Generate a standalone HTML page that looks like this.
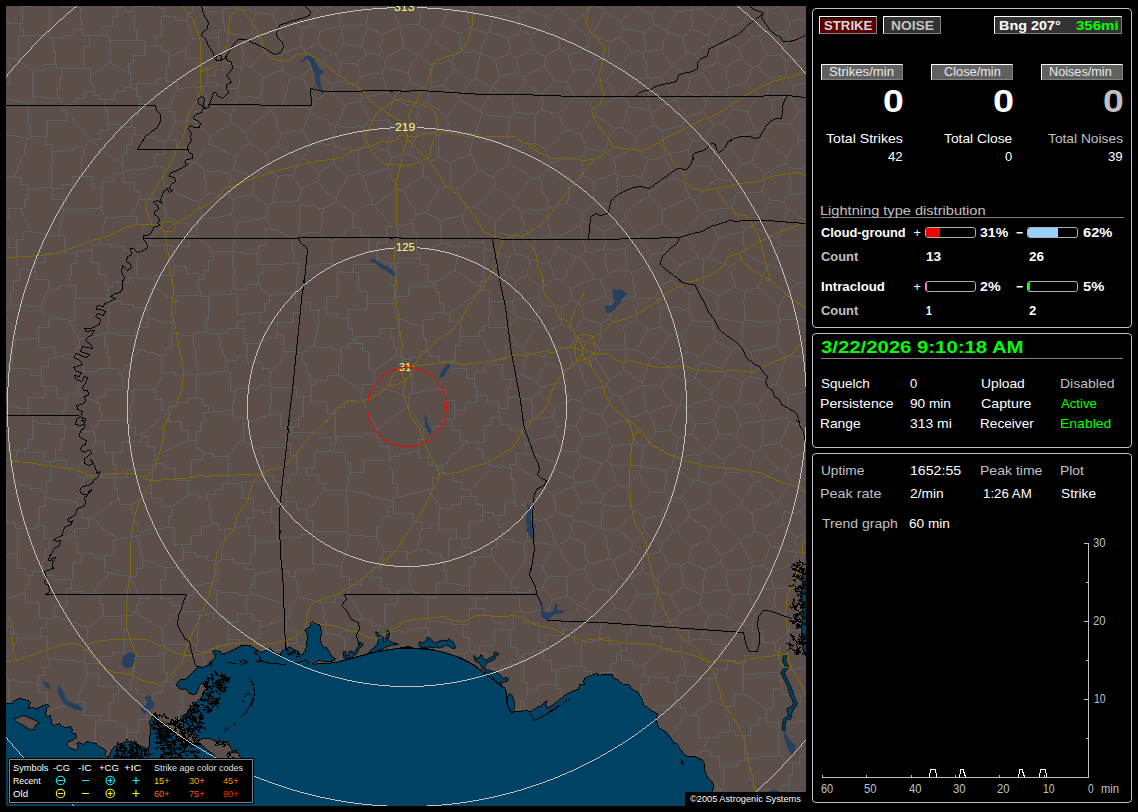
<!DOCTYPE html>
<html><head><meta charset="utf-8"><title>Lightning</title>
<style>
html,body{margin:0;padding:0;background:#000;}
body{width:1138px;height:812px;position:relative;overflow:hidden;font-family:"Liberation Sans",sans-serif;color:#fff;}
#map{position:absolute;left:6px;top:6px;width:800px;height:800px;background:#5c4f4a;overflow:hidden;}
#map svg{position:absolute;left:0;top:0;}
.pn{position:absolute;border:1px solid #c0c0c0;border-radius:4px;box-sizing:border-box;}
.t{position:absolute;white-space:nowrap;line-height:1;transform-origin:0 0;}
.r{transform-origin:100% 0;}
.g{color:#c0c0c0;}
.gr{color:#00e000;}
.b{font-weight:bold;}
.btn{position:absolute;box-sizing:border-box;border:1px solid;border-color:#fff #808080 #808080 #fff;background:#606060;}
.bar{position:absolute;box-sizing:border-box;border:1px solid #b0b0b0;border-radius:3px;height:11px;width:51px;}
.bar i{position:absolute;left:0;top:0;bottom:0;display:block;border-radius:2px 0 0 2px;}
.hl{position:absolute;height:1px;background:#808080;}
#leg{position:absolute;left:8px;top:758px;width:246px;height:46px;background:#000;}
#leg:before{content:"";position:absolute;left:1px;top:1px;right:1px;bottom:1px;border:1px solid #808080;}
#cpy{position:absolute;left:685px;top:792px;width:121px;height:14px;background:#000;}
</style></head><body>
<div id="map">
<svg width="800" height="800" viewBox="0 0 800 800" fill="none" stroke-linejoin="round" stroke-linecap="butt">
<g shape-rendering="crispEdges" stroke="#606060" stroke-width="1" ><path transform="translate(0,0.5)" d="M0 0m16 0h10m101 0h22m153 0h2m14 0h4m53 0h3m83 0h10m115 0h5m39 0h2m31 0h2m75 0h2m8 0h2m21 0h2m-720 1h20m32 0h13m71 0h10m26 0h4m73 0h2m10 0h2m4 0h5m27 0h6m7 0h2m9 0h3m203 0h2m5 0h5m36 0h2m108 0h2m8 0h2m15 0h4m-620 1h6m58 0h10m4 0h2m73 0h2m6 0h2m11 0h2m31 0h2m19 0h2m138 0h2m27 0h2m30 0h2m50 0h2m55 0h4m59 0h4m7 0h4m-695 1h3m156 0h2m4 0h5m64 0h2m2 0h2m15 0h2m31 0h2m19 0h2m73 0h3m58 0h2m2 0h2m163 0h3m4 0h3m60 0h7m-530 1h4m5 0h3m63 0h2m19 0h2m52 0h2m69 0h2m59 0h2m6 0h2m141 0h2m8 0h10m-569 1h10m71 0h18m29 0h2m194 0h13m59 0h2m129 0h2m22 0h8m-497 1h6m62 0h3m188 0h3m85 0h2m69 0h2m38 0h3m-390 1h11m267 0h3m25 0h2m41 0h2m39 0h3m-382 1h4m266 0h2m68 0h2m97 0h2m-213 1h10m34 0h2m5 0h2m160 0h2m-600 1h6m43 0h15m317 0h4m10 0h2m8 0h2m24 0h2m35 0h2m30 0h2m11 0h2m85 0h2m-205 1h2m3 0h3m28 0h2m167 0h2m3 0h2m-210 1h3m202 0h3m85 0h2m-190 1h2m104 0h2m74 0h6m-724 1h2m93 0h13m382 0h2m46 0h2m174 0h4m-792 1h3m563 0h2m46 0h2m169 0h3m-68 1h2m14 0h2m45 0h2m-783 1h15m200 0h2m68 0h2m444 0h3m-452 1h3m2 0h2m65 0h4m42 0h11m234 0h2m74 0h2m4 0h4m-452 1h3m20 0h2m1 0h2m24 0h2m3 0h18m37 0h9m35 0h2m210 0h2m74 0h4m-633 1h11m172 0h2m11 0h2m8 0h2m27 0h2m2 0h3m76 0h2m17 0h2m209 0h2m5 0h3m-378 1h3m15 0h8m25 0h4m30 0h2m27 0h3m47 0h2m21 0h2m71 0h2m32 0h2m82 0h2m-383 1h3m35 0h2m9 0h5m36 0h2m23 0h2m27 0h2m23 0h2m17 0h2m2 0h3m148 0h4m36 0h2m-591 1h10m194 0h2m44 0h5m43 0h3m18 0h2m31 0h2m23 0h3m12 0h2m7 0h3m149 0h5m33 0h2m25 0h2m-673 1h4m110 0h3m81 0h8m49 0h3m42 0h3m51 0h2m14 0h2m61 0h2m22 0h3m40 0h2m16 0h2m91 0h6m29 0h2m25 0h3m-470 1h2m43 0h4m101 0h2m10 0h2m43 0h2m45 0h3m6 0h2m31 0h2m12 0h2m29 0h2m12 0h2m54 0h5m54 0h3m65 0h4m11 0h4m-555 1h3m38 0h2m107 0h2m6 0h2m41 0h2m25 0h2m3 0h2m20 0h2m2 0h2m2 0h2m31 0h2m116 0h3m23 0h2m29 0h2m67 0h11m4 0h2m-554 1h2m17 0h3m12 0h4m111 0h2m2 0h2m99 0h2m6 0h2m31 0h2m5 0h2m135 0h4m27 0h3m81 0h2m-554 1h8m7 0h2m3 0h3m4 0h5m117 0h2m111 0h4m16 0h3m10 0h2m1 0h2m141 0h3m8 0h2m17 0h3m53 0h2m-739 1h27m13 0h11m8 0h28m131 0h2m3 0h2m8 0h4m239 0h4m9 0h3m71 0h2m4 0h3m82 0h4m2 0h2m22 0h2m-691 1h6m131 0h7m81 0h3m257 0h2m5 0h2m78 0h2m3 0h3m21 0h2m60 0h2m70 0h6m-710 1h15m141 0h14m286 0h2m1 0h2m88 0h3m16 0h2m132 0h2m35 0h4m-600 1h14m354 0h2m39 0h2m146 0h2m41 0h5m-194 1h3m8 0h2m48 0h2m131 0h4m-692 1h36m461 0h3m3 0h2m187 0h3m-695 1h2m498 0h3m192 0h2m-182 1h2m84 0h2m16 0h2m-388 1h4m366 0h2m12 0h2m2 0h2m-415 1h3m26 0h6m86 0h2m274 0h2m8 0h2m6 0h2m-420 1h3m35 0h6m82 0h2m274 0h8m-641 1h7m54 0h18m150 0h2m44 0h4m342 0h2m29 0h2m4 0h2m-444 1h3m8 0h2m273 0h3m114 0h2m33 0h2m-445 1h5m8 0h3m12 0h2m77 0h2m1 0h2m38 0h2m112 0h2m-342 1h6m67 0h3m9 0h4m17 0h3m72 0h2m5 0h2m123 0h2m23 0h2m2 0h2m20 0h2m-400 1h2m101 0h4m36 0h2m79 0h2m119 0h2m23 0h2m6 0h2m81 0h3m5 0h9m36 0h2m-647 1h3m105 0h8m12 0h3m100 0h3m42 0h2m6 0h2m57 0h2m12 0h2m36 0h2m11 0h3m7 0h5m51 0h2m23 0h2m25 0h2m53 0h6m8 0h5m-475 1h3m83 0h3m99 0h4m24 0h2m16 0h2m45 0h2m3 0h7m5 0h3m46 0h2m23 0h2m13 0h2m10 0h2m51 0h4m6 0h4m42 0h4m5 0h2m-521 1h2m89 0h4m61 0h4m34 0h5m39 0h2m63 0h3m26 0h2m13 0h2m13 0h2m32 0h5m113 0h5m-522 1h3m85 0h2m8 0h3m101 0h3m13 0h2m23 0h2m38 0h2m24 0h2m22 0h2m2 0h2m28 0h2m26 0h4m206 0h4m-649 1h12m25 0h3m101 0h8m47 0h2m47 0h2m9 0h2m27 0h2m34 0h2m28 0h3m17 0h2m14 0h2m20 0h2m2 0h2m219 0h11m-610 1h2m317 0h2m12 0h3m40 0h2m-183 1h2m16 0h2m3 0h2m33 0h2m66 0h3m7 0h2m13 0h2m1 0h2m88 0h2m-603 1h13m166 0h16m160 0h2m129 0h2m3 0h2m104 0h4m72 0h2m59 0h2m-729 1h2m344 0h2m133 0h3m98 0h8m7 0h2m125 0h3m60 0h6m-791 1h2m432 0h3m283 0h2m48 0h15m-783 1h3m425 0h4m284 0h2m-715 1h2m201 0h4m114 0h3m83 0h2m5 0h4m5 0h2m271 0h2m13 0h2m-711 1h2m85 0h3m16 0h6m93 0h4m113 0h11m77 0h2m4 0h5m172 0h2m97 0h2m2 0h2m-676 1h13m49 0h3m3 0h4m115 0h2m122 0h3m72 0h2m280 0h2m6 0h2m25 0h2m-724 1h2m77 0h2m10 0h2m48 0h3m64 0h2m7 0h6m370 0h3m88 0h3m15 0h2m-494 1h7m6 0h4m421 0h2m32 0h2m14 0h2m25 0h2m3 0h4m-559 1h8m110 0h2m65 0h3m153 0h2m162 0h2m45 0h3m-699 1h35m225 0h2m70 0h6m59 0h2m248 0h2m-675 1h2m183 0h9m86 0h6m78 0h4m57 0h2m81 0h2m36 0h15m86 0h2m-647 1h13m53 0h2m22 0h2m156 0h3m25 0h2m88 0h3m56 0h2m76 0h3m35 0h3m103 0h2m-585 1h2m26 0h3m128 0h2m19 0h4m26 0h2m93 0h4m128 0h2m-408 1h4m143 0h2m129 0h4m122 0h2m93 0h2m54 0h2m17 0h2m59 0h2m-492 1h2m11 0h2m84 0h12m127 0h10m9 0h2m168 0h2m63 0h2m-674 1h2m176 0h2m96 0h3m134 0h5m187 0h2m-609 1h2m115 0h9m52 0h2m94 0h4m94 0h2m37 0h4m21 0h2m166 0h3m-432 1h3m31 0h4m58 0h3m100 0h2m33 0h2m23 0h2m120 0h2m44 0h2m84 0h8m-524 1h3m25 0h9m167 0h2m174 0h4m2 0h2m4 0h8m28 0h2m82 0h4m-719 1h3m94 0h11m470 0h5m8 0h4m118 0h2m-450 1h2m143 0h2m3 0h3m119 0h3m34 0h4m133 0h2m-446 1h2m143 0h3m3 0h2m75 0h3m42 0h5m-438 1h12m161 0h2m138 0h2m76 0h10m37 0h3m-401 1h11m118 0h2m4 0h2m69 0h2m67 0h2m321 0h2m-670 1h21m186 0h15m56 0h2m67 0h2m257 0h4m55 0h3m-798 1h4m406 0h2m67 0h2m249 0h6m54 0h5m-585 1h11m191 0h2m20 0h4m43 0h2m243 0h4m11 0h2m44 0h3m-605 1h5m5 0h6m227 0h6m49 0h2m239 0h2m-609 1h10m52 0h6m5 0h5m220 0h2m8 0h3m57 0h3m36 0h2m196 0h2m-673 1h3m117 0h8m41 0h12m185 0h2m69 0h2m-364 1h5m99 0h2m164 0h2m21 0h2m19 0h3m47 0h2m-168 1h2m95 0h2m20 0h4m45 0h2m34 0h2m-452 1h11m19 0h10m204 0h2m170 0h2m86 0h2m133 0h3m-400 1h2m55 0h4m11 0h2m270 0h2m16 0h2m24 0h9m-344 1h4m155 0h2m150 0h3m-490 1h4m169 0h3m304 0h2m8 0h2m16 0h2m-619 1h7m221 0h2m9 0h2m36 0h5m319 0h4m88 0h4m-759 1h10m94 0h5m107 0h5m82 0h2m30 0h4m86 0h2m116 0h2m103 0h2m17 0h3m56 0h8m17 0h4m-745 1h6m191 0h9m5 0h5m79 0h2m25 0h3m140 0h2m107 0h7m54 0h3m27 0h2m57 0h2m12 0h3m-735 1h14m13 0h10m173 0h3m57 0h2m42 0h2m145 0h2m67 0h7m29 0h2m59 0h2m26 0h2m72 0h3m-774 1h5m89 0h15m201 0h2m75 0h3m216 0h2m10 0h2m48 0h2m93 0h2m2 0h4m-766 1h6m379 0h3m273 0h2m97 0h2m-756 1h6m335 0h3m38 0h2m60 0h2m146 0h2m59 0h2m-649 1h11m318 0h6m43 0h2m60 0h2m142 0h2m59 0h2m-464 1h3m74 0h2m63 0h4m51 0h3m17 0h2m3 0h2m35 0h2m101 0h2m35 0h2m59 0h2m-602 1h10m62 0h7m136 0h2m2 0h2m59 0h2m58 0h8m53 0h2m195 0h2m-456 1h2m67 0h2m6 0h3m54 0h2m68 0h2m53 0h2m191 0h2m-452 1h2m63 0h2m11 0h2m124 0h2m1 0h2m11 0h2m195 0h3m28 0h2m-448 1h3m51 0h2m5 0h2m15 0h14m128 0h2m36 0h2m158 0h7m-495 1h26m47 0h2m54 0h2m31 0h2m291 0h2m38 0h6m12 0h2m74 0h2m-516 1h2m50 0h2m35 0h3m164 0h2m64 0h2m54 0h2m46 0h4m86 0h3m-677 1h6m38 0h3m113 0h2m215 0h2m37 0h2m64 0h3m49 0h2m57 0h2m82 0h6m55 0h7m-637 1h6m19 0h13m16 0h2m44 0h2m208 0h3m56 0h2m6 0h4m10 0h2m90 0h2m48 0h2m40 0h4m-682 1h2m157 0h2m40 0h2m245 0h8m28 0h5m3 0h2m139 0h3m-636 1h2m159 0h2m82 0h2m209 0h11m22 0h3m138 0h3m-470 1h2m82 0h2m128 0h2m37 0h3m48 0h3m157 0h3m-565 1h8m346 0h11m194 0h3m-377 1h2m178 0h15m86 0h2m88 0h3m-372 1h2m365 0h2m-427 1h2m58 0h3m-65 1h2m63 0h4m58 0h3m213 0h2m-556 1h20m40 0h2m260 0h16m218 0h2m-431 1h22m58 1h2m-23 1h2m483 0h5m50 0h18m-763 1h3m77 0h13m209 0h2m5 0h2m51 0h4m319 0h5m-386 1h2m5 0h2m16 0h3m34 0h6m251 0h2m27 0h3m-458 1h2m107 0h2m5 0h4m10 0h2m3 0h2m38 0h6m204 0h2m37 0h2m4 0h2m18 0h5m89 0h2m-651 1h16m63 0h2m144 0h10m7 0h2m42 0h6m200 0h2m4 0h4m49 0h4m91 0h3m-690 1h2m141 0h2m188 0h3m199 0h4m4 0h2m22 0h2m10 0h2m9 0h2m93 0h2m-685 1h2m137 0h2m18 0h2m6 0h2m197 0h3m116 0h2m56 0h2m34 0h2m3 0h4m-586 1h2m14 0h10m94 0h2m13 0h2m22 0h2m2 0h2m52 0h3m142 0h2m3 0h5m109 0h2m2 0h4m90 0h3m-421 1h2m44 0h10m143 0h2m10 0h4m103 0h2m8 0h3m52 0h2m126 0h4m-474 1h5m127 0h8m150 0h4m50 0h2m118 0h6m4 0h2m-478 1h2m140 0h6m9 0h2m137 0h2m164 0h4m-618 1h7m143 0h2m148 0h9m302 0h3m-739 1h10m122 0h5m69 0h2m248 0h3m168 0h2m3 0h2m98 0h4m-726 1h5m9 0h18m95 0h5m317 0h5m264 0h4m-717 1h5m4 0h2m116 0h5m317 0h2m1 0h4m-451 1h4m123 0h3m316 0h2m3 0h3m224 0h2m56 0h2m-674 1h10m56 0h2m9 0h10m303 0h2m219 0h3m60 0h2m33 0h2m-643 1h4m320 0h2m208 0h9m100 0h3m-713 1h2m69 0h6m316 0h14m306 0h2m-713 1h2m403 0h2m268 0h2m-522 1h2m69 0h6m6 0h3m166 0h2m23 0h11m16 0h2m-509 1h8m73 0h6m78 0h2m38 0h2m62 0h5m6 0h6m34 0h2m135 0h3m31 0h2m12 0h2m-340 1h2m31 0h2m5 0h2m56 0h4m53 0h2m136 0h3m14 0h2m14 0h2m-326 1h2m38 0h2m20 0h2m56 0h3m32 0h5m138 0h5m-444 1h11m92 0h10m30 0h2m38 0h2m15 0h3m61 0h4m5 0h4m24 0h4m131 0h3m5 0h4m20 0h2m-325 1h2m51 0h2m6 0h2m60 0h5m32 0h2m163 0h2m41 0h4m42 0h2m3 0h2m90 0h2m-631 1h2m118 0h2m37 0h2m20 0h2m68 0h2m27 0h5m205 0h6m34 0h2m54 0h2m37 0h4m47 0h2m-716 1h12m28 0h2m118 0h2m59 0h3m67 0h7m25 0h3m208 0h6m26 0h2m54 0h2m34 0h5m-673 1h11m161 0h2m60 0h2m314 0h4m20 0h2m51 0h5m31 0h5m-494 1h2m35 0h2m408 0h6m101 0h2m-554 1h2m35 0h2m22 0h2m111 0h7m214 0h2m43 0h5m-551 1h5m27 0h11m65 0h2m59 0h2m107 0h2m7 0h2m57 0h2m151 0h2m42 0h3m-436 1h2m59 0h2m103 0h2m11 0h2m53 0h2m151 0h2m42 0h2m-556 1h2m184 0h2m94 0h7m15 0h2m49 0h2m112 0h4m28 0h2m5 0h2m42 0h2m-552 1h2m326 0h2m20 0h3m110 0h4m37 0h2m28 0h2m11 0h3m-363 1h2m2 0h2m131 0h2m4 0h2m15 0h3m111 0h2m39 0h2m40 0h3m-544 1h2m184 0h2m2 0h2m150 0h2m102 0h12m76 0h7m-539 1h2m188 0h2m123 0h3m10 0h2m7 0h3m102 0h2m-375 1h11m231 0h4m15 0h2m3 0h2m103 0h2m-110 1h3m98 0h7m193 0h3m-701 1h2m139 0h2m226 0h2m322 0h5m34 0h4m-666 1h2m208 0h2m408 0h3m9 0h2m25 0h3m-454 1h2m364 0h8m75 0h2m-628 1h12m147 0h2m200 0h2m188 0h8m65 0h2m-631 1h5m174 0h2m187 0h2m240 0h2m30 0h3m12 0h2m-664 1h5m118 0h2m57 0h2m59 0h2m115 0h2m288 0h12m-672 1h10m91 0h2m28 0h2m50 0h2m65 0h3m133 0h2m252 0h2m-647 1h5m72 0h3m24 0h2m2 0h2m80 0h2m2 0h2m16 0h2m39 0h2m96 0h3m18 0h2m19 0h2m239 0h2m-641 1h5m80 0h15m15 0h4m78 0h2m55 0h4m101 0h4m12 0h2m46 0h2m3 0h2m215 0h4m-549 1h8m11 0h4m14 0h2m111 0h4m147 0h2m239 0h3m-654 1h11m121 0h2m25 0h2m82 0h4m10 0h2m242 0h2m-435 1h2m64 0h3m94 0h2m6 0h4m4 0h2m4 0h4m184 0h2m56 0h2m72 0h2m-509 1h2m69 0h3m2 0h2m18 0h2m4 0h11m57 0h3m10 0h4m122 0h3m118 0h3m5 0h3m12 0h4m-630 1h9m57 0h21m160 0h2m22 0h4m66 0h2m72 0h2m1 0h2m45 0h2m18 0h3m34 0h2m54 0h2m20 0h3m11 0h12m4 0h3m-625 1h7m405 0h2m108 0h4m18 0h2m20 0h2m4 0h2m15 0h3m33 0h2m32 0h2m-144 1h5m64 0h3m72 0h2m41 0h2m-303 1h2m170 0h2m6 0h3m70 0h2m5 0h2m37 0h2m2 0h3m-308 1h2m49 0h2m94 0h2m12 0h2m13 0h2m2 0h2m71 0h2m9 0h2m42 0h8m-629 1h12m299 0h2m159 0h2m17 0h2m70 0h3m13 0h2m-560 1h12m179 0h4m93 0h2m250 0h2m47 0h2m-403 1h3m4 0h2m89 0h2m160 0h2m88 0h2m47 0h2m-692 1h8m34 0h11m99 0h2m135 0h2m9 0h2m247 0h2m88 0h2m-498 1h9m135 0h2m139 1h4m-414 1h14m252 0h2m137 0h5m4 0h2m5 0h2m-411 1h13m29 0h11m199 0h2m93 0h2m5 0h2m33 0h4m11 0h2m1 0h2m37 0h2m-471 1h12m356 0h2m2 0h2m36 0h2m59 0h2m153 0h2m-521 1h6m253 0h2m6 0h2m248 0h2m-480 1h2m326 0h2m146 0h2m109 0h3m-260 1h2m231 0h24m44 0h2m-630 1h2m31 0h4m114 0h2m464 0h11m-626 1h3m24 0h4m4 0h3m5 0h9m21 0h3m536 0h3m-612 1h3m32 0h5m24 0h6m537 0h2m-606 1h2m54 0h5m10 0h2m74 0h2m53 0h2m-202 1h2m47 0h5m93 0h2m49 0h2m260 0h2m41 0h2m-590 1h2m49 0h13m23 0h2m42 0h3m409 0h2m4 0h2m35 0h2m-665 1h4m24 0h12m75 0h14m37 0h2m8 0h2m440 0h2m40 0h3m5 0h2m-502 1h3m65 0h2m34 0h3m81 0h2m258 0h2m40 0h2m86 0h9m-584 1h4m82 0h5m5 0h5m38 0h2m145 0h2m155 0h2m40 0h2m97 0h3m-510 1h9m5 0h5m86 0h2m276 0h2m21 0h2m102 0h2m-520 1h2m4 0h2m59 0h2m42 0h2m188 0h3m25 0h3m6 0h6m27 0h2m38 0h3m-412 1h2m32 0h3m8 0h2m56 0h6m102 0h2m81 0h5m3 0h2m26 0h6m6 0h5m60 0h2m-372 1h2m3 0h3m2 0h2m13 0h2m35 0h4m187 0h4m10 0h2m41 0h4m54 0h2m-368 1h3m34 0h2m19 0h2m106 0h5m36 0h2m38 0h4m113 0h2m60 0h2m-634 1h3m214 0h2m7 0h2m17 0h2m15 0h2m103 0h5m45 0h2m32 0h2m21 0h2m91 0h3m60 0h2m-723 1h17m62 0h14m217 0h7m21 0h2m129 0h2m69 0h2m25 0h2m87 0h2m54 0h9m-666 1h25m260 0h2m158 0h2m17 0h5m6 0h10m38 0h2m74 0h2m51 0h5m67 0h2m-412 1h2m141 0h2m2 0h3m5 0h6m40 0h2m127 0h8m74 0h2m-412 1h2m141 0h2m56 0h2m1 0h2m41 0h2m77 0h2m84 0h2m-438 1h2m66 0h3m56 0h2m219 0h2m-352 1h2m64 0h4m3 0h2m366 0h2m-380 1h3m9 0h2m31 0h2m-239 1h8m198 0h2m27 0h2m-343 1h19m29 0h2m51 0h5m208 0h2m21 0h4m28 0h2m309 0h2m-794 1h3m96 0h14m49 0h2m39 0h10m45 0h3m167 0h2m14 0h5m345 0h2m-632 1h2m32 0h5m50 0h5m172 0h2m9 0h3m352 0h3m-633 1h2m26 0h4m50 0h5m184 0h4m44 0h2m4 0h2m-325 1h2m73 0h5m185 0h4m50 0h2m87 0h2m39 0h2m-449 1h2m61 0h10m335 0h2m35 0h2m-445 1h2m56 0h3m347 0h2m-408 1h7m221 0h6m204 0h2m41 0h2m-527 1h7m253 0h4m5 0h3m181 0h2m25 0h2m41 0h2m-473 1h2m203 0h3m4 0h5m174 0h2m10 0h2m21 0h2m40 0h3m5 0h2m-280 1h7m184 0h2m14 0h2m17 0h2m40 0h2m94 0h3m-562 1h6m154 0h10m214 0h2m18 0h2m13 0h2m39 0h3m93 0h3m3 0h2m-406 1h2m222 0h2m22 0h2m50 0h2m17 0h2m75 0h2m8 0h2m-492 1h10m72 0h2m222 0h2m26 0h2m6 0h2m38 0h2m108 0h2m-484 1h3m245 0h2m76 0h2m2 0h2m152 0h2m-738 1h10m245 0h2m215 0h2m22 0h2m4 0h2m41 0h2m33 0h2m136 0h3m17 0h2m-730 1h6m241 0h2m24 0h14m177 0h2m67 0h2m169 0h4m22 0h2m-726 1h5m238 0h2m14 0h8m107 0h4m82 0h5m60 0h2m108 0h11m50 0h2m28 0h2m-723 1h6m234 0h2m35 0h2m181 0h5m6 0h2m45 0h2m77 0h3m84 0h7m32 0h2m-719 1h15m123 0h10m88 0h2m7 0h2m63 0h9m140 0h2m2 0h2m34 0h2m9 0h2m75 0h4m128 0h2m-483 1h2m50 0h2m169 0h2m32 0h4m2 0h2m5 0h2m165 0h2m44 0h3m-768 1h3m281 0h2m33 0h2m11 0h2m192 0h2m8 0h3m8 0h2m1 0h2m160 0h3m53 0h3m-441 1h2m145 0h13m38 0h2m2 0h4m179 0h3m53 0h2m-763 1h8m118 0h9m183 0h2m200 0h2m-209 1h2m1 0h2m336 0h2m-471 1h2m0 1h2m171 0h11m82 0h15m-44 1h10m-359 1h21m325 0h3m-303 1h11m2 0h23m85 0h8m169 0h2m344 0h24m-694 1h14m47 0h17m244 0h2m14 0h21m-462 1h9m414 0h2m125 0h2m-131 1h2m53 0h2m74 0h2m56 0h8m-199 1h2m57 0h2m112 0h12m4 0h2m-534 1h8m32 0h14m94 0h2m58 0h2m74 0h9m48 0h2m61 0h2m73 0h2m31 0h4m12 0h4m-540 1h9m128 0h21m189 0h2m65 0h4m91 0h3m5 0h3m-532 1h13m156 0h10m178 0h2m71 0h5m67 0h2m20 0h5m68 0h4m-621 1h21m177 0h17m157 0h5m78 0h2m13 0h2m52 0h2m84 0h7m4 0h2m-166 1h2m9 0h2m2 0h4m50 0h2m79 0h3m92 0h2m-245 1h2m15 0h3m49 0h2m174 0h2m-245 1h2m2 0h2m12 0h3m48 0h2m3 0h2m169 0h2m-376 1h2m129 0h2m17 0h2m48 0h3m117 0h3m8 0h3m30 0h2m10 0h2m-376 1h2m18 0h22m274 0h2m3 0h3m3 0h2m3 0h3m25 0h2m-48 1h2m8 0h3m8 0h2m40 0h2m-549 1h6m167 0h2m146 0h8m153 0h2m23 0h2m40 0h2m-623 1h2m245 0h2m152 0h2m148 0h3m27 0h2m40 0h2m-726 1h10m46 0h8m286 0h2m152 0h2m5 0h3m135 0h3m32 0h2m40 0h2m-692 1h6m206 0h16m21 0h13m54 0h12m142 0h5m130 0h2m4 0h2m37 0h2m40 0h2m-508 1h27m69 0h24m42 0h9m252 0h2m41 0h3m7 0h2m30 0h2m3 0h2m-756 1h2m291 0h12m13 0h2m311 0h2m77 0h2m3 0h2m34 0h3m2 0h3m-601 1h13m457 0h3m81 0h3m44 0h2m-479 1h12m332 0h2m6 0h2m-635 1h11m612 0h2m-303 1h2m297 0h2m-613 1h9m167 0h6m274 0h2m129 0h14m8 0h2m-301 1h6m110 0h4m155 0h2m14 0h2m3 0h3m143 0h2m-439 1h17m91 0h3m4 0h2m151 0h2m18 0h3m148 0h2m-597 1h13m249 0h2m9 0h2m147 0h2m173 0h2m-716 1h3m26 0h8m152 0h5m183 0h2m55 0h2m-351 1h21m287 0h2m37 0h2m2 0h2m19 0h2m258 0h2m-290 1h3m6 0h2m14 0h3m-398 1h9m359 0h2m11 0h2m10 0h2m-387 1h19m311 0h2m23 0h5m15 0h2m6 0h2m34 0h2m35 0h3m-560 1h14m149 0h6m236 0h2m26 0h2m17 0h4m22 0h2m2 0h2m34 0h2m2 0h4m29 0h2m3 0h4m-586 1h7m415 0h5m45 0h2m28 0h2m34 0h2m8 0h2m25 0h2m9 0h3m68 0h2m-245 1h9m35 0h2m7 0h5m47 0h2m52 0h2m80 0h2m123 0h2m-683 1h17m344 0h2m59 0h2m47 0h3m80 0h2m5 0h2m120 0h2m2 0h7m-225 1h2m81 0h2m131 0h2m-645 1h2m90 0h13m319 0h3m-522 1h17m314 0h5m82 0h2m66 0h2m29 0h2m99 0h2m115 0h2m-691 1h8m295 0h25m46 0h2m61 0h3m29 0h2m103 0h2m-141 1h2m30 0h2m127 0h2m31 0h3m19 0h2m-608 1h7m413 0h2m127 0h2m2 0h2m26 0h3m3 0h2m13 0h4m2 0h2m-712 1h12m97 0h2m72 0h16m436 0h2m12 0h2m6 0h2m22 0h2m8 0h2m8 0h3m8 0h2m-603 1h2m37 0h3m279 0h10m217 0h2m18 0h2m12 0h2m3 0h3m-486 1h2m93 0h10m326 0h2m13 0h3m13 0h2m16 0h3m-736 1h4m148 0h2m101 0h2m168 0h5m37 0h2m208 0h2m23 0h2m9 0h2m-494 1h7m29 0h2m13 0h14m395 0h2m21 0h2m5 0h2m-515 1h24m37 0h14m433 0h2m1 0h2m65 0h2m-611 1h24m272 0h2m-275 1h9m117 0h12m55 0h16m195 0h2m27 0h3m-469 1h3m361 0h8m63 0h2m24 0h5m3 0h2m15 0h3m-582 1h32m64 0h4m295 0h2m47 0h5m5 0h3m68 0h3m21 0h5m10 0h15m-547 1h4m357 0h2m46 0h3m5 0h5m69 0h2m19 0h5m-448 1h3m335 0h2m57 0h2m19 0h4m16 0h5m153 0h2m-664 1h13m53 0h3m311 0h24m76 0h4m17 0h3m-318 1h16m128 0h5m131 0h2m10 0h2m-325 1h6m97 0h27m147 0h2m34 0h2m6 0h2m-466 1h13m409 0h2m20 0h2m12 0h2m2 0h2m-577 1h23m429 0h2m83 0h4m5 0h4m23 0h2m-577 1h2m22 0h11m508 0h5m4 0h2m2 0h2m112 0h2m-545 1h12m415 0h2m99 0h3m9 0h3m2 0h2m-361 1h8m129 0h2m206 0h9m7 0h2m4 0h3m-545 1h7m197 0h20m86 0h2m226 0h4m-376 1h10m131 1h2m-201 1h13m28 0h9m131 0h11m-272 1h4m68 0h9m73 0h12m105 0h7m-213 1h8m-98 3h3m367 0h2m-471 1h11m91 0h4m52 0h3m128 0h12m170 0h3m62 0h2m129 0h9m69 0h5m-740 1h11m85 0h2m241 0h8m18 0h11m88 0h10m54 0h3m18 0h2m104 0h2m9 0h5m53 0h11m5 0h5m-735 1h7m81 0h3m246 0h2m125 0h3m54 0h3m19 0h2m21 0h2m57 0h4m32 0h5m10 0h9m26 0h3m21 0h2m-646 1h2m5 0h3m68 0h8m204 0h12m74 0h2m55 0h3m37 0h2m4 0h2m57 0h15m22 0h10m9 0h6m5 0h12m-615 1h5m3 0h2m89 0h34m114 0h2m185 0h3m5 0h2m9 0h2m14 0h2m127 0h5m12 0h3m-608 1h2m237 0h2m186 0h2m16 0h2m10 0h2m-218 1h9m139 0h3m37 0h2m24 0h2m-207 1h3m59 0h6m69 0h2m3 0h3m53 0h2m3 0h2m-88 1h3m15 0h2m8 0h2m53 0h3m35 0h2m-623 1h11m86 0h13m340 0h22m31 0h3m10 0h2m12 0h2m86 0h3m-432 1h18m135 0h18m110 0h2m34 0h2m5 0h3m16 0h2m2 0h2m70 0h2m4 0h4m-308 1h5m196 0h2m21 0h2m74 0h4m-173 1h5m63 0h2m-356 2h14m458 0h2m-565 1h16m53 0h9m26 0h22m-130 1h4m78 0h2m95 0h7m384 0h10m-582 1h2m19 0h19m46 0h9m487 0h4m-590 1h4m95 0h3m162 0h25m79 0h20m-393 1h5m176 0h10m113 0h3m181 0h4m-550 1h10m43 0h5m336 0h4m152 0h3m-567 1h15m49 0h3m177 1h10m83 0h5m228 2h4m128 0h2m-475 1h16m88 0h15m226 0h4m0 1h3m124 0h2m-618 1h4m204 0h3m140 0h6m44 0h13m33 0h4m41 0h2m124 0h3m51 0h2m-260 1h2m35 0h5m148 0h2m15 0h2m13 0h2m31 0h3m-738 1h17m20 0h5m229 0h2m3 0h19m8 0h8m44 0h4m123 0h2m38 0h5m173 0h2m2 0h2m25 0h4m-761 1h4m149 0h7m393 0h3m160 0h2m5 0h3m6 0h2m18 0h5m-634 1h7m190 0h10m257 0h38m96 0h2m24 0h5m-622 1h2m493 0h2m19 0h2m71 0h2m14 0h2m5 0h5m-621 1h2m4 0h2m137 0h14m7 0h2m56 0h7m50 0h11m209 0h2m111 0h2m-608 1h8m143 0h4m225 0h4m159 0h2m59 0h2m-598 1h2m145 0h2m227 0h4m108 0h2m41 0h2m-624 1h15m78 0h2m376 0h3m155 0h2m6 0h2m-544 1h8m371 0h5m152 0h2m2 0h2m-646 1h10m173 0h11m148 0h8m25 0h11m102 0h3m101 0h2m48 0h2m88 0h20m-699 1h3m284 0h2m13 0h11m228 0h2m3 0h2m-607 1h7m337 0h2m256 0h3m2 0h2m-267 1h2m11 0h7m84 0h12m87 0h3m61 0h2m19 0h2m-453 1h11m150 0h2m201 0h2m82 0h3m-292 1h2m51 0h17m133 0h2m82 0h2m-449 1h2m19 0h16m283 0h2m39 0h2m72 0h2m36 0h4m-626 1h7m45 0h2m95 0h2m74 0h5m31 0h4m206 0h2m35 0h2m116 0h6m-582 1h2m253 0h2m100 0h19m47 0h3m30 0h2m79 0h2m43 0h3m-704 1h5m112 0h2m97 0h4m221 0h2m102 0h2m18 0h4m4 0h2m83 0h2m44 0h2m-673 1h8m400 0h2m104 0h2m14 0h2m4 0h4m87 0h2m44 0h2m-338 1h2m177 0h2m157 0h4m-712 1h23m66 0h22m143 0h9m105 0h2m72 0h17m92 0h3m6 0h2m150 0h3m-450 1h2m93 0h8m186 0h2m2 0h2m-4 1h2m57 0h2m-544 1h17m118 0h15m39 0h2m202 0h11m140 0h2m-507 1h2m39 0h15m36 0h4m54 0h2m355 0h2m-511 1h2m81 0h5m4 0h2m197 0h3m258 0h2m-554 1h5m52 0h26m5 0h4m96 0h5m210 0h2m95 0h2m52 0h3m49 0h2m-696 1h12m154 0h2m129 0h12m180 0h2m2 0h2m90 0h3m57 0h2m49 0h3m-723 1h3m330 0h2m176 0h2m6 0h2m86 0h2m114 0h3m18 0h3m-412 1h2m172 0h2m10 0h2m82 0h2m19 0h2m98 0h3m13 0h2m3 0h2m-289 1h9m37 0h3m14 0h2m78 0h2m23 0h2m58 0h2m39 0h2m18 0h5m-258 1h10m19 0h3m102 0h2m42 0h2m10 0h2m2 0h2m39 0h2m6 0h2m13 0h4m-449 1h13m17 0h2m187 0h2m102 0h2m42 0h2m6 0h2m47 0h2m2 0h2m19 0h2m-230 1h2m102 0h3m41 0h2m2 0h2m51 0h2m23 0h2m-690 1h4m476 0h3m125 0h2m80 0h2m-501 1h2m78 0h2m60 0h2m140 0h5m-289 1h2m80 0h2m9 0h13m174 0h4m218 0h6m-519 1h13m39 0h6m58 0h2m171 0h2m57 0h2m33 0h17m-617 1h16m297 0h2m20 0h3m95 0h3m66 0h4m57 0h2m33 0h2m17 0h4m116 0h2m-658 1h6m142 0h27m59 0h2m21 0h3m158 0h3m53 0h8m33 0h2m65 0h2m-470 1h23m123 0h4m121 0h4m83 0h2m39 0h2m69 0h2m-603 1h18m10 0h23m203 0h2m25 0h4m43 0h13m146 0h2m39 0h2m-274 1h2m27 0h2m31 0h10m153 0h6m39 0h2m-506 1h7m96 0h7m124 0h2m29 0h3m25 0h3m380 0h3m-411 1h2m18 0h5m208 0h2m169 0h4m-736 1h13m317 0h3m9 0h6m121 0h2m88 0h2m168 0h3m-719 1h2m318 0h2m211 0h2m9 0h2m166 0h4m-714 1h2m225 0h3m90 0h3m71 0h12m127 0h4m3 0h2m164 0h4m-708 1h2m11 0h9m190 0h14m95 0h3m211 0h3m-594 1h18m40 0h2m273 0h2m45 0h2m97 0h13m23 0h2m121 0h2m-612 1h12m119 0h16m316 0h13m13 0h2m164 0h2m-624 1h2m64 0h7m408 0h6m132 0h3m-620 1h2m352 0h10m112 0h3m6 0h4m124 0h4m-615 1h2m137 0h3m76 0h17m16 0h18m125 0h12m66 0h2m133 0h4m34 0h2m-645 1h3m79 0h11m277 0h12m86 0h2m132 0h3m36 0h2m2 0h2m-645 1h3m461 0h2m131 0h3m45 0h2m4 0h5m-82 1h3m18 0h2m50 0h4m5 0h3m-554 1h7m459 0h3m3 0h2m3 0h3m7 0h3m40 0h2m22 0h2m-751 1h12m149 0h10m379 0h2m106 0h3m8 0h3m3 0h2m2 0h3m30 0h3m6 0h4m-397 1h10m61 0h2m254 0h3m19 0h2m36 0h6m-710 1h11m375 0h2m92 0h10m151 0h3m-501 1h8m415 0h2m70 0h3m-435 1h9m168 0h2m51 0h12m120 0h2m65 0h3m-594 1h4m33 0h3m110 0h12m364 0h2m56 0h2m2 0h3m-449 1h8m378 0h4m49 0h3m2 0h2m-644 1h2m158 0h3m158 0h9m258 0h3m44 0h2m-375 1h13m115 0h2m199 0h3m39 0h2m-613 1h5m233 0h2m332 0h2m35 0h2m-477 1h2m99 0h3m32 0h6m246 0h3m77 0h7m-405 1h12m17 0h2m129 0h2m97 0h9m40 0h10m230 0h4m-526 1h3m271 0h8m237 0h3m4 0h4m-630 1h2m96 0h2m184 0h13m75 0h2m94 0h3m143 0h5m-680 1h34m122 0h3m132 0h2m138 0h2m94 0h2m134 0h12m-740 1h6m130 0h14m68 0h3m133 0h2m229 0h7m88 0h2m41 0h5m-560 1h5m42 0h3m365 0h2m92 0h3m34 0h9m35 0h2m-755 1h13m195 0h2m366 0h2m82 0h12m35 0h2m46 0h2m9 0h2m-756 1h16m178 0h2m254 0h12m183 0h3m45 0h2m50 0h4m3 0h2m-319 1h8m68 0h12m38 0h2m128 0h2m56 0h3m-708 1h5m52 0h2m140 0h7m134 0h10m114 0h3m12 0h4m31 0h3m-546 1h11m55 0h6m144 0h13m86 0h2m-90 1h2m83 0h3m-305 1h10m207 0h2m130 0h11m235 0h2m-490 1h8m102 0h2m159 0h9m49 0h12m143 0h4m-663 1h3m74 0h11m102 0h5m90 0h2m362 0h10m-522 1h2m146 0h28m284 0h3m-513 1h3m267 0h14m222 0h4m88 0h2m-558 1h7m454 0h3m88 0h4m27 0h14m-447 1h7m260 0h2m37 0h5m78 0h2m8 0h3m45 0h3m-594 1h7m187 0h29m185 0h3m33 0h6m85 0h2m2 0h4m51 0h2m-419 1h13m4 0h2m210 0h2m33 0h3m93 0h2m-619 1h4m270 0h2m39 0h5m158 0h8m-519 1h5m302 0h2m81 0h6m113 0h2m-352 1h10m45 0h2m216 0h8m66 0h3m-442 1h10m17 0h20m43 0h2m53 0h2m1 0h2m221 0h2m64 0h2m-352 1h3m53 0h2m5 0h2m87 0h3m129 0h19m43 0h4m247 0h2m-601 1h2m65 0h2m36 0h6m39 0h5m190 0h3m107 0h4m8 0h2m127 0h3m-602 1h3m69 0h2m368 0h16m10 0h2m2 0h2m116 0h9m-601 1h2m74 0h2m209 0h2m147 0h8m21 0h2m1 0h2m6 0h2m89 0h2m19 0h4m-620 1h8m18 0h2m205 0h10m263 0h2m83 0h2m21 0h2m-509 1h2m5 0h25m369 0h3m87 0h2m-723 1h5m141 0h2m84 0h2m400 0h2m123 0h2m-730 1h7m106 0h2m26 0h7m55 0h2m217 0h6m177 0h2m43 0h4m39 0h2m8 0h2m25 0h2m-779 1h17m141 0h2m92 0h2m301 0h4m95 0h2m86 0h2m3 0h3m29 0h2m-626 1h3m148 0h17m78 0h10m148 0h11m86 0h2m44 0h2m40 0h3m-731 1h21m59 0h19m38 0h2m171 0h12m109 0h2m209 0h2m136 0h2m-648 1h3m41 0h12m185 0h11m43 0h2m61 0h12m140 0h3m130 0h3m-648 1h2m70 0h2m298 0h6m137 0h2m19 0h5m17 0h2m13 0h2m68 0h2m-647 1h2m70 0h2m62 0h7m237 0h4m42 0h2m91 0h4m10 0h5m5 0h3m16 0h2m78 0h3m-586 1h16m160 0h11m138 0h3m41 0h2m93 0h10m107 0h2m-407 1h2m27 0h11m53 0h7m52 0h3m40 0h3m205 0h2m-405 1h2m153 0h2m41 0h3m130 0h2m-531 1h12m186 0h2m155 0h3m41 0h3m-583 1h7m38 0h12m296 0h28m158 0h3m41 0h2m-551 1h11m497 0h2m41 0h3m8 0h2m-263 1h6m247 0h2m3 0h3m-452 1h11m280 0h2m153 0h3m6 0h2m-499 1h4m327 0h2m65 0h7m94 0h3m-462 1h3m273 0h15m45 0h7m119 0h27m-146 1h3m4 0h4m134 0h3m131 0h2m-710 1h13m419 0h4m4 0h3m134 0h6m20 0h2m3 0h2m100 0h2m-614 1h12m120 0h19m194 0h3m137 0h9m120 0h4m-655 1h26m237 0h3m265 0h2m116 0h2m4 0h4m-780 1h5m511 0h2m32 0h2m102 0h7m11 0h2m62 0h7m25 0h2m-37 1h3m-392 1h14m161 0h2m32 0h2m167 0h11m-297 1h11m74 0h2m32 0h2m162 0h3m42 0h2m-483 1h8m232 0h2m32 0h3m117 0h2m-421 1h10m32 0h13m247 0h2m199 0h2m-237 1h2m34 0h2m66 0h2m127 0h2m-689 1h50m304 0h7m131 0h2m115 0h2m74 0h2m-651 1h2m35 0h2m419 0h2m-63 1h3m176 0h2m111 0h2m-630 1h17m345 0h2m47 0h8m37 0h2m59 0h2m3 0h3m-694 1h14m26 0h5m191 0h23m8 0h17m162 0h10m121 0h3m108 0h3m3 0h3m16 0h3m33 0h5m31 0h2m7 0h2m-262 1h2m36 0h5m120 0h3m9 0h4m74 0h3m2 0h2m-794 1h2m214 0h21m75 0h7m67 0h6m144 0h2m30 0h4m128 0h3m3 0h3m81 0h2m-182 1h2m91 0h3m86 0h2m-781 1h12m587 0h4m-50 1h3m47 0h3m-55 1h2m53 0h2m-597 1h13m71 0h4m449 0h3m-355 1h8m123 0h3m77 0h7m28 0h11m93 0h2m43 0h2m-288 1h23m2 0h5m70 0h2m137 0h2m43 0h2m156 0h2m-485 1h4m67 0h2m64 0h4m89 0h2m32 0h2m12 0h2m87 0h4m114 0h2m-728 1h5m102 0h3m204 0h8m51 0h5m139 0h2m93 0h11m105 0h2m-625 1h2m172 0h2m41 0h2m44 0h5m142 0h2m45 0h2m-418 1h12m7 0h9m150 0h2m38 0h4m130 0h2m9 0h2m2 0h2m189 0h2m-561 1h2m179 0h2m34 0h2m131 0h3m13 0h2m-412 1h2m40 0h2m183 0h2m28 0h4m57 0h16m58 0h2m131 0h3m-626 1h3m151 0h9m164 0h8m13 0h7m133 0h2m136 0h6m-629 1h5m64 0h3m31 0h11m80 0h12m126 0h2m295 0h4m-628 1h11m53 0h3m19 0h2m241 0h4m-322 1h6m45 0h2m20 0h2m41 0h2m25 0h3m176 0h4m139 0h2m-461 1h8m100 0h2m106 0h11m93 0h2m135 0h2m-417 1h2m20 0h2m40 0h2m214 0h2m110 0h11m65 0h19m109 0h2m64 0h4m-668 1h2m20 0h2m180 0h2m30 0h2m176 0h2m73 0h3m104 0h2m62 0h4m-655 1h13m180 0h2m137 0h11m14 0h7m39 0h2m82 0h4m94 0h2m62 0h2m9 0h2m-471 1h2m202 0h13m76 0h3m4 0h3m4 0h12m109 0h2m26 0h2m-729 1h7m115 0h12m98 0h16m101 0h6m219 0h4m12 0h4m68 0h2m61 0h2m-327 2h13m245 0h3m34 0h2m23 0h4m-660 1h2m104 0h2m85 0h11m386 0h4m35 0h2m22 0h3m-682 1h6m18 0h2m150 0h10m427 0h3m54 0h2m-194 1h2m79 0h2m50 0h2m39 0h2m53 0h3m10 0h3m-538 1h10m210 0h12m63 0h2m168 0h2m21 0h2m35 0h10m-700 1h2m32 0h4m258 0h20m146 0h3m0 1h2m160 0h2m-233 1h12m59 0h8m86 0h3m61 0h2m-556 1h5m209 0h7m263 0h6m3 0h2m-571 1h2m454 0h2m97 0h5m37 0h2m-609 1h11m154 0h7m272 0h7m111 0h3m-554 1h2m438 0h4m6 0h4m26 0h2m51 0h2m64 0h2m-599 1h2m209 0h7m224 0h6m32 0h2m117 0h2m-284 1h10m47 0h14m94 0h8m111 0h2m-692 1h10m118 0h4m133 0h6m308 0h2m96 0h2m-475 1h9m368 0h2m-159 1h10m149 0h4m87 0h2m-646 1h9m548 0h4m103 0h2m79 0h2m-582 1h10m28 0h10m127 0h7m214 0h3m102 0h2m21 0h2m52 0h2m-618 1h12m58 0h6m259 0h5m97 0h2m102 0h2m7 0h2m12 0h2m48 0h2m-764 1h22m37 0h15m64 0h10m65 0h5m188 0h10m275 0h2m-560 1h5m65 0h10m211 0h18m70 0h5m71 0h16m91 0h2m-569 1h5m525 0h4m-572 1h2m30 0h6m169 0h36m406 0h2m32 0h2m-145 1h2m105 0h2m2 0h3m-651 1h2m649 0h3m9 0h2m-663 1h2m188 0h13m34 0h4m272 0h2m137 0h2m5 0h2m-659 1h2m22 0h5m50 0h11m46 0h8m94 0h14m384 0h2m14 0h2m1 0h2m24 0h2m4 0h2m-669 1h4m227 0h14m249 0h2m118 0h2m49 0h2m-736 1h15m50 0h4m146 0h23m268 0h2m-527 1h20m57 0h7m320 0h22m101 0h2m79 0h2m89 0h2m-632 1h8m375 0h17m60 0h4m77 0h2m50 0h2m33 0h2m-217 1h4m47 0h3m76 0h2m6 0h2m38 0h2m-440 1h15m242 0h5m2 0h2m32 0h2m92 0h2m2 0h2m38 0h2m-449 1h12m245 0h13m7 0h2m3 0h5m20 0h2m17 0h2m77 0h2m38 0h2m37 0h2m-207 1h3m5 0h5m13 0h2m136 0h2m37 0h2m-565 1h18m355 0h6m5 0h2m135 0h3m37 0h2m-184 1h5m135 0h2m-4 1h2m77 0h3m-311 1h10m19 0h6m276 0h5m-596 1h2m373 0h2m219 0h4m-737 1h5m366 0h13m353 0h2m-370 1h2m213 0h2m99 0h2m52 0h4m-405 1h25m4 0h2m219 0h2m24 0h2m67 0h2m58 0h6m-611 1h13m214 0h2m112 0h2m130 0h3m67 0h2m66 0h11m-795 1h8m59 0h17m156 0h6m151 0h3m18 0h13m184 0h2m26 0h3m68 0h2m-103 1h2m24 0h4m69 0h2m-718 1h5m93 0h10m507 0h2m15 0h2m6 0h3m-454 1h13m272 0h12m127 0h2m22 0h3m-266 1h4m87 0h10m160 0h2m-550 1h12m335 0h9m160 0h2m5 0h2m-397 1h13m372 0h3m2 0h2m1 0h2m-574 1h4m96 0h8m27 0h7m23 0h15m380 0h4m-456 1h3m372 0h2m71 0h4m-530 1h10m71 0h2m157 0h2m213 0h3m65 0h3m88 0h2m1 0h2m-458 1h18m279 0h4m54 0h7m89 0h2m5 0h2m25 0h2m-564 1h2m155 0h19m202 0h6m129 0h9m4 0h2m9 0h2m21 0h2m73 0h2m-462 1h11m198 0h3m135 0h4m13 0h2m17 0h2m45 0h3m24 0h3m-632 1h4m306 0h6m222 0h3m11 0h3m39 0h8m24 0h3m-625 1h15m102 0h4m88 0h9m319 0h2m6 0h3m39 0h3m30 0h2m-768 1h9m110 0h7m34 0h6m97 0h2m300 0h3m117 0h2m2 0h2m39 0h3m16 0h2m12 0h3m-538 1h10m17 0h8m15 0h19m260 0h8m122 0h2m37 0h4m31 0h2m-510 1h2m171 0h4m280 0h16m31 0h4m-746 1h11m223 0h4m13 0h7m352 0h2m19 0h2m105 0h4m-670 1h7m150 0h5m374 0h2m2 0h2m-535 1h5m142 0h3m377 0h2m6 0h2m-532 1h5m135 0h2m378 0h2m10 0h2m-625 1h8m9 0h13m66 0h6m127 0h2m378 0h2m14 0h2m-525 1h10m45 0h7m100 0h7m45 0h9m201 0h17m84 0h2m-293 1h20m166 0h4m68 0h3m9 0h2m21 0h2m-34 1h5m29 0h2m-604 1h19m30 0h2m55 0h6m461 0h3m-416 2h4m218 1h13m-246 1h12m234 0h6m-430 1h5m220 0h5m94 0h13m93 0h6m-273 1h16m257 0h9m334 0h2m-264 1h2m258 0h2m-293 1h6m25 0h2m137 0h2m1 0h2m86 0h2m9 0h5m10 0h4m-736 1h6m308 0h10m204 0h4m88 0h3m81 0h2m2 0h9m5 0h10m-269 1h14m55 0h7m84 0h2m35 0h3m32 0h9m-556 1h7m176 0h15m193 0h4m68 0h2m12 0h3m19 0h13m32 0h3m-690 1h13m263 0h3m62 0h2m73 0h25m146 0h2m15 0h2m17 0h2m15 0h2m-493 1h19m11 0h2m95 0h2m65 0h3m99 0h14m130 0h3m33 0h2m5 0h3m3 0h2m44 0h2m-734 1h3m57 0h17m152 0h2m93 0h2m40 0h9m19 0h2m231 0h8m5 0h3m6 0h2m24 0h2m6 0h3m28 0h7m-725 1h4m126 0h12m93 0h3m162 0h2m219 0h10m16 0h2m2 0h2m28 0h2m31 0h4m7 0h10m-737 1h2m168 0h7m44 0h13m6 0h2m162 0h2m214 0h3m28 0h2m-657 1h4m242 0h4m35 0h2m123 0h2m140 0h3m-560 1h5m250 0h4m33 0h3m32 0h13m77 0h12m123 0h5m3 0h2m-564 1h2m131 0h11m10 0h12m95 0h2m34 0h4m162 0h19m67 0h5m-291 1h3m35 0h5m240 0h3m16 0h2m-301 1h2m38 0h3m-41 1h4m37 0h4m-294 1h15m238 0h4m37 0h17m468 0h2m-524 1h2m298 0h2m-485 1h5m32 0h4m144 0h2m98 0h14m300 0h3m-530 1h17m98 0h2m290 0h3m114 0h3m-644 1h13m114 0h2m105 0h2m292 1h2m31 0h2m75 0h2m80 0h2m-307 1h16m128 0h2m2 0h3m152 0h2m25 0h2m-255 1h3m36 0h2m33 0h5m59 0h7m77 0h4m5 0h2m-243 1h10m41 0h2m36 0h3m136 0h4m-635 1h4m45 0h17m314 0h11m7 0h5m53 0h2m171 0h2m-631 1h3m387 0h8m149 0h2m23 0h2m51 0h4m-626 1h2m68 0h11m20 0h16m502 0h3m24 0h2m-76 1h15m-621 1h2m17 0h13m5 0h2m31 0h2m24 0h9m277 0h10m229 0h3m-672 1h3m46 0h19m19 0h2m463 0h2m178 0h2m-731 1h2m226 0h5m437 0h2m-690 1h16m4 0h3m82 0h2m67 0h16m54 0h2m391 0h2m-616 1h5m214 0h2m72 0h17m225 0h2m3 0h2m70 0h2m-609 1h4m181 0h8m19 0h2m389 0h4m-603 1h2m22 0h2m51 0h2m127 0h2m147 0h15m224 0h5m-597 1h3m74 0h2m76 0h10m36 0h3m163 0h13m40 0h9m21 0h16m120 0h6m-589 1h2m192 0h4m380 0h5m78 0h4m-663 1h2m73 0h2m113 0h2m182 0h18m180 0h4m79 0h4m4 0h3m5 0h4m-673 1h2m8 0h2m174 0h2m80 0h8m15 0h14m246 0h20m93 0h5m-743 1h5m71 0h4m70 0h2m101 0h7m-226 1h7m39 0h3m69 0h2m2 0h2m-4 1h3m255 0h11m-308 1h4m285 0h8m76 0h20m48 0h13m24 0h2m-404 1h2m87 0h11m100 0h4m7 0h2m267 0h12m100 0h12m-461 1h9m43 0h5m4 0h3m2 0h2m344 0h11m-375 1h4m12 0h2m-396 1h7m309 0h9m50 0h3m238 0h6m-309 1h3m50 0h15m-70 1h2m11 0h7m204 0h18m237 0h6m-766 1h8m602 0h12m120 0h2m-444 1h5m118 0h7m129 0h11m-594 1h25m213 0h6m493 0h10m-535 1h12m453 0h19m-396 1h2m274 0h8m90 0h3m84 0h2m-466 1h3m365 0h9m-379 1h2m225 0h8m28 0h19m169 0h14m-489 1h10m-135 1h36m411 0h12m90 0h11m-506 1h13m250 0h16m-256 1h12m45 0h12m202 1h8m-90 1h3m230 0h11m-409 1h11m156 0h24m267 0h2m-639 1h4m162 0h13m11 0h11m184 0h2m62 0h11m76 0h7m-431 1h21m68 0h3m81 0h8m90 0h2m2 0h2m198 0h11m93 0h5m-668 1h15m338 0h2m6 0h4m-319 1h7m288 0h12m12 0h10m36 0h11m-286 1h3m365 0h6m32 0h2m-233 1h8m313 0h10m-655 1h14m21 0h25m181 0h15m162 0h7m-217 1h12m-272 1h9m70 0h9m255 0h13m-348 1h10m289 0h16m141 0h13m-460 1h11m128 0h2m281 0h7m50 0h9m69 0h12m88 0h15m-662 1h11m158 0h6m530 0h2m-368 1h11m-340 1h16m186 0h2m173 0h4m145 0h7m28 0h2m88 0h10m-413 1h9m160 1h11m120 0h12m-240 1h10m154 0h17m-542 1h7m312 1h10m118 0h12m57 0h10m225 0h12m-673 1h2m69 0h2m186 0h11m313 0h12m-523 1h22m175 0h3m18 0h9m119 0h9m219 0h16m-569 1h18m340 0h8m-429 1h5m213 0h12m207 0h15m152 0h13m-694 1h13m354 0h9m293 0h13m-25 1h13m-718 1h6m240 0h11m76 0h11m261 0h6m28 0h9m-488 1h8m383 0h12m84 0h12m-49 1h20m-399 1h16m29 0h19m98 0h9m256 0h21m-706 1h4m115 0h4m131 0h2m-259 1h3m4 0h2m250 0h3m210 0h11m288 0h3m-765 1h4m141 0h11m93 0h4m221 0h2m-486 1h2m12 0h10m167 0h8m287 0h2m28 0h5m86 0h6m47 0h11m-647 1h5m258 0h11m141 0h21m-431 1h3m498 0h20m83 0h9m-412 1h3m128 0h4m125 0h2m-401 1h21m53 0h27m240 0h8m19 0h15m-156 1h19m244 0h2m-89 1h2m53 0h6m211 0h9m-664 1h20m389 0h11m-234 1h11m-110 1h8m292 0h2m-469 1h10m105 0h10m456 0h11m45 0h2m-564 1h6m143 0h5m87 0h19m135 0h2m119 0h12m-504 1h8m198 0h12m89 0h3m63 0h2m222 0h11m36 0h20m-56 1h2m-407 1h4m62 0h2m339 0h2m-341 1h3m103 0h2m70 0h3m160 0h2m-607 1h10m62 0h10m11 0h9m165 0h5m145 0h6m-353 1h2m10 0h11m179 0h10m-214 1h2m212 0h2m90 0h2m87 0h13m89 0h4m40 0h2m45 0h6m-731 1h10m216 0h4m123 0h5m87 0h4m189 0h2m-642 1h2m34 0h5m258 0h9m52 0h12m264 0h2m4 0h2m-646 1h2m328 0h2m272 0h6m36 0h2m38 0h2m-690 1h2m174 0h8m466 0h2m-654 1h2m587 0h20m45 0h4m-666 1h8m185 0h11m74 0h4m384 0h10m26 0h2m-707 1h3m507 0h21m115 0h3m58 0h2m-711 1h2m88 0h3m440 0h2m91 0h6m12 0h4m63 0h9m-722 1h2m208 0h22m157 0h10m58 0h12m126 0h10m-610 1h5m399 0h4m135 0h18m-430 1h5m197 0h4m71 0h3m-74 1h5m69 0h4m61 0h11m-237 1h13m79 0h3m70 0h4m68 0h6m154 0h2m-304 1h3m71 0h2m4 0h5m63 0h12m93 0h6m41 0h2m-610 1h17m291 0h3m73 0h4m5 0h2m73 0h5m127 0h15m-416 1h15m181 0h2m76 0h14m36 0h17m-384 1h13m244 0h13m216 0h4m-96 1h12m112 0h9m-629 1h21m205 0h17m-346 1h14m55 0h13m680 0h9m-798 1h8m14 0h5m60 0h10m330 0h9m-416 1h2m364 0h12m217 0h12m131 0h13m9 0h10m-773 1h3m144 0h45m92 0h26m193 0h3m-508 1h2m725 0h9m19 0h11m-774 1h8m457 0h18m-382 1h12m262 0h3m167 0h2m-271 2h3m40 0h4m-180 1h21m155 0h12m59 0h23m-380 1h5m169 0h19m244 1h2m242 0h7m-609 1h12m206 0h12m126 0h2m233 0h12m-303 1h9m44 0h3m-5 1h2m-466 1h2m340 0h9m110 0h3m10 0h4m158 0h6m79 0h16m-535 1h7m199 0h6m45 0h2m17 0h4m-166 1h6m134 0h3m23 0h2m63 0h2m135 0h21m-251 1h2m28 0h4m-37 1h3m34 0h4m149 0h14m-512 1h6m125 0h4m143 0h9m19 0h2m41 0h2m-456 1h18m14 0h12m31 0h2m92 0h9m231 0h2m45 0h3m-52 1h2m50 0h2m134 0h9m-199 1h2m54 0h4m-62 1h2m60 0h4m6 0h11m34 0h21m111 0h3m-696 1h4m438 0h2m66 0h2m-454 1h13m96 0h13m131 0h9m57 0h3m52 0h10m70 0h5m34 0h11m-185 1h2m97 0h2m103 0h16m60 0h5m-418 1h12m123 0h2m247 1h9m-528 1h21m125 0h21m90 0h12m4 0h2m-357 1h19m27 0h10m57 0h7m237 0h2m304 0h10m-630 1h4m201 0h3m248 0h20m142 0h2m-285 1h7m133 0h2m41 0h25m-531 1h11m86 0h10m29 0h17m40 0h43m32 0h17m21 0h2m155 0h2m220 0h2m-769 1h8m180 0h9m415 0h19m26 0h10m17 0h2m83 0h2m-642 1h12m368 0h5m152 0h18m15 0h10m37 0h22m20 0h7m-113 1h3m-292 1h2m340 0h12m-351 2h2m78 0h9m241 0h10m-718 1h10m64 0h18m123 0h12m153 0h2m335 0h4m37 0h2m-378 1h6m372 0h2m-199 1h8m191 0h9m-438 1h6m-161 1h3m285 1h9m215 0h19m-273 1h23m27 0h6m-236 1h3m158 1h10m185 0h10m-195 1h2m-440 1h13m427 0h2m43 0h9m45 0h19m-545 1h2m0 1h3m79 0h4m236 0h18m88 0h2m-427 1h2m113 0h26m214 0h30m42 0h3m323 0h4m-755 1h3m509 0h8m92 0h19m-628 1h2m158 0h20m107 0h7m-292 1h2m466 0h5m-182 1h11m27 0h20m46 0h9m-103 1h12m393 0h5m-607 1h5m-136 1h11m21 0h3m460 0h2m-462 1h4m202 0h29m134 0h19m73 0h11m167 0h18m-653 1h2m6 0h22m90 0h9m58 0h16m264 0h21m32 0h18m60 0h8m-604 1h2m49 0h11m101 0h19m86 0h10m207 0h9m-433 1h20m569 0h11m64 0h8m-325 1h6m143 0h21m-574 1h3m73 0h11m90 0h2m444 0h7m-453 1h2m420 0h25m68 0h4m-254 1h10m204 0h7m32 0h27m-428 2h3m229 0h6m13 0h9m174 0h13m-619 1h19m81 1h18m7 0h18m358 0h3m-449 1h7m-236 1h8m219 0h2m-154 1h8m142 0h2m484 0h3m78 0h5m-659 1h4m149 0h9m158 0h37m-273 1h2m342 0h13m-582 1h4m219 0h2m504 0h22m-741 1h19m394 0h9m196 0h20m-380 1h10m308 0h15m-382 1h2m-136 1h18m248 0h4m361 0h14m-636 1h2m584 0h3m-269 1h10m7 0h18m191 0h12"/><path transform="translate(0.5,0)" d="M0 0m0 311v2m0 73v10m0 82v38m0 135v1m0 13v5m1 -357v1m0 82v4m0 1v6m0 69v1m0 172v2m0 19v3m1 -657v1m0 186v8m0 21v9m0 73v1m0 45v2m0 1v7m0 56v18m0 204v1m0 24v1m0 1v1m0 1v38m1 -662v25m0 237v1m0 331v1m0 142v3m1 -506v12m0 17v1m0 138v9m0 84v1m0 72v6m0 18v2m1 -330v4m0 323v1m0 95v9m1 -428v4m0 18v16m0 283v2m1 -369v11m0 39v2m0 313v2m1 -315v2m0 310v1m0 90v9m1 -571v2m0 159v1m0 4v8m0 175v5m0 115v2m0 77v3m0 1v9m1 -565v4m0 66v7m0 1v17m0 71v1m0 114v9m0 174v4m0 1v4m0 139v13m0 1v4m1 -633v3m0 96v2m0 69v1m0 191v24m0 1v14m1 -531v21m0 107v2m0 171v1m0 68v1m0 348v15m1 -607v1m0 104v11m0 202v3m1 -461v6m0 127v7m0 14v6m0 25v1m1 -54v1m0 53v2m1 -205v16m0 132v1m0 56v3m1 -184v4m0 119v1m0 60v2m0 15v7m1 -175v1m0 81v8m0 46v8m0 9v1m0 231v1m0 1v1m1 -308v2m0 72v2m0 349v6m0 10v8m0 1v8m1 -460v2m0 76v2m0 550v9m1 -715v1m0 73v2m0 43v4m0 1v9m0 23v2m0 45v1m1 -203v1m0 35v21m0 15v1m0 84v2m0 172v10m0 1v6m0 25v8m1 -380v1m0 157v3m0 347v8m0 178v9m1 -646v11m0 93v2m0 138v6m0 111v2m2 -417v25m0 320v5m0 1v17m0 133v3m1 -478v5m1 699v5m1 -543v7m0 1v8m1 247v2m1 -106v1m1 -235v1m0 139v10m0 1v8m0 329v8m0 1v7m0 60v9m1 -254v18m0 78v15m1 -311v1m0 320v8m0 1v1m1 -334v2m0 2v2m0 57v8m0 1v10m1 -84v2m0 6v2m0 177v3m0 69v10m0 1v3m1 -276v3m0 10v2m0 354v7m1 -610v5m0 184v8m0 34v3m0 15v1m0 138v8m0 65v12m1 -401v7m0 150v2m0 19v1m0 71v10m0 96v4m0 1v8m0 44v10m0 218v1m1 -487v2m0 22v1m0 165v10m0 127v8m0 152v1m1 -659v15m0 154v2m0 25v1m0 319v21m0 35v17m0 70v1m1 -501v9m0 30v8m0 32v7m0 345v9m0 1v9m1 -724v29m0 1v1m0 502v10m0 110v8m1 -205v19m1 -317v23m1 -42v6m0 1v11m0 26v10m0 532v10m1 -703v13m1 297v8m0 1v1m0 218v3m0 28v9m0 1v1m1 -566v12m0 386v10m1 -395v3m0 319v11m0 344v9m0 52v3m1 -717v9m0 702v3m1 -570v2m0 563v2m1 -721v9m0 140v5m0 53v3m0 496v1m0 10v2m1 -575v5m0 558v1m0 7v2m1 -790v1m0 62v9m0 21v11m0 108v5m0 216v10m0 343v2m1 -609v3m0 24v6m0 194v12m0 366v2m1 -756v1m0 163v9m0 1v2m0 143v1m0 428v3m0 1v2m1 -554v16m0 173v2m0 1v10m1 -39v12m1 -306v5m0 1v1m0 2v6m0 341v6m0 122v17m1 -212v4m1 -284v1m1 0v1m0 159v10m0 36v2m0 419v4m1 -630v1m0 206v2m1 -208v1m0 146v10m0 51v1m0 254v8m0 1v2m1 -473v1m0 58v7m0 142v2m0 235v16m1 -549v5m0 84v2m0 27v2m0 178v2m1 -209v2m0 176v21m0 10v2m0 96v1m0 100v8m1 -438v5m0 19v2m0 161v12m0 34v2m0 14v6m1 -229v1m0 127v10m0 71v1m0 365v1m0 80v2m1 -657v1m0 208v2m0 18v8m0 136v2m0 1v8m0 28v15m0 145v2m0 76v5m1 -654v1m0 209v2m0 44v10m0 75v9m0 17v5m0 196v3m0 73v5m1 -436v7m0 118v2m0 22v5m0 199v2m0 70v6m1 -763v1m0 1v10m0 444v1m0 21v3m0 202v2m0 67v5m1 -744v8m0 129v18m0 196v10m0 81v1m0 21v1m0 68v8m0 127v2m0 56v5m0 1v7m1 -730v5m0 120v3m0 303v2m0 20v2m0 26v7m0 168v3m1 -681v1m0 38v21m0 80v7m0 209v7m0 59v1m0 28v2m0 19v3m0 109v1m0 91v2m1 -679v1m0 84v6m0 33v1m0 14v1m0 310v2m0 19v2m0 171v10m0 1v1m0 18v3m0 18v13m0 27v9m0 33v12m1 -790v1m0 125v2m0 11v1m0 309v2m0 222v2m1 -547v2m0 8v1m0 309v1m0 209v9m0 3v3m1 -543v1m0 6v1m0 308v2m0 174v22m0 24v2m1 -539v1m0 4v1m0 255v1m0 52v1m0 67v9m1 -492v10m0 92v1m0 2v1m0 308v1m0 175v1m1 -558v6m0 1v6m0 58v1m0 307v2m1 -368v2m0 161v5m0 1v11m0 185v1m0 349v6m1 -719v2m0 91v11m0 258v1m0 177v1m0 179v2m1 -720v3m0 338v4m0 1v1m0 11v2m0 108v4m0 65v1m0 128v2m1 -681v1m0 15v2m0 1v3m0 347v2m0 72v1m0 75v1m0 29v1m1 -551v1m0 70v1m0 290v7m0 74v1m0 74v2m0 130v19m1 -597v1m0 369v1m0 74v1m1 -445v2m0 222v2m0 26v5m0 19v5m0 95v1m0 65v2m0 31v1m1 -474v1m0 95v1m0 19v11m0 248v2m0 61v2m0 32v1m0 54v12m1 -555v8m0 9v1m0 92v2m0 161v7m0 101v1m0 11v1m0 59v1m0 9v10m0 14v1m0 38v6m1 -594v1m0 26v3m0 110v1m0 28v3m0 270v1m0 13v1m0 56v2m0 33v1m0 98v5m1 -653v1m0 130v8m0 3v2m0 23v3m0 174v8m0 106v2m0 53v1m0 34v1m1 -590v8m0 32v1m0 114v6m0 1v9m0 14v1m0 14v8m0 293v1m0 51v1m0 224v1m1 -740v1m0 146v2m0 10v2m0 302v1m0 75v10m0 140v6m1 -610v1m0 63v2m0 3v5m0 109v11m0 97v10m0 78v1m0 25v2m0 1v13m1 -472v10m0 42v1m0 65v2m0 55v11m0 104v6m0 112v1m0 69v1m1 -426v1m0 353v1m0 68v2m1 -467v9m0 34v1m0 167v6m0 18v11m0 149v1m0 25v1m0 41v2m1 -455v3m0 1v5m0 25v1m0 131v12m0 6v6m0 5v6m0 6v5m0 172v1m0 67v1m0 211v18m1 -767v4m0 260v1m0 1v3m0 6v5m0 42v10m0 136v1m0 198v17m1 -678v21m1 182v1m1 -229v9m0 257v3m0 167v11m0 189v3m1 -650v1m0 151v1m0 15v7m0 359v15m0 139v8m1 -610v7m0 380v9m0 13v1m0 34v1m1 -72v12m0 60v1m0 224v11m1 -235v1m0 182v5m1 -718v8m0 318v1m0 154v9m1 -432v1m0 94v1m0 207v4m0 314v2m0 1v3m0 81v10m1 -717v1m0 94v1m0 337v4m1 -436v1m0 56v2m0 36v1m0 587v10m1 -692v1m0 232v2m0 313v12m1 -474v9m0 1v6m0 200v1m0 3v12m0 1v1m0 53v10m1 -364v3m0 81v1m0 1v8m0 187v2m1 -124v3m0 117v2m0 261v22m1 -644v3m0 355v1m1 -222v9m0 499v5m1 -270v3m0 79v7m0 250v5m0 1v8m1 -677v8m0 206v4m0 460v8m2 -677v14m0 319v6m0 6v2m0 1v6m0 150v1m0 102v9m1 -573v11m0 8v9m0 71v1m0 145v2m0 39v4m0 6v6m0 87v8m0 65v2m1 -492v1m0 124v2m0 144v2m0 38v3m0 178v1m1 -574v4m0 45v7m0 148v2m0 92v2m0 50v2m0 31v1m0 1v7m0 182v2m0 30v2m0 55v9m1 -667v18m0 153v7m0 19v2m0 145v1m0 157v8m0 61v2m0 72v1m0 1v10m1 -541v6m0 73v2m0 119v7m0 1v13m0 5v2m0 72v6m0 151v3m1 -557v9m0 44v5m0 1v6m0 108v3m0 10v7m0 38v15m0 76v1m0 147v1m0 67v7m0 12v3m0 14v6m1 -409v2m0 42v4m0 1v10m0 91v1m0 170v8m0 5v2m0 53v3m0 96v4m0 92v1m1 -682v10m0 85v2m0 336v5m0 51v3m0 17v1m0 105v12m1 -541v8m0 344v5m0 49v1m0 1v5m1 -507v7m0 246v1m0 181v3m0 13v5m0 198v5m1 -321v1m0 1v4m0 57v1m0 54v5m1 -333v14m0 194v1m0 63v1m0 60v2m0 1v7m1 49v1m1 -577v5m0 1v8m0 50v3m0 200v1m0 386v3m0 1v9m1 -277v1m0 63v1m1 -66v1m0 63v1m0 124v1m0 89v10m1 -479v5m0 65v7m0 1v9m0 102v1m0 7v9m0 174v1m0 160v6m0 1v9m1 -369v1m1 -2v1m0 167v3m1 -358v5m0 44v20m0 489v8m1 -569v2m0 240v13m0 1v5m0 254v4m0 1v7m0 11v5m1 -545v2m0 188v1m0 40v3m0 1v8m0 145v1m0 140v3m1 -533v1m0 189v1m0 268v5m0 69v3m1 -615v11m0 67v1m0 42v2m0 1v5m0 139v1m0 23v8m0 1v7m0 1v1m0 305v3m1 -736v9m0 186v1m0 52v3m0 100v1m0 1v9m0 23v1m0 140v1m0 61v1m0 147v1m1 -695v4m0 148v1m0 154v2m0 33v1m1 -192v1m0 153v2m0 34v1m0 320v10m1 -523v2m0 153v1m0 181v1m0 88v2m0 64v9m1 -723v2m0 218v2m0 153v2m1 -158v1m0 153v2m0 37v1m0 161v14m0 1v3m1 -581v19m0 11v4m0 172v2m0 66v1m0 64v16m0 5v2m0 21v9m0 8v1m0 81v7m1 -284v1m0 152v2m0 252v15m0 38v10m0 38v10m1 -573v18m0 36v1m0 151v2m0 279v18m1 -663v7m0 126v12m0 45v9m0 11v2m0 72v1m0 121v1m0 48v4m0 158v1m0 18v8m1 -456v1m0 10v6m0 3v2m0 75v1m0 54v6m0 59v1m0 153v11m0 46v1m1 -560v12m0 1v2m0 115v1m0 17v2m0 79v2m0 327v1m1 -487v1m0 1v1m0 54v1m0 427v1m0 49v8m1 -629v4m0 1v8m0 70v3m0 56v1m0 212v2m0 1v3m0 1v7m0 96v10m0 95v1m1 -514v2m0 22v2m0 57v2m0 426v2m1 -518v4m0 23v2m0 57v2m0 426v2m1 -519v3m0 25v2m0 55v4m0 144v14m0 251v6m0 11v2m1 -520v3m0 26v2m0 61v1m0 56v16m0 51v9m0 1v9m0 114v1m0 59v9m0 166v4m0 38v5m1 -633v2m0 26v3m0 136v2m0 240v1m1 -413v3m0 16v9m0 1v2m0 59v1m0 81v1m0 1v8m0 24v1m0 204v1m0 23v16m0 70v1m1 -598v3m0 71v2m0 88v2m0 9v1m0 109v11m0 60v1m0 95v11m0 23v1m0 109v1m0 161v8m1 -694v2m0 49v7m0 32v2m0 430v2m0 160v1m1 -692v6m0 89v2m0 117v4m0 103v3m0 155v6m0 43v1m0 160v2m1 -597v1m0 432v1m0 102v11m0 7v16m0 24v1m1 -163v1m0 160v1m1 -163v1m0 159v2m1 -347v8m0 336v1m1 -268v1m0 45v3m0 21v7m0 31v4m0 76v24m0 54v1m1 -593v1m0 324v1m0 50v3m0 1v7m0 203v2m0 19v8m1 -620v1m0 324v1m0 264v1m1 -714v1m0 1v7m0 90v13m0 10v1m0 589v1m1 -715v2m0 121v1m0 96v6m0 486v2m1 -748v7m0 1v1m0 23v2m0 122v1m0 54v1m0 174v3m0 194v9m0 153v1m1 -737v3m0 19v1m0 122v2m0 67v10m0 185v9m0 41v13m0 83v8m0 172v1m1 -733v5m0 13v1m0 122v1m0 588v2m1 -727v5m0 7v1m0 122v1m0 60v1m0 520v7m1 -719v2m0 4v1m0 122v1m0 295v20m0 56v8m0 249v13m1 -800v6m0 25v1m0 2v1m1 -2v1m0 293v3m0 1v8m0 241v9m1 -483v9m0 41v1m0 182v5m1 -228v1m0 227v11m0 192v3m1 -433v2m0 35v1m0 1v1m0 65v3m0 130v6m0 9v22m0 34v8m0 1v8m0 196v6m1 -645v1m0 118v1m0 33v1m0 3v1m0 61v2m0 4v4m0 132v7m0 257v13m1 -518v1m0 31v1m0 5v1m0 37v3m0 18v2m0 11v2m0 36v5m0 1v10m0 322v3m0 1v14m0 47v5m0 1v3m1 -529v1m0 7v1m0 34v1m0 4v4m0 12v2m0 15v2m0 255v2m1 -438v8m0 88v2m0 9v1m0 42v3m0 5v2m0 1v1m0 19v1m0 50v4m0 128v8m1 -303v1m0 24v2m0 12v1m0 44v5m0 310v8m0 242v15m1 -663v1m0 22v1m0 15v1m0 29v1m0 200v6m0 45v3m0 1v5m1 -372v7m0 57v1m0 17v1m0 27v1m0 73v8m0 305v1m0 67v8m1 -511v2m0 20v8m0 16v2m0 216v9m0 239v8m1 -538v1m0 16v1m0 30v6m0 6v3m0 49v1m0 427v5m0 7v8m1 -683v3m0 68v3m0 1v3m0 9v8m0 1v7m0 21v1m0 14v1m0 37v6m0 53v1m0 74v13m0 282v1m1 -547v7m0 1v3m0 54v1m0 12v1m0 98v1m0 249v2m0 1v2m0 57v3m0 196v9m1 -631v2m0 8v2m0 100v1m0 14v9m0 25v1m0 1v21m0 88v6m0 342v1m1 -651v1m0 31v1m0 3v4m0 103v1m0 253v8m0 244v1m0 12v10m1 -639v3m0 108v1m0 261v13m0 1v2m0 182v6m0 6v3m0 29v1m1 -617v1m0 112v1m0 453v5m0 6v6m0 31v1m1 -502v1m0 441v8m0 1v2m0 47v1m1 -499v8m0 194v2m0 158v4m0 131v1m1 -616v1m0 447v1m0 1v6m0 158v1m1 -679v5m0 58v1m0 356v4m0 253v1m1 -665v2m0 47v1m0 458v22m0 33v5m0 73v12m0 10v1m1 -616v1m0 202v1m0 226v20m0 164v1m1 -715v6m0 1v11m0 286v2m0 187v5m0 215v1m1 -408v5m0 401v1m1 -402v5m0 244v1m0 150v1m0 34v7m1 -437v3m0 202v7m0 178v4m1 -391v2m0 132v5m0 58v5m0 179v5m0 69v1m1 -797v2m0 1v11m0 27v12m0 1v6m0 283v2m0 188v5m0 257v1m1 -781v6m0 97v1m0 226v4m0 8v5m0 161v10m0 261v1m1 -446v4m0 168v2m1 -446v2m1 37v1m0 203v4m0 28v1m0 2v1m0 436v1m1 -678v1m0 332v26m0 136v3m0 1v16m0 1v5m0 155v1m1 -794v1m0 115v1m0 49v2m0 6v5m0 6v2m0 548v12m1 -748v1m0 108v3m0 4v1m0 48v1m0 3v6m0 5v6m0 3v2m0 175v19m0 62v1m1 -341v1m0 4v4m0 75v1m0 14v3m0 75v3m0 158v2m1 -342v2m0 9v1m0 76v2m0 6v5m0 4v2m0 30v2m0 4v11m0 137v8m0 1v6m0 32v2m1 -341v1m0 57v1m0 32v6m0 11v1m0 24v5m0 5v1m0 11v6m0 5v13m0 159v1m0 111v3m0 234v1m1 -692v4m0 46v4m0 4v4m0 51v1m0 17v6m0 28v5m0 116v9m0 46v1m1 -346v4m0 18v1m0 30v1m0 4v4m0 56v2m0 4v11m0 208v2m1 -357v2m0 9v1m0 23v1m0 28v1m0 68v3m0 163v2m0 53v1m1 -353v2m0 5v2m0 25v1m0 26v1m0 140v20m0 8v6m0 29v3m0 83v1m0 170v8m0 50v13m1 -610v4m0 6v3m0 6v2m0 2v1m0 28v1m0 24v1m0 440v2m0 190v2m0 2v5m1 -721v2m0 4v6m0 11v1m0 31v1m0 22v1m0 488v6m0 40v12m1 -629v4m0 77v1m0 567v12m0 56v1m1 -720v2m0 80v1m0 634v2m1 -741v5m0 6v6m0 86v1m0 333v1m0 1v14m1 -459v6m0 5v6m0 6v3m0 82v1m0 270v6m0 1v15m0 222v9m1 -634v2m0 107v1m0 168v6m0 8v14m0 419v21m0 12v11m1 -674v2m0 430v5m0 130v5m0 51v6m1 -627v5m0 146v4m0 307v17m1 -474v3m0 2v1m0 199v12m0 1v5m0 157v7m1 -384v1m0 384v8m0 120v6m1 1v1m1 -535v1m0 425v9m0 22v7m0 1v2m0 52v3m0 1v3m0 9v2m0 53v2m1 -694v7m0 93v2m0 537v1m0 54v2m1 -701v5m0 39v1m0 1v2m0 55v2m0 488v6m0 46v1m0 38v1m0 1v10m0 5v1m1 -704v2m0 42v2m0 4v1m0 53v1m0 55v15m0 252v1m0 52v11m0 1v7m0 149v1m0 55v2m1 -715v1m0 4v4m0 43v1m0 7v1m0 106v2m0 16v1m0 374v5m0 1v8m0 55v11m0 18v1m0 56v3m1 -721v3m0 3v2m0 46v1m0 474v6m0 1v10m0 116v1m0 58v2m0 19v12m1 -755v1m0 53v1m0 60v1m0 548v1m0 59v2m1 -696v1m0 21v2m0 12v1m0 47v1m0 53v1m0 22v1m0 56v10m0 407v1m0 60v1m1 -696v3m0 17v1m0 15v1m0 74v1m0 24v1m0 24v1m0 47v7m0 22v9m0 102v2m0 284v1m0 60v2m1 -695v2m0 14v1m0 17v1m0 124v1m0 85v2m0 54v2m0 278v5m0 1v11m0 35v1m0 61v1m1 -694v1m0 12v1m0 19v1m0 20v2m0 189v1m0 25v9m0 352v1m0 61v2m1 -695v2m0 31v1m0 13v6m0 3v2m0 49v1m0 20v1m0 116v2m0 158v2m0 1v3m0 221v1m0 62v2m1 -695v1m0 32v12m0 11v1m0 15v1m0 33v1m0 18v1m0 30v1m0 63v9m0 16v1m0 72v5m0 86v6m0 51v1m0 164v1m0 17v12m0 1v2m0 31v2m1 -696v3m0 4v1m0 48v1m0 13v1m0 85v1m0 257v13m0 204v1m0 64v2m1 -695v3m0 51v1m0 11v1m0 188v8m0 161v2m0 1v5m0 197v1m0 65v1m1 -641v1m0 9v1m0 115v15m0 500v2m1 -642v1m0 7v1m0 40v3m0 58v2m0 1v1m0 463v11m0 54v1m0 1v1m1 -644v1m0 45v1m0 4v11m0 41v6m0 4v2m1 -70v1m0 16v1m0 36v4m0 12v2m0 115v2m1 -190v1m0 18v2m0 33v1m0 18v2m0 70v8m0 75v5m0 29v2m0 265v1m1 -572v1m0 40v1m0 21v1m0 53v2m0 142v2m0 2v5m0 8v1m0 1v4m0 10v10m1 -302v1m0 61v1m0 54v2m0 163v10m0 105v5m0 1v9m1 -509v1m0 1v1m0 95v2m0 87v2m0 168v1m1 -360v2m0 3v2m0 95v2m0 80v5m0 276v5m1 -472v2m0 7v3m0 94v1m0 58v1m0 14v6m0 607v4m1 -798v1m0 12v2m0 93v2m0 66v5m0 179v1m1 -362v1m0 15v4m0 91v9m0 52v5m0 183v1m0 155v18m1 -535v1m0 20v2m0 98v2m0 16v1m0 31v2m0 144v11m0 1v2m0 28v2m1 -336v2m0 96v2m0 11v3m0 2v1m0 216v1m0 173v3m1 -508v2m0 96v1m0 7v3m0 221v1m1 -329v3m0 94v2m0 2v3m0 222v2m0 52v12m0 115v25m1 -529v9m0 9v7m0 72v1m0 224v1m1 -314v2m0 4v2m0 8v7m0 289v1m1 -311v2m0 1v1m0 18v1m0 29v2m0 232v16m0 6v2m0 123v9m0 77v3m0 139v6m0 78v7m1 -729v1m0 24v4m0 254v2m0 319v2m1 -583v2m0 257v1m0 81v7m0 1v3m0 322v13m0 1v10m1 -703v5m0 258v1m0 138v9m0 1v4m0 112v12m0 34v11m0 76v1m0 1v1m1 -680v1m0 10v5m0 262v1m0 291v7m0 1v11m0 92v13m1 -693v1m0 5v4m0 67v1m0 588v11m1 -676v1m0 2v2m0 394v6m0 91v4m0 31v10m1 -539v1m0 365v11m0 150v1m1 -173v2m0 169v1m0 124v11m1 -728v8m0 154v1m0 1v2m0 60v12m0 353v1m1 -594v2m0 8v2m0 150v2m0 4v2m0 57v1m0 13v12m0 50v9m0 280v1m0 114v11m1 -722v4m0 12v1m0 148v1m0 8v1m0 55v1m0 364v1m0 74v7m1 -515v3m0 10v1m0 107v4m0 1v8m0 268v6m0 1v2m0 21v1m1 -437v4m0 14v1m0 95v11m0 99v8m0 60v12m0 1v5m0 28v7m0 70v5m0 14v2m0 31v12m0 1v2m1 -621v1m0 131v1m0 5v1m0 19v1m0 50v1m0 37v6m0 306v10m0 3v1m0 116v2m1 -555v2m0 21v1m0 13v2m0 31v2m0 31v3m0 1v4m0 145v9m0 168v2m1 -436v1m0 24v2m0 7v4m0 3v2m0 4v24m1 -203v1m0 10v5m0 143v2m0 2v3m0 9v1m0 1v2m0 328v2m0 257v3m1 -768v4m0 3v3m0 5v3m0 142v2m0 112v9m0 390v11m1 -680v3m0 12v1m0 28v1m0 51v1m0 224v9m1 -288v1m0 2v2m0 47v2m0 2v2m0 23v2m0 194v1m0 44v19m1 -366v2m0 21v2m0 5v2m0 42v3m0 6v2m0 20v1m0 528v6m0 1v10m1 -649v2m0 18v1m0 9v2m0 38v2m0 11v1m0 17v2m1 -101v6m0 24v2m0 34v2m0 14v2m0 14v1m0 33v1m0 163v1m0 13v10m0 95v6m0 35v10m1 -460v2m0 24v1m0 31v2m0 18v2m0 10v2m0 197v1m0 158v1m0 138v10m1 -595v1m0 24v2m0 26v3m0 22v2m0 6v2m0 11v2m0 185v1m0 158v1m0 137v1m0 148v3m0 1v8m1 -743v4m0 22v2m0 22v2m0 27v2m0 2v2m0 15v2m0 101v1m0 239v1m0 137v1m0 69v9m1 -656v2m0 22v2m0 17v3m0 31v1m0 20v1m0 137v7m0 65v10m0 258v1m1 -551v2m0 12v2m0 237v1m0 39v9m0 1v5m1 -380v4m0 70v1m0 9v2m0 414v10m0 1v2m0 1v27m1 -546v5m0 75v2m0 5v2m0 62v1m0 395v1m0 1v4m1 -555v2m0 82v2m0 1v2m0 65v1m0 173v3m0 1v1m0 105v16m0 211v11m1 -678v2m0 12v1m0 73v1m0 14v1m0 90v1m0 129v6m0 39v4m0 117v1m1 -492v1m0 15v1m0 42v1m0 259v6m0 164v2m1 -431v1m0 109v1m0 143v5m0 168v2m1 -464v5m0 31v1m0 105v3m0 132v12m0 108v4m0 39v7m0 13v2m0 141v1m0 18v20m1 -649v1m0 2v4m0 5v3m0 29v1m0 98v6m0 53v1m0 77v1m0 1v2m0 182v1m0 141v2m1 -608v1m0 13v2m0 19v1m0 7v1m0 22v1m0 130v3m0 2v1m0 30v1m0 229v1m0 141v1m1 -590v1m0 17v1m0 9v2m0 19v1m0 120v11m1 -165v2m0 12v1m0 107v2m0 26v4m0 386v2m0 142v7m1 -692v1m0 15v1m0 90v1m0 17v2m0 21v3m0 22v1m0 256v1m0 112v5m0 6v3m1 -558v1m0 32v1m0 94v2m0 18v1m0 26v1m0 247v6m0 1v1m0 118v6m0 3v2m1 -562v2m0 32v1m0 97v1m0 429v1m0 4v4m0 49v8m0 98v8m1 -735v1m0 133v1m0 104v11m0 1v4m0 309v4m0 4v2m1 -575v1m0 62v1m0 85v1m0 31v1m0 137v4m0 22v11m0 219v1m1 -577v1m0 24v1m0 39v2m0 43v1m0 72v1m0 515v21m1 -694v1m0 40v1m0 70v1m1 -112v1m0 111v1m0 8v1m0 233v5m0 1v7m0 287v8m1 -694v1m0 1v1m0 29v1m0 3v2m0 1v1m0 149v22m1 -178v3m0 4v2m0 254v1m0 316v13m1 -594v1m0 9v1m0 39v9m0 5v16m0 38v1m0 61v1m1 -182v1m0 45v5m0 10v2m0 1v1m0 16v1m0 279v8m0 182v1m0 89v4m0 49v1m0 1v5m1 -730v1m0 72v2m0 36v2m0 31v1m0 209v5m0 1v22m0 162v4m0 128v7m1 -685v1m0 2v2m0 68v1m0 41v1m0 28v2m0 1v2m0 65v1m0 173v2m1 -385v2m0 22v1m0 41v1m0 44v1m0 26v1m0 5v1m0 65v1m0 4v24m0 18v4m0 389v21m1 -717v2m0 46v1m0 18v3m0 40v2m0 46v1m0 22v3m0 7v1m0 65v1m0 95v11m1 -366v1m0 3v10m0 27v1m0 9v1m0 6v11m0 20v1m0 20v2m0 68v3m0 11v1m1 -196v1m0 14v2m0 23v2m0 11v1m0 2v3m0 32v2m0 16v2m0 69v1m0 15v1m0 427v3m0 1v1m0 20v7m0 33v9m1 -699v1m0 19v8m0 10v3m0 15v1m0 37v1m0 12v3m0 54v1m0 15v1m0 17v1m0 64v1m0 77v1m0 1v13m0 203v10m1 -570v1m0 28v8m0 1v1m0 57v1m0 9v2m0 58v1m0 13v1m0 48v1m0 325v4m1 -462v2m0 3v4m0 61v1m0 10v2m0 48v1m0 143v1m0 179v3m0 127v6m0 1v1m1 -590v2m0 74v2m0 48v2m0 145v1m0 22v5m0 147v4m0 80v18m1 -477v3m0 49v1m0 221v9m0 87v5m0 176v2m1 -557v1m0 1v2m0 51v1m0 257v1m0 2v12m0 44v2m1 -168v1m0 103v3m0 16v27m0 1v2m0 9v4m0 47v3m1 -287v8m0 1v10m0 15v3m0 35v1m0 93v9m0 53v5m0 83v5m1 -157v2m0 60v2m0 39v7m0 1v6m0 3v2m1 -448v1m0 61v1m0 252v9m0 1v1m0 122v1m1 -386v1m0 385v2m1 -387v1m0 4v10m0 103v10m0 259v2m1 -387v3m0 48v7m0 113v1m0 215v2m1 0v2m0 52v2m1 -317v1m0 262v1m0 14v5m0 149v5m0 1v11m1 -454v3m0 1v1m0 264v2m0 125v2m1 -672v1m0 1v3m0 16v1m0 126v1m0 396v2m0 182v11m1 -742v2m0 5v4m0 9v2m0 2v4m0 64v20m0 37v1m0 62v18m0 97v1m0 221v2m1 -606v1m0 53v1m0 11v2m0 5v2m0 8v4m0 58v2m0 56v1m0 402v2m1 -540v2m0 1v2m0 14v2m0 54v1m0 58v1m0 19v7m0 379v2m0 188v2m1 -761v1m0 49v2m0 2v2m0 1v1m0 45v1m0 243v5m0 1v3m0 177v6m0 32v1m0 119v18m1 -713v4m0 2v1m0 49v1m0 5v2m0 42v1m0 196v7m0 34v5m0 227v2m0 41v8m0 97v8m1 -735v3m0 7v1m0 56v2m0 21v9m0 9v1m0 29v1m0 221v2m0 34v2m0 25v11m1 -437v3m0 11v2m0 5v1m0 50v2m0 17v1m0 10v5m0 3v1m0 31v3m0 220v3m0 317v15m1 -703v3m0 16v1m0 2v2m0 53v2m0 14v1m0 16v2m0 36v8m0 215v4m1 -385v2m0 1v2m0 2v3m0 21v1m0 57v2m0 10v2m0 63v2m0 217v2m1 -395v8m0 6v1m0 84v2m0 7v1m0 67v2m0 100v11m0 1v5m0 100v3m0 343v9m1 -751v1m0 101v3m0 3v1m0 70v2m0 42v14m0 102v17m0 43v2m0 272v7m1 -682v2m0 105v2m0 74v2m0 218v2m0 236v7m1 -649v1m0 185v2m0 218v1m1 -408v1m0 188v6m0 213v2m0 201v5m0 44v6m0 1v9m1 -677v1m0 410v2m0 147v9m0 117v8m0 72v4m1 -357v2m1 -218v1m0 164v14m0 39v3m1 -420v1m0 199v2m0 218v2m1 -220v2m0 33v7m0 1v6m0 1v6m0 165v4m0 1v4m0 89v9m0 1v1m0 97v16m1 -113v2m0 211v3m1 -214v2m0 84v8m1 -580v1m0 146v1m0 340v1m1 -499v4m0 4v2m0 2v1m0 202v1m0 69v7m0 30v1m0 72v7m0 97v1m0 14v9m0 11v10m0 115v8m0 1v7m1 -677v2m0 4v4m0 160v1m0 152v1m0 60v1m0 117v2m0 127v2m1 -635v2m0 30v1m0 1v3m0 122v1m0 13v2m0 210v1m0 91v9m0 20v1m1 -512v5m0 18v1m0 11v2m0 5v4m0 117v1m0 16v2m0 207v1m0 122v4m0 1v5m1 -498v5m0 4v2m0 11v3m0 133v2m0 144v1m0 59v1m0 181v20m1 -567v1m0 5v3m0 17v5m0 130v1m0 142v1m0 59v1m1 -334v3m0 128v2m0 5v15m1 -149v1m0 23v2m0 21v10m0 16v2m0 54v1m1 -167v1m0 37v1m0 18v4m0 3v2m0 16v2m0 11v2m0 11v2m0 2v2m0 25v1m0 27v1m0 283v9m0 232v2m1 -655v1m0 15v2m0 9v2m0 12v2m0 15v1m0 7v3m0 6v2m0 22v1m0 29v1m0 222v9m0 133v4m1 -497v1m0 10v4m0 14v11m0 18v2m0 2v3m0 11v4m0 17v1m0 31v1m0 38v21m0 134v1m0 41v8m0 166v23m0 69v19m1 -649v1m0 5v4m0 50v1m0 18v3m0 13v1m0 136v8m0 81v1m0 356v3m0 1v6m1 -687v1m0 2v2m0 76v2m0 10v1m0 278v13m0 187v2m0 44v10m0 23v1m0 35v6m1 -780v2m0 40v1m0 43v1m0 2v1m0 80v2m0 114v6m0 1v3m0 31v9m0 151v4m0 1v3m0 1v6m0 278v5m1 -786v1m0 2v2m0 81v1m0 86v1m0 102v10m0 11v4m0 105v1m0 295v2m0 2v6m0 74v10m1 -798v2m0 5v2m0 78v1m0 88v2m0 125v3m0 101v1m0 294v2m1 -705v1m0 9v2m0 75v1m0 91v2m0 126v4m0 30v8m0 353v1m1 -704v1m0 12v3m0 71v1m0 224v1m0 1v8m0 156v13m0 94v2m0 1v10m0 104v1m0 43v1m1 -731v2m0 2v1m0 23v1m0 208v4m0 150v1m0 292v2m0 45v1m1 -730v1m0 3v2m0 382v1m0 41v2m0 249v1m1 -676v4m0 57v1m0 319v1m0 292v1m1 -671v5m0 51v1m0 664v1m1 -717v2m0 618v10m0 87v1m1 -716v7m0 141v1m0 1v1m0 165v2m0 50v1m0 292v1m0 54v1m1 -670v1m0 103v2m0 473v3m0 1v7m0 22v2m1 -615v1m0 106v1m0 483v11m0 9v2m0 23v6m1 -644v2m0 100v1m0 7v2m0 492v7m0 1v1m0 61v1m1 -676v1m0 101v1m0 10v2m0 122v1m0 230v1m0 1v7m1 -490v1m0 1v2m0 8v1m0 100v2m0 13v1m0 87v9m0 102v9m0 154v2m0 16v3m1 -515v4m0 4v4m0 2v2m0 68v2m0 47v2m0 156v1m0 1v13m0 21v3m0 10v2m0 43v1m0 110v10m0 4v2m0 3v2m1 -519v2m0 12v2m0 68v2m0 51v2m0 18v1m0 186v1m0 163v4m0 7v6m1 -526v1m0 16v1m0 63v4m0 55v1m0 15v2m0 152v9m0 27v1m0 352v11m1 -712v2m0 78v3m0 60v1m0 13v1m0 164v9m0 18v1m0 102v7m1 -460v1m0 78v2m0 64v2m0 10v1m0 5v9m0 179v1m0 250v3m1 -606v1m0 66v1m0 10v2m0 68v2m0 6v2m0 195v1m1 -355v1m0 65v2m0 2v1m0 6v2m0 19v1m0 52v3m0 2v1m0 198v4m1 -361v2m0 62v4m0 5v2m0 2v2m0 22v2m0 53v1m0 20v19m0 165v3m0 333v8m1 -706v1m0 58v6m0 12v1m0 26v1m0 260v1m0 125v2m1 -526v1m0 83v8m0 46v1m0 260v2m0 16v11m0 1v5m0 85v5m1 -527v3m0 2v1m0 136v1m0 15v1m0 75v4m0 1v5m0 88v5m0 67v1m0 107v4m0 4v2m1 -531v9m0 33v2m0 1v1m0 29v1m0 90v1m0 247v1m0 104v2m0 4v4m0 235v7m1 -776v5m0 40v2m0 52v1m0 320v2m0 94v6m0 1v1m1 -503v1m0 22v1m0 53v1m0 59v1m0 263v1m0 308v16m1 -704v1m0 8v1m0 106v11m0 144v5m0 1v12m0 92v9m0 217v6m0 1v7m1 -622v1m0 10v1m0 104v1m1 -118v1m0 12v1m0 41v1m0 60v1m1 -119v2m0 14v1m0 38v2m0 60v1m0 47v2m0 127v12m0 271v6m1 -598v1m0 12v2m0 52v3m0 2v1m0 105v2m0 55v16m0 317v23m0 109v3m0 1v2m1 -705v1m0 9v2m0 48v6m0 81v1m0 27v2m0 250v7m0 25v2m0 58v3m0 76v19m0 138v6m1 -753v2m0 22v1m0 25v1m0 89v2m0 23v2m0 146v4m0 136v2m0 289v3m0 6v8m0 1v4m1 -768v2m0 26v8m0 15v1m0 15v1m0 76v1m0 20v2m0 290v1m0 30v3m0 122v5m1 -622v4m0 36v14m0 18v1m0 76v1m0 17v2m0 293v1m0 175v7m1 -646v1m0 4v1m0 145v1m0 14v2m0 82v4m0 192v11m0 7v1m1 -459v2m0 144v1m0 12v1m0 115v6m0 108v2m0 68v1m1 -458v1m0 118v1m0 25v1m0 9v2m0 301v1m1 -469v1m0 10v1m0 144v1m0 6v2m0 87v10m0 207v1m0 222v11m0 1v6m1 -711v1m0 12v1m0 65v1m0 78v2m0 2v2m0 307v2m0 81v14m1 -569v1m0 14v1m0 65v1m0 47v1m0 32v1m0 196v2m0 113v1m0 298v4m1 -778v1m0 109v20m0 62v1m0 165v2m0 79v11m0 26v1m0 275v3m1 -647v2m0 84v3m0 69v9m0 55v4m0 23v1m0 119v2m0 3v15m0 1v4m0 150v7m1 -575v1m0 112v17m0 141v2m0 122v2m0 46v4m1 -533v1m0 86v1m0 128v2m0 137v2m0 321v6m1 -686v2m0 21v1m0 66v1m0 18v1m0 145v1m0 99v2m0 40v6m0 40v7m1 -467v1m0 13v3m0 24v1m0 111v1m0 117v1m0 25v9m0 64v2m0 181v11m0 140v11m0 20v5m1 -739v2m0 8v3m0 63v2m0 1v1m0 189v1m0 97v2m0 319v7m1 -693v2m0 3v3m0 9v1m0 54v2m0 4v2m0 26v1m0 159v1m0 96v2m0 16v10m1 -389v1m0 1v1m0 35v1m0 29v2m0 35v2m0 252v2m0 199v11m0 102v2m0 1v7m0 76v8m1 -728v1m0 27v1m0 36v1m0 2v3m0 5v3m0 240v1m0 91v2m1 -387v2m0 35v2m0 6v5m0 241v2m0 90v2m0 78v19m1 -483v1m0 36v1m0 50v2m0 79v2m0 68v7m0 136v2m1 -407v1m0 21v1m0 36v1m0 53v18m0 129v1m0 49v3m0 2v1m0 88v1m1 -404v1m0 7v2m0 9v2m0 36v1m0 72v3m0 269v1m0 49v3m0 239v2m1 -695v2m0 2v2m0 3v4m0 3v2m0 37v1m0 310v10m0 24v1m0 19v7m0 142v1m0 125v6m1 -699v2m0 9v1m0 1v1m0 21v1m0 16v1m0 201v1m0 339v3m0 21v9m0 72v5m1 -668v2m0 13v1m0 293v9m0 1v8m0 341v6m1 -735v1m0 62v1m0 10v2m0 157v7m0 75v15m0 405v3m1 -674v1m0 8v1m0 84v2m0 67v6m0 266v8m1 -435v1m0 87v2m0 54v11m0 193v1m1 -419v1m0 19v1m0 48v1m0 90v2m0 112v1m0 142v1m1 -417v3m0 34v1m0 25v2m0 2v1m0 30v1m0 62v1m0 110v1m0 141v2m1 -417v1m0 3v11m0 24v2m0 21v2m0 2v2m0 32v1m0 62v2m0 124v14m0 1v8m0 86v9m0 7v1m0 324v1m1 -725v3m0 23v1m0 19v1m0 39v1m0 51v1m0 11v1m0 75v1m0 171v1m0 35v7m0 8v7m0 160v9m1 -580v1m0 91v1m0 13v2m0 14v3m0 86v1m0 234v8m1 -516v1m0 59v2m0 90v2m0 16v2m0 9v2m0 4v6m0 79v1m0 321v12m1 -607v1m0 58v2m0 91v1m0 20v1m0 6v2m0 12v3m0 49v1m0 25v1m0 141v1m0 209v9m1 -575v1m0 92v1m0 22v2m0 2v2m0 17v2m0 48v1m0 23v1m0 101v7m0 33v1m0 324v6m0 1v11m1 -779v2m0 1v7m0 69v2m0 118v1m0 22v2m0 69v1m0 68v9m0 306v2m1 -669v3m0 65v1m0 145v2m0 565v8m1 -786v5m0 53v1m0 5v1m0 94v1m0 53v2m1 -210v2m0 55v2m0 94v1m0 56v7m0 1v3m0 276v16m0 29v18m0 1v12m0 11v15m0 14v12m1 -569v1m0 64v8m0 23v1m0 102v1m0 506v10m1 -691v1m0 35v4m0 8v2m0 141v1m0 192v6m0 52v9m1 -417v2m0 14v2m0 138v1m0 191v1m1 -353v1m0 2v1m0 18v3m0 14v1m0 311v1m1 -380v1m0 25v2m0 25v3m0 10v1m0 197v6m0 1v7m0 100v1m0 71v8m1 -434v2m0 30v2m0 7v1m0 109v1m0 10v1m0 190v1m0 113v9m1 -536v7m0 51v2m0 34v2m0 4v1m0 32v1m0 1v1m0 76v1m0 8v1m0 93v8m0 1v6m0 81v2m0 12v7m1 -438v6m0 54v4m0 38v2m0 1v1m0 271v6m0 33v1m1 -422v5m0 56v4m0 355v1m1 -426v5m0 59v2m0 81v1m0 5v1m0 81v1m0 39v5m0 144v1m0 165v7m1 -602v2m0 1v2m0 61v3m0 82v1m0 7v1m0 71v4m0 1v3m0 47v1m0 141v1m0 201v5m0 1v29m0 1v8m1 -679v5m0 58v2m0 1v2m0 1v2m0 94v1m0 126v2m0 138v1m1 -436v3m0 60v3m0 231v1m0 109v7m0 20v1m0 27v7m0 1v8m1 -479v1m0 61v2m0 94v1m0 38v3m0 1v3m0 25v10m0 45v4m0 11v2m0 133v1m1 -437v2m0 61v1m0 95v1m0 13v1m0 32v2m0 1v21m0 73v2m0 20v6m0 55v16m0 33v1m0 133v6m1 -576v1m0 62v1m0 69v1m0 25v1m0 15v1m0 130v1m0 128v1m1 -441v5m0 61v2m0 71v1m0 22v2m0 17v1m0 130v2m0 125v1m0 180v6m0 66v5m1 -633v2m0 74v1m0 20v1m0 152v2m0 46v5m0 71v1m0 119v6m0 134v1m0 15v12m0 1v6m1 -761v1m0 88v3m0 96v1m0 121v9m0 1v1m0 23v1m0 107v7m0 6v1m0 261v2m0 1v11m1 -740v3m0 19v2m0 60v4m0 98v1m0 23v1m0 73v10m0 1v14m0 35v2m0 117v1m1 -461v2m0 13v4m0 60v2m0 101v1m0 25v1m0 134v2m0 114v1m0 199v11m1 -668v2m0 9v2m0 63v1m0 102v1m0 163v1m0 62v7m0 42v2m0 79v8m1 -542v2m0 3v4m0 167v1m0 165v1m0 109v1m0 90v1m0 103v7m1 -651v2m0 66v2m0 90v3m0 9v1m0 167v2m0 154v2m0 43v2m0 56v6m1 -538v1m0 89v2m0 4v5m0 3v1m0 171v4m0 196v1m0 69v15m1 -585v3m0 19v2m0 89v1m0 11v3m0 33v10m0 1v6m0 323v1m0 121v1m0 77v5m1 -703v6m0 12v1m0 90v1m0 47v1m0 319v7m0 15v2m0 120v1m1 -616v4m0 6v2m0 483v1m0 153v7m1 -652v2m0 2v2m0 323v6m0 1v4m0 103v11m0 38v1m1 -491v1m0 142v1m0 194v4m0 1v6m0 142v2m0 118v1m1 -497v1m0 26v1m0 350v1m0 118v1m1 -519v1m0 46v1m0 352v1m0 53v6m0 37v2m1 -576v1m0 122v1m0 149v14m0 149v11m0 31v1m1 -478v1m0 120v1m0 356v1m0 117v1m0 77v4m0 19v7m0 1v8m1 -712v1m0 72v1m0 45v1m0 57v3m0 229v12m0 57v1m0 117v1m1 -596v1m0 70v1m0 26v1m0 18v1m0 54v4m0 75v13m0 214v1m1 -478v1m0 67v2m0 28v1m0 16v1m0 52v3m0 307v2m1 -538v2m0 91v6m0 6v2m0 17v2m0 31v1m0 14v1m0 49v4m0 125v8m0 1v10m0 168v1m0 115v1m1 -653v4m0 77v10m0 6v6m0 3v1m0 11v4m0 34v1m0 61v2m0 69v1m0 247v1m1 -534v9m0 65v3m0 27v10m0 4v1m0 34v1m0 132v2m0 246v1m0 131v7m1 -600v1m0 45v1m0 34v1m0 9v1m0 116v2m0 5v2m0 46v8m0 37v5m0 35v3m0 111v1m0 50v17m1 -548v2m0 14v1m0 48v1m0 34v1m0 7v1m0 47v1m0 67v2m0 9v2m0 133v10m0 101v7m0 1v3m0 69v5m0 107v5m0 1v3m1 -726v1m0 41v2m0 2v4m0 9v1m0 50v1m0 34v1m0 36v3m0 62v2m0 18v1m0 13v3m0 201v2m0 36v2m0 115v1m0 87v6m1 -733v1m0 39v1m0 8v5m0 3v1m0 87v3m0 36v6m0 52v2m0 4v4m0 13v1m0 17v2m0 139v11m0 85v2m0 34v17m0 67v1m1 -602v1m0 14v2m0 88v1m0 3v2m0 40v7m0 40v5m0 10v3m0 9v1m0 20v2m0 149v10m0 1v2m0 70v1m1 -482v1m0 104v1m0 6v1m0 76v10m0 18v3m0 5v1m0 23v2m0 229v1m0 193v9m1 -719v3m0 31v2m0 104v1m0 82v2m0 31v2m0 2v1m0 135v10m0 109v1m0 14v4m0 1v1m0 104v1m1 -693v2m0 53v5m0 25v1m0 76v1m0 27v2m0 35v1m0 82v1m0 148v1m0 106v1m0 21v2m0 52v8m0 43v1m1 -692v2m0 7v3m0 12v2m0 32v5m0 19v1m0 102v3m0 12v1m0 23v1m0 233v1m0 104v1m0 24v2m1 -588v2m0 2v2m0 4v7m0 4v1m0 24v1m0 14v2m0 15v2m0 101v2m0 16v1m0 257v1m0 101v2m0 27v9m1 -595v2m0 13v3m0 44v1m0 12v1m0 102v1m0 277v1m0 98v2m0 38v3m0 92v7m0 48v10m1 -692v1m0 10v1m0 59v1m0 42v1m0 24v5m0 11v1m0 200v1m0 37v1m0 96v1m0 43v1m1 -557v1m0 21v1m0 7v2m0 85v1m0 16v1m0 23v2m0 5v3m0 4v4m0 116v1m0 1v1m0 24v1m0 55v1m0 2v4m0 129v1m1 -489v3m0 2v2m0 103v1m0 34v4m0 119v1m0 3v1m0 12v5m0 4v2m0 54v2m0 7v3m0 124v2m0 48v9m0 32v2m0 1v2m0 1v22m0 20v10m1 -632v2m0 62v1m0 41v1m0 157v1m0 5v1m0 9v2m0 5v4m0 55v1m0 12v3m0 29v1m0 71v9m0 10v1m0 136v2m0 46v9m1 -674v1m0 90v1m0 10v2m0 157v1m0 7v1m0 4v4m0 64v2m0 16v1m0 1v9m0 100v8m0 136v2m1 -616v1m0 90v1m0 8v1m0 157v2m0 10v3m0 66v2m0 78v1m0 3v12m0 177v2m1 -613v1m0 90v1m0 6v1m0 49v1m0 36v6m0 64v2m0 80v1m0 108v10m0 143v6m0 1v5m0 50v1m1 -739v1m0 66v1m0 10v1m0 95v1m0 51v1m0 22v1m0 1v2m0 7v2m0 7v1m0 61v1m0 385v20m1 -738v1m0 79v1m0 93v1m0 53v1m0 19v2m0 5v6m0 10v2m0 57v2m0 252v2m1 -557v8m0 134v1m0 1v1m0 55v1m0 16v2m0 25v1m0 55v1m0 63v2m0 312v10m1 -680v2m0 191v1m0 13v2m0 28v1m0 53v1m0 66v3m0 71v1m0 23v1m0 19v10m1 -484v2m0 41v1m0 157v4m0 82v2m0 63v1m0 6v14m0 80v1m1 -488v1m0 35v2m0 40v1m0 153v3m0 85v1m0 64v1m0 254v2m1 -604v1m0 192v1m0 87v1m0 64v1m0 81v1m1 -446v1m0 17v1m0 64v28m0 97v2m0 87v1m0 64v1m0 83v1m1 -428v1m0 39v1m0 21v1m0 169v1m0 31v6m0 1v1m0 5v1m0 150v1m1 -428v1m0 39v1m0 19v1m0 171v1m0 29v1m0 8v2m0 2v1m0 52v1m0 1v1m0 302v4m0 56v7m1 -467v1m0 9v2m0 15v2m0 11v1m0 52v2m0 3v2m0 7v1m0 230v19m1 -464v1m0 107v1m0 3v5m0 3v2m0 11v1m0 63v3m0 7v2m0 3v2m0 89v1m1 -453v1m0 38v1m0 25v1m0 15v1m0 35v1m0 29v1m0 2v2m0 107v2m0 10v2m0 5v4m0 62v2m0 13v2m0 2v2m1 -366v1m0 66v4m0 7v3m0 66v1m0 5v4m0 117v1m0 1v3m0 64v2m0 21v2m1 -302v1m0 4v7m0 68v1m0 10v8m0 176v2m0 25v1m0 96v1m0 72v1m0 18v1m0 2v1m1 -523v1m0 25v2m0 79v1m0 19v1m0 173v2m0 122v2m0 71v1m0 2v3m0 13v2m0 64v1m0 1v9m1 -634v1m0 34v5m0 25v1m0 80v1m0 21v2m0 159v1m0 1v1m0 7v2m0 117v3m0 3v1m0 71v2m0 6v2m0 9v2m0 5v2m0 55v4m1 -627v4m0 31v4m0 5v2m0 22v1m0 58v2m0 45v1m0 156v2m0 3v3m0 2v2m0 117v2m0 3v3m0 71v1m0 10v2m0 6v1m0 9v1m0 45v6m0 1v2m0 140v21m1 -788v4m0 4v1m0 41v2m0 19v1m0 58v1m0 2v3m0 43v3m0 10v2m0 117v1m0 21v2m0 8v1m0 118v2m0 8v1m0 29v2m0 37v2m0 13v2m0 2v2m0 11v1m1 -576v1m0 10v1m0 42v1m0 17v1m0 58v1m0 6v3m0 13v1m0 29v5m0 7v6m0 66v1m0 46v1m0 18v1m0 48v1m0 79v1m0 38v1m0 3v3m0 32v2m0 17v1m0 15v1m1 -565v1m0 25v1m0 16v1m0 15v1m0 58v1m0 10v4m0 5v4m0 35v3m0 10v10m0 55v1m0 48v2m0 15v1m0 50v1m0 77v1m0 46v1m0 29v2m0 36v1m0 14v1m1 -580v1m0 23v1m0 18v2m0 12v1m0 58v1m0 15v1m0 1v3m0 4v1m0 57v5m0 27v2m0 1v2m0 17v1m0 51v4m0 9v2m0 52v2m0 73v2m0 14v1m0 33v2m0 25v2m0 39v1m0 11v2m0 2v1m1 -597v1m0 15v1m0 43v1m0 10v1m0 147v2m0 23v2m0 5v2m0 14v1m0 56v5m0 3v1m0 56v1m0 71v1m0 17v1m0 22v1m0 11v1m0 22v2m0 42v2m0 6v3m0 5v2m0 163v8m1 -771v1m0 17v1m0 43v1m0 8v1m0 172v1m0 9v2m0 74v2m0 59v1m0 69v1m0 40v1m0 13v3m0 18v1m0 46v2m0 2v2m0 10v1m0 47v9m1 -658v1m0 19v1m0 43v2m0 4v2m0 88v1m0 82v2m0 12v3m0 133v1m0 9v1m0 1v1m0 55v1m0 40v1m0 17v4m0 13v1m0 50v1m0 13v1m1 -604v1m0 21v1m0 44v2m0 1v1m0 91v1m0 79v2m0 17v3m0 131v1m0 6v2m0 3v3m0 41v1m0 8v2m0 23v2m0 15v1m0 22v3m0 9v1m0 66v2m1 -607v1m0 23v1m0 107v1m0 108v2m0 22v2m0 130v1m0 2v3m0 8v2m0 10v2m0 25v1m0 2v4m0 3v1m0 27v6m0 8v1m0 26v4m0 4v1m0 69v2m1 -610v1m0 25v1m0 105v1m0 96v3m0 8v2m0 26v1m0 130v2m0 13v1m0 7v2m0 2v2m0 22v1m0 7v3m0 34v7m0 32v2m0 1v1m0 72v1m1 -584v1m0 103v1m0 34v1m0 65v4m0 2v2m0 158v1m0 16v2m0 2v3m0 6v2m0 19v1m0 88v1m0 72v2m0 49v13m0 1v3m0 67v6m1 -724v1m0 101v1m0 36v1m0 68v2m0 180v1m0 11v1m0 17v1m0 164v2m0 137v10m0 1v3m1 -769v2m0 30v1m0 75v2m0 21v2m0 301v2m0 14v1m0 14v1m0 152v1m0 126v2m1 -745v1m0 30v9m0 68v2m0 17v2m0 268v1m0 36v2m0 11v1m0 93v1m0 75v1m0 43v1m0 80v1m1 -742v1m0 108v2m0 13v2m0 43v1m0 204v1m0 20v1m0 39v2m0 7v2m0 95v2m0 74v2m0 89v9m0 23v1m1 -740v1m0 109v2m0 10v1m0 46v1m0 128v16m0 56v2m0 2v2m0 60v2m0 4v1m0 99v3m0 73v1m0 60v9m0 29v10m0 11v1m1 -738v1m0 25v1m0 72v1m0 11v2m0 125v1m0 128v2m0 6v2m0 60v2m0 1v1m0 103v2m0 73v5m0 103v8m0 1v1m1 -736v1m0 23v1m0 72v1m0 14v1m0 154v1m0 1v1m0 93v3m0 10v1m0 168v1m1 -524v2m0 15v1m0 55v2m0 16v2m0 54v1m0 96v1m0 3v1m0 22v1m0 66v3m0 14v1m0 168v1m0 68v2m1 -596v1m0 72v1m0 20v2m0 53v1m0 68v1m0 25v1m0 5v1m0 87v1m0 18v1m0 168v1m0 65v2m1 -613v1m0 17v1m0 72v1m0 77v1m0 89v4m0 7v1m0 106v1m0 148v1m0 19v1m0 18v5m0 40v1m0 74v8m1 -692v2m0 36v1m0 25v2m0 1v2m0 20v1m0 79v1m0 15v3m0 67v3m0 12v1m0 17v1m0 45v1m0 42v1m0 146v1m0 21v1m0 15v2m0 5v12m0 26v2m1 -607v2m0 36v3m0 19v2m0 5v2m0 99v15m0 69v1m0 16v1m0 15v1m0 44v1m0 2v2m0 41v2m0 143v1m0 23v2m0 11v1m0 44v2m0 45v1m1 -649v1m0 10v1m0 27v4m0 14v1m0 9v2m0 180v1m0 18v1m0 13v1m0 44v1m0 5v3m0 40v2m0 139v1m0 27v1m0 9v1m0 44v1m1 -591v1m0 32v2m0 10v2m0 12v2m0 12v1m0 127v1m0 36v1m0 21v2m0 9v1m0 44v1m0 9v3m0 9v1m0 29v2m0 134v3m0 29v1m0 7v1m0 24v1m0 18v2m0 89v8m1 -688v1m0 35v3m0 6v1m0 16v2m0 8v2m0 163v2m0 24v9m0 44v1m0 13v3m0 155v1m0 7v9m0 33v1m0 5v1m0 42v2m1 -590v1m0 39v2m0 2v2m0 19v2m0 4v2m0 106v1m0 56v2m0 78v1m0 17v3m0 150v1m0 2v2m0 2v3m0 43v1m0 3v1m0 42v1m0 130v1m1 -720v1m0 42v1m0 24v1m0 1v2m0 84v1m0 79v1m0 67v2m0 9v2m0 21v1m0 107v6m0 1v2m0 32v1m0 6v1m0 47v1m0 1v1m0 29v1m0 12v1m1 -592v4m0 69v1m0 164v2m0 39v1m0 30v4m0 3v2m0 130v1m0 9v2m0 1v2m0 1v2m0 23v1m0 88v1m0 9v2m0 17v12m1 -621v1m0 4v1m0 231v2m0 76v1m0 1v1m0 131v1m0 18v3m0 19v1m0 90v1m0 7v1m0 161v11m0 16v7m1 -786v1m0 306v1m0 96v2m0 1v2m0 40v1m0 22v2m0 16v1m0 92v1m0 4v2m1 -591v1m0 77v1m0 111v1m0 116v1m0 96v1m0 5v1m0 20v1m0 17v1m0 25v2m0 12v2m0 94v1m0 1v2m1 -590v1m0 9v1m0 150v1m0 144v2m0 95v2m0 7v2m0 14v4m0 2v2m0 6v8m0 28v2m0 8v2m1 -491v1m0 11v1m0 148v1m0 144v1m0 43v1m0 49v4m0 11v1m0 10v3m0 8v1m0 2v3m0 38v3m0 3v2m1 -476v1m0 103v1m0 89v1m0 1v2m0 94v1m0 45v2m0 28v2m0 1v2m0 10v4m0 16v2m0 6v2m0 13v1m0 44v1m0 1v1m0 37v1m1 -492v1m0 81v1m0 2v2m0 20v3m0 62v2m0 4v5m0 22v1m0 1v2m0 47v3m0 12v1m0 48v4m0 22v2m0 5v2m0 6v2m0 22v2m0 2v2m0 163v1m0 1v1m0 36v23m1 -651v1m0 114v2m0 5v3m0 14v2m0 4v13m0 3v1m0 35v8m0 1v1m0 11v6m0 15v1m0 4v2m0 48v5m0 6v1m0 18v1m0 34v5m0 16v1m0 9v2m0 2v2m0 27v1m1 -425v1m0 17v1m0 96v1m0 10v2m0 11v1m0 19v3m0 63v5m0 9v1m0 7v1m0 52v3m0 2v1m0 20v1m0 38v3m0 12v1m0 12v2m0 134v1m1 -531v1m0 19v1m0 14v1m0 48v1m0 30v1m0 13v3m0 6v2m0 91v5m0 3v1m0 9v1m0 54v1m0 23v1m0 40v2m0 8v2m0 150v8m0 17v1m0 32v1m0 5v1m0 58v4m1 -660v2m0 21v1m0 60v2m0 2v1m0 26v2m0 17v2m0 2v2m0 59v1m0 38v2m0 12v1m0 120v1m0 6v1m0 151v1m0 8v5m0 10v1m0 2v2m0 28v2m1 -592v1m0 82v2m0 5v2m0 23v1m0 21v1m0 116v2m0 119v5m0 152v1m0 14v3m0 5v2m0 5v3m0 23v2m0 98v9m1 -698v1m0 34v3m0 45v1m0 9v1m0 21v1m0 141v2m0 273v1m0 18v2m0 2v1m0 10v3m0 18v2m0 186v7m0 1v6m1 -762v1m0 3v4m0 4v2m0 53v1m0 19v1m0 54v1m0 29v1m0 14v1m0 44v2m0 270v1m0 21v1m0 15v2m0 15v1m0 92v9m1 -660v3m0 10v2m0 52v1m0 16v2m0 84v1m0 62v1m0 268v1m0 40v2m0 12v1m0 82v10m0 22v1m1 -658v1m0 37v1m0 14v1m0 14v1m0 85v1m0 64v1m0 266v1m0 43v1m0 10v1m1 -541v2m0 12v2m0 1v2m0 17v1m0 16v1m0 12v1m0 85v1m0 66v1m0 264v1m0 45v1m0 8v1m0 19v1m0 59v4m1 -621v1m0 9v2m0 5v2m0 13v2m0 18v1m0 10v1m0 85v1m0 68v3m0 260v1m0 47v2m0 5v1m0 21v1m0 27v1m0 69v33m0 1v2m0 17v19m0 9v9m1 -768v2m0 21v1m0 6v2m0 9v2m0 9v2m0 21v1m0 7v2m0 64v21m0 73v2m0 201v1m0 55v1m0 50v2m0 1v2m0 23v2m1 -586v3m0 24v2m0 2v2m0 13v1m0 6v2m0 24v1m0 5v1m0 361v2m0 2v2m0 51v1m0 81v1m1 -589v2m0 30v1m0 16v2m0 2v2m0 28v4m0 242v2m0 116v2m0 6v2m0 48v1m0 83v1m1 -591v1m0 52v1m0 34v1m0 239v2m0 3v2m0 111v2m0 10v1m0 46v1m0 85v1m1 -594v2m0 317v1m0 8v2m0 7v2m0 107v2m0 13v2m0 43v1m1 -509v2m0 317v2m0 2v2m0 3v2m0 11v1m0 104v2m0 17v2m0 40v1m1 -511v3m0 94v1m0 220v4m0 6v1m0 1v1m0 14v1m0 101v2m0 21v1m0 38v1m0 90v1m0 9v7m0 1v2m0 114v9m1 -745v2m0 98v1m0 208v11m0 28v2m0 97v2m0 24v1m0 36v1m0 92v8m0 44v3m1 -660v2m0 89v1m0 173v3m0 41v2m0 41v1m0 95v1m0 27v1m0 8v2m0 7v4m0 5v8m0 93v1m0 181v4m1 -800v1m0 1v1m0 5v2m0 90v1m0 172v1m0 4v3m0 36v1m0 45v1m0 43v2m0 1v2m0 75v1m0 3v4m0 3v1m0 2v3m0 4v5m0 9v1m1 -520v2m0 1v2m0 91v1m0 142v1m0 29v1m0 8v2m0 81v2m0 39v2m0 5v2m0 74v3m0 9v1m0 23v1m1 -520v1m0 92v1m0 127v8m0 5v3m0 2v3m0 24v1m0 11v1m0 82v2m0 36v1m0 9v2m0 109v3m0 84v1m1 -498v1m0 26v3m0 89v5m0 8v12m0 11v1m0 13v6m0 25v1m0 52v1m0 34v1m0 12v2m0 7v1m0 102v5m0 78v1m1 -538v1m0 41v1m0 21v4m0 4v1m0 112v4m0 6v1m0 21v1m0 22v1m0 54v2m0 30v2m0 15v2m0 3v2m0 2v2m0 57v1m0 46v5m0 248v9m1 -723v2m0 2v1m0 40v1m0 17v3m0 9v1m0 115v3m0 2v1m0 23v1m0 78v2m0 4v2m0 1v1m0 19v1m0 20v2m0 6v1m0 22v3m0 30v1m0 52v6m0 151v9m0 1v5m0 32v5m1 -704v8m0 19v2m0 5v2m0 39v1m0 14v2m0 13v1m0 117v1m0 26v1m0 79v4m0 4v2m0 14v3m0 30v2m0 16v4m0 4v1m0 87v4m0 37v1m0 23v1m1 -572v5m0 9v1m0 16v1m0 9v1m0 39v1m0 11v2m0 16v1m0 72v1m0 71v1m0 11v7m0 70v2m0 8v4m0 35v2m0 12v2m0 100v3m0 31v2m0 2v3m0 18v2m0 23v6m1 -602v2m0 30v1m0 11v1m0 48v2m0 165v3m0 4v3m0 7v1m0 71v1m0 6v1m0 41v4m0 4v4m0 105v1m0 28v2m0 7v3m0 13v2m0 51v8m1 -657v1m0 56v2m0 13v2m0 11v1m0 32v2m0 170v4m0 83v1m0 3v2m0 46v1m0 1v2m0 17v3m0 117v1m0 12v3m0 9v1m1 -551v1m0 10v1m0 17v2m0 40v2m0 24v1m0 235v1m0 1v1m0 28v1m0 43v4m0 16v1m0 95v1m0 16v2m0 6v1m1 -549v1m0 8v1m0 20v2m0 36v2m0 28v1m0 161v1m0 150v2m0 13v1m0 72v4m0 19v1m0 19v2m1 -588v1m0 44v1m0 6v1m0 23v2m0 65v4m0 310v7m0 5v1m0 77v3m0 15v1m0 22v2m0 66v9m0 105v4m1 -773v1m0 49v1m0 26v2m0 67v9m0 308v2m0 2v1m0 81v2m0 12v1m1 -544v1m0 28v1m0 106v1m0 3v6m0 6v6m0 6v3m0 278v1m0 85v2m0 9v1m0 74v8m1 -599v1m0 1v1m0 109v2m0 6v6m0 6v6m0 4v1m0 364v2m0 6v1m1 -373v1m0 116v1m0 232v1m0 15v3m0 2v1m0 172v2m1 -545v1m0 319v1m0 1v1m0 45v1m0 106v9m0 1v7m0 46v5m1 -717v2m0 173v1m0 12v1m0 150v1m0 23v1m0 129v1m0 3v1m0 113v5m0 1v3m0 82v10m1 -724v3m0 5v4m0 3v2m0 24v2m0 1v1m0 59v1m0 83v1m0 161v1m0 25v3m0 125v1m0 5v1m0 122v5m0 71v5m1 -717v2m0 4v3m0 1v1m0 9v2m0 21v1m0 4v2m0 27v1m0 27v2m0 85v1m0 115v1m0 43v1m0 29v2m0 122v1m0 7v1m0 192v5m1 -713v1m0 22v1m0 19v1m0 7v1m0 24v2m0 2v1m0 24v1m0 88v1m0 115v3m0 33v6m0 33v2m0 118v2m0 192v5m0 1v3m0 28v1m0 1v30m1 -769v1m0 41v2m0 9v1m0 21v2m0 25v4m0 90v4m0 114v14m0 17v2m0 41v1m0 115v2m1 -466v2m0 12v1m0 19v1m0 22v5m0 33v1m0 59v1m0 4v3m0 29v14m0 82v3m0 4v10m0 44v4m0 110v1m0 14v1m1 -493v1m0 12v1m0 33v1m0 9v1m0 10v3m0 16v1m0 89v1m0 26v1m0 15v5m0 80v1m0 1v2m0 58v3m0 75v1m0 145v16m1 -635v1m0 28v1m0 10v1m0 33v1m0 11v2m0 6v2m0 110v2m0 23v1m0 21v2m0 143v1m0 71v2m0 2v4m0 59v1m0 58v1m1 -598v1m0 30v2m0 7v1m0 18v1m0 12v3m0 14v2m0 2v2m0 101v1m0 12v1m0 21v1m0 168v1m0 3v1m0 64v2m0 8v4m0 21v1m0 18v1m0 13v1m0 56v2m0 2v2m1 -601v1m0 33v3m0 3v1m0 20v1m0 8v3m0 19v1m0 103v1m0 14v1m0 19v1m0 128v1m0 41v1m0 1v1m0 2v3m0 59v1m0 14v4m0 16v1m0 20v2m0 40v1m0 25v2m0 6v2m1 -604v1m0 37v2m0 23v1m0 6v1m0 125v1m0 16v2m0 16v1m0 130v2m0 15v1m0 31v4m0 54v1m0 19v2m0 13v1m0 23v1m0 37v1m0 2v2m0 22v1m0 10v1m1 -606v1m0 64v2m0 3v1m0 51v1m0 73v1m0 19v1m0 14v1m0 30v2m0 101v1m0 50v4m0 72v2m0 10v1m0 25v2m0 4v3m0 33v2m0 18v2m0 12v1m0 8v7m1 -623v1m0 67v1m0 1v1m0 53v1m0 71v1m0 21v2m0 11v1m0 33v6m0 150v2m0 72v1m0 8v1m0 28v4m0 3v1m0 34v1m0 15v2m0 15v1m0 42v4m1 -656v1m0 195v1m0 24v1m0 9v1m0 40v6m0 146v3m0 43v1m0 27v1m0 5v1m0 28v1m0 33v1m0 9v2m0 12v1m0 18v1m1 -612v1m0 138v1m0 56v1m0 26v1m0 7v1m0 47v6m0 143v2m0 40v1m0 29v1m0 2v2m0 28v1m0 46v1m0 10v1m0 20v1m0 98v3m0 65v13m1 -793v1m0 128v1m0 5v5m0 85v2m0 3v2m0 54v3m0 142v2m0 37v1m0 29v1m0 1v2m0 29v1m0 11v1m0 36v2m0 6v2m0 22v2m1 -486v5m0 5v1m0 86v1m0 1v1m0 70v13m0 120v2m0 64v1m0 32v1m0 13v1m0 37v3m0 2v1m0 26v2m1 -489v1m0 65v1m0 98v6m0 13v1m0 26v2m0 93v1m0 62v1m0 32v1m0 15v1m0 39v1m1 -296v2m0 44v2m0 128v1m0 28v1m0 7v1m0 24v1m1 -389v1m0 86v2m0 106v1m0 99v1m0 26v4m0 28v1m0 9v1m0 22v1m0 213v5m1 -621v1m0 15v1m0 87v2m0 82v1m0 19v2m0 120v1m0 2v4m0 4v2m0 25v1m0 11v1m0 20v1m0 20v1m0 128v8m0 1v1m1 -562v1m0 17v2m0 22v2m0 1v2m0 60v1m0 82v1m0 16v2m0 10v1m0 108v3m0 13v2m0 22v1m0 13v1m0 18v1m0 23v3m0 134v3m0 58v13m1 -760v1m0 122v1m0 20v2m0 18v2m0 5v1m0 60v1m0 82v1m0 14v1m0 40v1m0 1v3m0 61v15m0 18v2m0 19v1m0 15v1m0 16v1m0 27v10m0 127v2m1 -690v1m0 42v6m0 72v1m0 23v1m0 14v3m0 8v1m0 60v2m0 81v1m0 11v2m0 38v3m0 6v2m0 5v5m0 83v2m0 16v1m0 17v1m0 4v7m0 3v1m0 133v9m0 25v2m1 -691v1m0 21v8m0 10v1m0 7v2m0 69v1m0 25v1m0 10v3m0 12v2m0 49v1m0 10v1m0 81v1m0 8v2m0 17v1m0 20v2m0 11v5m0 5v2m0 83v2m0 13v1m0 20v3m0 7v3m0 132v1m0 37v2m1 -673v1m0 9v9m0 11v2m0 4v5m0 57v1m0 35v2m0 17v2m0 45v2m0 12v1m0 81v1m0 6v1m0 20v1m0 18v1m0 25v8m0 77v1m0 11v1m0 206v2m0 9v3m1 -688v1m0 32v4m0 5v3m0 88v2m0 21v1m0 43v1m0 15v2m0 84v2m0 37v3m0 34v2m0 76v1m0 9v1m0 209v2m0 93v4m1 -776v1m0 45v1m0 21v4m0 57v1m0 2v2m0 24v2m0 59v1m0 81v2m0 34v5m0 39v1m0 76v1m0 7v1m0 37v1m0 128v1m0 45v1m0 1v4m0 29v6m1 -721v1m0 64v4m0 4v2m0 4v2m0 18v1m0 32v1m0 28v2m0 3v3m0 52v1m0 13v2m0 97v4m0 76v1m0 45v1m0 4v2m0 39v1m0 126v1m0 14v1m0 1v6m1 -657v1m0 64v1m0 10v4m0 3v1m0 81v2m0 3v1m0 52v2m0 6v5m0 3v1m0 93v2m0 51v2m0 25v2m0 47v2m0 1v1m0 42v1m0 124v1m1 -580v6m0 3v2m0 19v1m0 140v2m0 2v2m0 101v1m0 55v2m0 21v2m0 96v1m0 89v10m0 22v2m0 55v20m0 35v5m1 -763v1m0 1v2m0 63v2m0 6v3m0 22v4m0 139v1m0 161v1m0 19v1m0 99v1m0 84v2m0 33v1m1 -642v2m0 7v1m0 90v6m0 77v1m0 68v1m0 149v2m0 15v2m0 180v5m0 34v1m1 -639v6m0 98v3m0 75v1m0 68v1m0 150v4m0 10v1m0 177v5m0 38v1m0 128v16m1 -790v1m0 114v1m0 75v1m0 68v1m0 85v1m0 67v5m0 3v2m0 172v6m1 -603v1m0 178v1m0 82v1m0 24v1m0 57v2m0 73v2m0 170v5m0 130v3m0 1v2m1 -735v2m0 100v1m0 77v1m0 84v1m0 21v2m0 2v2m0 52v2m0 242v5m0 52v1m0 52v3m1 -703v1m0 120v1m0 58v1m0 16v1m0 69v1m0 18v2m0 6v2m0 49v1m0 227v3m0 12v2m0 56v1m1 -468v1m0 18v1m0 69v2m0 15v1m0 10v1m0 274v1m0 4v9m0 1v1m0 58v1m1 -545v1m0 97v1m0 70v2m0 12v1m0 12v2m0 55v1m0 214v2m0 73v1m1 -445v2m0 70v2m0 9v1m0 15v2m0 3v16m0 23v1m0 11v1m0 185v4m0 23v1m0 74v1m0 126v7m0 1v4m1 -739v1m0 28v1m0 129v1m0 71v1m0 7v1m0 19v2m0 17v2m0 18v2m0 38v1m0 126v1m0 28v4m0 5v1m0 20v1m0 63v11m1 -601v2m0 2v2m0 23v1m0 2v2m0 50v9m0 70v13m0 58v1m0 4v2m0 41v1m0 15v2m0 37v2m0 2v2m0 122v2m0 39v1m0 18v1m1 -533v7m0 6v2m0 20v1m0 5v1m0 58v6m0 78v1m0 57v1m0 1v2m0 44v1m0 13v1m0 18v1m0 18v2m0 6v2m0 118v2m0 5v1m0 36v1m1 -500v1m0 18v1m0 7v1m0 63v6m0 4v1m0 94v1m0 79v1m0 10v2m0 37v1m0 10v3m0 91v6m0 16v2m0 8v1m0 36v2m1 -501v1m0 16v1m0 9v1m0 68v2m0 3v3m0 89v2m0 89v2m0 38v1m0 14v2m0 77v5m0 4v3m0 7v1m0 10v4m0 11v2m0 36v2m0 11v1m1 -533v1m0 18v2m0 12v2m0 11v1m0 75v2m0 64v1m0 19v3m0 89v2m0 38v2m0 91v3m0 5v4m0 11v1m0 5v4m0 17v1m0 17v1m0 19v2m0 8v1m1 -542v2m0 1v1m0 3v3m0 21v1m0 10v1m0 14v3m0 74v2m0 63v1m0 16v2m0 8v1m0 78v1m0 2v2m0 39v1m0 91v1m0 25v1m0 2v2m0 22v1m0 15v1m0 22v2m0 4v2m0 109v4m1 -657v3m0 5v2m0 25v1m0 8v1m0 18v3m0 73v2m0 76v2m0 11v1m0 79v1m0 40v1m0 21v1m0 69v1m0 28v1m0 25v1m0 13v1m0 25v1m0 1v2m0 171v1m0 1v7m0 9v19m1 -752v2m0 36v1m0 6v1m0 22v1m0 74v1m0 74v1m0 14v1m0 110v3m0 4v2m0 23v1m0 124v1m0 11v1m0 199v2m1 -717v2m0 39v2m0 3v1m0 99v2m0 60v1m0 27v1m0 107v1m0 4v3m0 27v2m0 24v3m0 96v1m0 9v1m0 60v1m0 138v1m1 -729v1m0 12v1m0 43v1m0 1v1m0 102v2m0 59v1m0 27v1m0 104v2m0 37v2m0 19v3m0 4v2m0 34v1m0 59v2m0 5v2m0 62v2m0 50v2m0 82v2m1 -727v1m0 9v2m0 45v1m0 27v1m0 77v4m0 3v1m0 52v1m0 7v1m0 19v1m0 18v2m0 1v1m0 80v1m0 58v2m0 9v2m0 25v7m0 62v2m0 1v2m0 66v2m0 131v1m0 15v7m1 -746v1m0 7v1m0 46v1m0 29v2m0 79v2m0 55v1m0 3v3m0 21v1m0 15v2m0 141v2m0 13v1m0 22v2m0 7v1m0 134v2m0 128v1m1 -717v2m0 46v1m0 32v2m0 136v2m0 25v1m0 12v2m0 139v4m0 35v1m0 1v1m0 135v1m0 10v2m0 124v2m1 -718v2m0 47v1m0 4v1m0 194v1m0 9v2m0 9v1m0 127v4m0 36v3m0 151v1m0 87v10m0 1v1m0 23v1m1 -717v1m0 48v1m0 6v1m0 31v2m0 168v2m0 12v1m0 123v3m0 35v5m0 17v1m0 137v1m0 76v9m0 35v1m1 -668v1m0 41v1m0 165v2m0 106v1m0 30v1m0 32v6m0 23v1m0 58v2m0 1v2m0 74v1m0 11v11m0 46v6m0 43v2m1 -668v1m0 43v3m0 158v1m0 1v2m0 109v1m0 60v2m0 86v2m0 5v1m0 74v2m0 6v2m0 106v1m1 -619v3m0 156v1m0 112v1m0 146v1m0 8v1m0 54v1m0 20v2m0 2v2m0 107v1m1 -615v1m0 248v1m0 43v3m0 66v1m0 63v1m0 52v1m0 24v1m0 90v4m0 13v2m1 -666v1m0 13v1m0 38v1m0 176v1m0 48v1m0 20v1m0 38v6m0 70v1m0 24v1m0 1v2m0 35v1m0 29v7m0 69v9m0 1v3m0 64v2m1 -684v2m0 17v1m0 38v1m0 15v1m0 12v1m0 55v1m0 107v1m0 45v1m0 2v3m0 16v1m0 36v3m0 77v1m0 21v2m0 4v1m0 21v1m0 13v1m0 35v10m0 28v1m0 43v4m0 59v1m1 -680v6m0 10v1m0 56v2m0 7v3m0 2v2m0 50v2m0 2v2m0 148v2m0 6v3m0 12v1m0 35v2m0 101v1m0 7v1m0 35v1m0 44v4m0 23v1m0 48v3m0 54v2m1 -673v4m0 5v1m0 18v1m0 40v2m0 3v2m0 7v2m0 46v2m0 6v2m0 145v1m0 11v2m0 9v1m0 34v2m0 102v1m0 9v2m0 34v1m0 122v4m0 123v4m1 -744v2m0 2v1m0 20v1m0 18v1m0 22v1m0 1v1m0 11v1m0 44v1m0 10v3m0 42v2m0 1v2m0 54v1m0 39v1m0 14v2m0 38v4m0 19v2m0 65v1m0 15v2m0 12v2m0 14v1m0 18v1m0 125v9m0 34v6m1 -664v1m0 23v1m0 16v1m0 38v1m0 57v2m0 39v1m0 5v2m0 53v1m0 37v1m0 17v2m0 34v2m0 25v2m0 64v1m0 13v1m0 16v2m0 10v2m0 20v1m0 252v10m1 -771v1m0 42v1m0 12v3m0 40v2m0 16v1m0 40v2m0 36v1m0 8v1m0 88v2m0 20v2m0 1v1m0 59v1m0 76v1m0 19v2m0 6v2m0 23v1m1 -511v1m0 44v1m0 4v7m0 45v1m0 13v1m0 2v3m0 19v1m0 19v2m0 33v1m0 10v2m0 64v3m0 1v1m0 16v1m0 24v1m0 61v1m0 74v1m0 23v5m0 26v1m0 15v3m0 69v10m0 164v1m1 -775v1m0 46v4m0 53v1m0 10v2m0 6v3m0 15v1m0 22v2m0 30v1m0 13v1m0 51v1m0 4v7m0 5v3m0 12v1m0 88v1m0 63v1m0 7v2m0 56v1m0 9v5m1 -529v1m0 105v2m0 6v2m0 11v2m0 11v2m0 54v1m0 15v2m0 50v4m0 15v2m0 9v1m0 90v2m0 68v1m0 59v1m0 3v5m0 229v4m1 -781v1m0 7v6m0 6v3m0 109v2m0 2v2m0 15v2m0 8v1m0 28v1m0 26v1m0 18v3m0 68v2m0 5v2m0 29v1m0 63v2m0 65v1m0 33v1m0 28v2m0 59v1m1 -602v3m0 1v3m0 6v6m0 115v1m0 19v1m0 6v1m0 54v2m0 22v2m0 68v2m0 2v1m0 97v2m0 10v2m0 50v1m1 -322v2m0 3v1m0 54v1m0 26v2m0 41v1m0 26v1m0 101v2m0 4v4m0 3v1m0 47v1m1 -429v1m0 109v1m0 1v1m0 33v2m0 19v1m0 29v1m0 171v1m0 1v2m0 8v2m0 169v1m1 -552v2m0 142v1m0 2v4m0 13v2m0 31v2m0 122v2m0 59v1m0 320v24m1 -725v1m0 140v1m0 7v2m0 9v2m0 35v2m0 34v1m0 66v1m0 13v5m0 62v1m0 238v1m0 33v2m1 -662v1m0 6v1m0 138v1m0 10v1m0 7v1m0 39v1m0 101v2m0 9v2m0 68v2m0 268v2m0 43v1m1 -696v1m0 136v1m0 12v1m0 5v1m0 144v2m0 3v4m0 11v1m0 60v1m0 30v8m0 42v2m0 192v21m0 16v1m1 -694v1m0 134v1m0 14v1m0 3v1m0 148v2m0 16v1m0 60v1m0 13v8m0 5v3m0 52v1m1 -476v1m0 11v1m0 131v2m0 16v1m0 1v1m0 168v1m0 60v1m0 10v1m0 9v5m0 38v1m0 92v4m0 1v1m1 -558v1m0 13v2m0 128v1m0 19v1m0 170v2m0 59v1m0 8v1m0 141v5m0 6v2m0 29v2m1 -575v3m0 3v2m0 25v1m0 93v1m0 21v1m0 70v3m0 66v1m0 31v1m0 59v1m0 6v1m0 140v1m0 14v2m0 23v4m1 -629v1m0 58v1m0 1v1m0 3v2m0 35v1m0 79v1m0 23v1m0 45v24m0 68v1m0 33v1m0 59v1m0 4v1m0 53v1m0 72v14m0 18v1m0 20v2m1 -627v2m0 2v1m0 64v2m0 30v3m0 2v2m0 75v1m0 25v2m0 133v2m0 95v2m0 1v1m0 119v8m0 33v1m0 15v4m0 114v6m1 -740v1m0 65v1m0 21v8m0 7v2m0 21v1m0 50v1m0 28v1m0 131v1m0 273v4m0 79v1m1 -695v1m0 32v1m0 32v2m0 18v1m0 17v1m0 18v2m0 2v1m0 47v1m0 30v2m0 128v1m0 272v2m0 82v1m0 32v6m1 -731v1m0 29v2m0 35v2m0 35v1m0 15v2m0 5v2m0 44v1m0 33v2m0 125v1m0 265v1m0 3v4m0 83v1m0 78v2m1 -751v1m0 1v3m0 3v1m0 39v1m0 35v1m0 13v1m0 9v1m0 42v1m0 36v2m0 165v1m0 139v1m0 5v4m0 76v2m0 86v1m1 -673v3m0 5v3m0 41v2m0 11v1m0 22v1m0 11v1m0 11v1m0 40v1m0 39v1m0 30v2m0 133v2m0 55v2m0 1v1m0 49v2m0 28v5m0 4v2m0 138v21m1 -671v2m0 54v2m0 8v1m0 24v1m0 9v1m0 13v2m0 19v1m0 1v1m0 57v2m0 26v2m0 90v1m0 46v2m0 51v2m0 38v15m0 3v1m0 37v1m0 210v4m1 -728v1m0 58v1m0 33v1m0 6v2m0 16v1m0 16v2m0 3v2m0 57v1m0 23v2m0 69v1m0 21v1m0 49v3m0 47v1m0 59v2m0 36v1m0 97v4m0 57v1m1 -676v2m0 60v2m0 32v2m0 2v2m0 19v1m0 11v4m0 7v2m0 56v1m0 20v2m0 69v1m0 2v4m0 16v1m0 48v2m0 3v1m0 45v1m0 8v1m0 53v1m0 21v1m0 14v2m1 -520v1m0 64v2m0 1v1m0 31v1m0 22v1m0 6v4m0 13v2m0 55v1m0 17v2m0 78v5m0 10v1m0 47v2m0 7v1m0 20v1m0 20v2m0 10v1m0 53v1m0 37v1m1 -523v2m0 124v2m0 2v2m0 19v1m0 6v1m0 48v2m0 13v2m0 85v6m0 3v1m0 47v1m0 10v2m0 16v2m0 2v2m0 16v1m0 67v1m0 37v1m1 -527v3m0 129v1m0 22v1m0 4v1m0 51v1m0 10v2m0 71v2m0 20v3m0 47v1m0 13v1m0 12v3m0 6v2m0 13v1m0 69v2m0 15v1m0 20v1m1 -529v1m0 156v1m0 56v2m0 6v2m0 57v3m0 9v4m0 25v1m0 44v2m0 15v1m0 9v2m0 11v3m0 8v2m0 72v1m0 13v1m0 22v2m0 120v8m1 -632v16m0 115v1m0 57v2m0 2v2m0 56v3m0 3v3m0 3v3m0 73v1m0 18v1m0 5v3m0 16v4m0 2v2m0 75v1m0 11v1m0 25v1m0 235v3m1 -551v1m0 56v2m0 9v3m0 75v1m0 20v1m0 2v2m0 23v1m0 22v1m0 56v1m0 9v1m0 27v1m0 181v4m1 -394v1m0 38v2m0 23v1m0 49v1m0 56v1m0 7v1m0 29v2m0 203v9m1 -750v1m0 363v2m0 133v1m0 3v3m0 32v1m0 4v4m0 227v6m1 -782v2m0 2v1m0 360v1m0 100v1m0 35v3m0 3v1m0 32v4m0 4v1m0 81v4m0 1v10m1 -648v2m0 51v1m0 301v1m0 1v1m0 7v2m0 80v1m0 18v2m0 2v1m0 40v1m0 40v2m0 231v6m0 1v2m1 -796v2m0 110v1m0 1v1m0 240v2m0 3v3m0 2v2m0 83v4m0 12v2m0 5v1m0 40v1m0 41v1m0 80v2m0 118v22m1 -782v3m0 10v1m0 99v2m0 3v1m0 111v1m0 125v2m0 8v1m0 85v1m0 4v6m0 4v2m0 8v1m0 40v1m0 41v1m0 78v1m1 -641v1m0 14v1m0 45v3m0 49v1m0 6v1m0 234v2m0 95v1m0 11v3m0 12v1m0 82v1m0 70v7m1 -580v1m0 3v9m0 10v2m0 1v2m0 24v1m0 8v1m0 231v2m0 96v1m0 28v1m0 26v1m0 55v1m0 4v7m0 32v2m0 1v1m0 21v1m0 68v10m1 -638v2m0 7v1m0 5v2m0 20v2m0 10v1m0 106v1m0 111v1m0 10v1m0 97v1m0 30v1m0 83v3m0 7v6m0 24v2m0 24v1m0 23v8m1 -646v1m0 16v2m0 39v6m0 9v2m0 16v2m0 13v2m0 226v1m0 97v1m0 32v1m0 98v2m0 18v4m0 25v1m1 -603v6m0 24v1m0 33v3m0 12v1m0 17v1m0 135v1m0 88v1m0 132v1m0 38v1m0 61v1m0 13v3m0 11v1m0 10v7m0 82v13m1 -703v6m0 29v1m0 37v2m0 9v1m0 19v1m0 14v1m0 33v1m0 86v3m0 78v1m0 3v3m0 134v1m0 38v1m0 61v1m0 10v2m0 15v1m0 8v1m1 -603v2m0 75v2m0 5v2m0 21v1m0 11v2m0 2v1m0 29v1m0 2v2m0 87v4m0 76v2m0 100v1m0 37v1m0 18v1m0 19v1m0 61v1m0 8v1m0 18v2m0 4v2m1 -523v2m0 2v1m0 24v1m0 8v2m0 5v2m0 25v2m0 5v2m0 19v1m0 1v1m0 67v4m0 128v1m0 44v1m0 39v1m0 38v1m0 16v2m0 43v1m0 3v4m0 21v2m0 1v1m1 -519v1m0 27v1m0 3v4m0 9v1m0 23v1m0 9v2m0 13v4m0 3v2m0 69v2m0 127v1m0 42v1m0 41v1m0 38v1m0 13v2m0 47v2m1 -552v1m0 91v2m0 14v1m0 20v2m0 12v2m0 8v3m0 9v2m0 69v4m0 119v1m0 4v1m0 40v1m0 43v1m0 38v1m0 11v1m0 149v11m1 -552v1m0 17v2m0 16v2m0 2v4m0 14v2m0 48v2m0 21v2m0 116v1m0 6v4m0 35v1m0 45v1m0 38v1m0 126v2m0 69v3m0 65v3m1 -648v2m0 13v2m0 21v1m0 20v1m0 45v2m0 152v4m0 16v2m0 12v1m0 47v1m0 10v1m0 27v1m1 -379v1m0 11v1m0 45v1m0 43v1m0 158v2m0 10v4m0 3v2m0 8v1m0 49v1m0 8v1m0 29v1m0 224v5m1 -608v1m0 9v1m0 47v2m0 181v2m0 19v2m0 6v2m0 9v1m0 58v1m0 38v2m1 -491v3m0 108v2m0 5v2m0 50v1m0 175v5m0 23v2m0 2v2m0 12v2m0 57v1m0 39v1m1 -493v1m0 3v5m0 105v2m0 2v1m0 53v3m0 167v5m0 30v1m0 17v2m0 1v1m0 54v1m0 3v1m0 35v2m1 -486v2m0 105v1m0 58v3m0 114v7m0 38v5m0 55v1m0 56v3m0 39v2m1 -486v1m0 165v1m0 30v1m0 67v15m0 43v2m0 115v2m0 3v1m0 40v2m1 -526v1m0 23v1m0 14v1m0 165v1m0 5v14m0 9v1m0 44v5m0 17v2m0 173v2m0 6v2m0 40v1m0 116v10m0 1v19m1 -675v2m0 2v2m0 19v1m0 16v1m0 165v1m0 1v2m0 15v5m0 3v1m0 37v8m0 5v15m0 126v1m0 49v1m0 10v1m0 40v2m0 106v7m0 73v24m1 -744v3m0 6v2m0 16v1m0 18v1m0 188v3m0 241v1m0 12v1m0 28v1m0 12v1m1 -537v2m0 11v1m0 13v2m0 20v1m0 17v2m0 1v1m0 264v1m0 159v1m0 41v4m0 204v1m1 -749v3m0 14v2m0 10v1m0 38v2m0 31v1m0 265v1m0 69v1m0 106v3m0 34v2m1 -585v2m0 19v2m0 7v1m0 37v2m0 30v2m0 2v2m0 354v1m0 23v1m0 64v2m0 26v6m0 3v1m0 204v6m1 -798v1m0 23v1m0 32v1m0 9v2m0 9v1m0 20v2m0 6v3m0 233v1m0 115v2m0 2v2m0 18v2m0 18v1m0 48v1m0 20v5m0 10v2m0 164v17m1 -773v1m0 26v1m0 38v3m0 12v1m0 18v1m0 11v2m0 233v1m0 9v4m0 97v3m0 6v2m0 13v3m0 43v1m0 26v1m0 9v10m0 17v3m0 124v10m1 -701v1m0 34v3m0 16v1m0 16v1m0 14v3m0 38v1m0 192v3m0 3v3m0 4v9m0 83v5m0 11v2m0 9v2m0 45v1m0 28v2m0 4v3m0 30v2m0 95v1m1 -664v1m0 32v1m0 20v1m0 13v2m0 18v2m0 34v2m0 2v1m0 61v1m0 131v3m0 94v5m0 18v1m0 7v1m0 27v8m0 43v2m0 37v7m0 11v3m0 1v6m0 68v1m1 -610v1m0 11v1m0 22v2m0 29v3m0 65v1m0 227v2m0 24v2m0 3v2m0 27v1m0 8v3m0 86v2m0 5v4m0 18v16m0 125v8m1 -697v1m0 9v1m0 25v1m0 26v2m0 67v1m0 34v1m0 221v1m0 1v1m0 28v1m0 12v7m0 62v1m0 18v1m0 2v2m1 -525v1m0 7v1m0 27v2m0 21v3m0 11v1m0 56v1m0 287v1m0 103v1m0 86v1m1 -609v2m0 3v2m0 30v1m0 18v2m0 15v1m0 54v1m0 480v1m0 87v9m1 -704v1m0 1v1m0 49v2m0 70v2m0 185v1m0 184v1m0 165v1m1 -613v2m0 71v1m0 66v2m0 116v2m0 2v2m0 310v5m1 -689v1m0 1v2m0 25v2m0 1v2m0 74v2m0 23v1m0 47v2m0 65v2m0 117v1m0 6v4m0 291v1m1 -666v2m0 22v1m0 5v2m0 70v2m0 26v1m0 44v2m0 63v4m0 118v1m0 11v4m0 30v2m0 1v1m0 29v1m0 1v2m0 221v1m1 -665v3m0 17v2m0 8v1m0 61v2m0 4v2m0 72v1m0 62v3m0 120v2m0 16v2m0 25v2m0 5v1m0 27v1m0 4v2m1 -453v1m0 10v3m0 13v1m0 70v2m0 2v3m0 52v1m0 21v1m0 62v1m0 14v1m0 107v1m0 20v1m0 4v20m0 8v1m0 25v1m0 7v1m0 145v6m0 1v3m1 -610v1m0 14v1m0 11v1m0 69v2m0 40v1m0 3v5m0 5v5m0 2v1m0 17v2m0 61v2m0 16v1m0 105v1m0 23v3m0 29v1m0 33v1m0 19v1m0 55v2m1 -536v2m0 17v2m0 8v1m0 114v2m0 5v5m0 8v2m0 14v1m0 62v1m0 19v1m0 102v2m0 57v2m0 32v1m0 71v3m0 3v1m1 -544v6m0 21v2m0 5v1m0 137v1m0 11v2m0 61v2m0 21v1m0 100v1m0 61v1m0 32v1m0 68v2m0 7v1m0 141v2m1 -693v5m0 29v2m0 2v1m0 17v1m0 19v2m0 44v1m0 55v1m0 8v2m0 61v2m0 24v1m0 97v2m0 63v1m0 78v2m0 19v1m0 153v7m0 1v3m1 -712v8m0 36v1m0 20v1m0 16v2m0 47v1m0 55v1m0 6v1m0 61v2m0 27v2m0 93v2m0 66v1m0 79v2m0 13v4m1 -481v2m0 10v4m0 6v1m0 99v1m0 4v1m0 93v1m0 91v1m0 69v1m0 80v3m0 6v4m0 16v1m1 -492v1m0 4v5m0 111v1m0 1v2m0 95v1m0 88v2m0 71v1m0 13v1m0 68v2m0 2v2m0 21v1m1 -491v3m0 60v1m0 155v1m0 83v1m0 1v2m0 74v1m0 83v1m0 26v2m1 -473v2m0 22v1m0 18v1m0 25v1m0 91v2m0 198v2m0 29v1m0 80v6m1 -477v10m0 11v1m0 20v1m0 114v2m0 202v1m0 7v1m0 21v2m0 84v5m1 -472v3m0 4v3m0 23v1m0 112v1m0 41v1m0 163v1m0 5v1m0 24v2m0 34v1m0 52v2m0 102v19m1 -592v4m0 27v1m0 20v1m0 89v1m0 43v1m0 195v1m0 31v2m0 57v3m0 6v7m1 -457v1m0 18v1m0 89v1m0 45v1m0 195v1m0 29v1m0 62v6m0 7v2m0 36v8m1 -395v1m0 47v1m0 33v4m0 41v1m0 116v1m0 27v1m0 79v1m0 32v1m1 -388v2m0 11v2m0 36v1m0 29v3m0 4v3m0 35v3m0 2v1m0 115v1m1 -352v1m0 85v2m0 1v1m0 12v2m0 15v2m0 35v11m0 6v12m0 11v2m0 29v3m0 119v2m0 2v1m0 219v1m0 1v29m0 1v1m1 -605v1m0 81v3m0 4v2m0 7v3m0 52v2m0 11v3m0 1v1m0 26v1m0 26v2m0 120v2m0 111v1m0 28v1m0 12v9m0 10v1m0 1v7m1 -449v2m0 9v2m0 3v2m0 53v2m0 45v2m0 21v3m0 12v1m0 53v1m0 1v1m0 52v1m0 114v1m0 26v1m0 23v8m1 -663v2m0 44v1m0 173v4m0 13v1m0 1v1m0 54v1m0 49v1m0 17v3m0 16v1m0 49v3m0 3v2m0 49v1m0 9v1m0 106v1m0 24v1m0 43v7m0 1v5m1 -685v2m0 40v2m0 2v2m0 96v1m0 69v4m0 72v2m0 51v1m0 13v3m0 20v1m0 46v2m0 8v2m0 45v2m0 11v2m0 9v8m0 231v1m0 29v3m0 1v16m1 -795v1m0 36v3m0 6v1m0 96v1m0 66v2m0 74v2m0 54v1m0 10v2m0 24v1m0 43v2m0 56v1m0 15v2m0 3v4m0 9v1m0 230v1m1 -746v1m0 33v2m0 10v2m0 95v1m0 44v2m0 1v2m0 12v4m0 75v1m0 57v1m0 6v3m0 27v1m0 40v2m0 57v1m0 18v1m0 1v1m0 14v1m0 86v1m0 20v1m0 122v1m1 -746v2m0 29v2m0 15v7m0 6v2m0 80v1m0 41v2m0 5v2m0 6v4m0 57v1m0 20v1m0 59v1m0 2v3m0 31v1m0 36v3m0 38v1m0 18v2m0 37v1m0 86v1m0 18v1m0 124v1m1 -745v1m0 26v2m0 24v6m0 3v1m0 79v6m0 34v1m0 9v2m0 2v2m0 144v1m0 35v1m0 32v3m0 38v2m0 2v2m0 14v2m0 40v1m0 103v1m0 126v1m1 -745v2m0 13v2m0 1v2m0 3v3m0 36v1m0 76v2m0 7v1m0 31v1m0 13v1m0 183v1m0 14v9m0 6v2m0 39v2m0 6v2m0 11v1m0 43v1m0 101v1m1 -615v3m0 8v2m0 5v1m0 1v1m0 40v1m0 73v2m0 10v2m0 109v1m0 16v1m0 102v13m0 10v2m0 1v2m0 39v2m0 10v2m0 8v1m0 131v1m0 13v1m0 91v1m1 -703v1m0 1v6m0 51v1m0 71v1m0 15v13m0 96v1m0 14v1m0 128v1m0 29v2m0 8v2m0 14v2m0 4v2m0 133v12m0 145v10m0 1v5m1 -710v1m0 12v1m0 1v1m0 27v1m0 26v1m0 29v13m0 84v1m0 11v2m0 161v2m0 5v1m0 18v2m0 1v1m0 49v1m0 84v1m1 -536v2m0 8v2m0 3v2m0 22v2m0 2v2m0 22v2m0 128v1m0 8v2m0 165v2m0 1v2m0 73v1m0 82v1m1 -533v1m0 3v4m0 7v2m0 19v1m0 6v2m0 19v1m0 131v1m0 6v1m0 246v1m0 28v1m0 1v2m0 48v1m0 148v10m1 -688v2m0 13v2m0 16v1m0 9v1m0 17v1m0 64v1m0 73v1m0 273v3m0 4v3m0 44v1m1 -512v2m0 12v2m0 11v2m0 14v1m0 410v3m0 10v2m0 41v1m0 55v1m1 -565v1m0 9v2m0 15v2m0 11v1m0 390v1m0 3v3m0 11v3m0 15v3m0 37v1m1 -507v1m0 7v1m0 19v1m0 9v1m0 69v1m0 69v1m0 252v3m0 3v2m0 8v1m0 21v2m0 34v1m1 -505v2m0 3v2m0 21v2m0 5v2m0 71v1m0 329v2m0 3v2m0 25v4m0 29v1m0 110v1m1 -613v1m0 1v1m0 25v2m0 1v2m0 405v3m0 31v3m0 25v1m1 -26v2m0 171v6m1 -337v1m0 58v1m0 23v2m0 1v1m0 73v1m0 44v4m0 60v5m1 -273v2m0 57v1m0 21v1m0 4v2m0 19v1m0 53v3m0 16v1m0 184v4m1 -367v4m0 47v1m0 6v2m0 18v1m0 7v1m0 17v1m0 57v6m0 8v2m1 -174v4m0 52v1m0 15v2m0 9v2m0 14v1m0 64v4m0 2v2m1 -168v2m0 51v1m0 13v1m0 13v2m0 11v1m0 69v1m1 -383v1m0 26v1m0 74v1m0 100v1m0 16v5m0 34v1m0 12v2m0 10v1m0 16v1m0 9v1m0 22v1"/></g>
<g fill="#27405f"><path d="M293.0 53.1 L296.7 55.0 L299.4 50.3 L303.1 49.4 L307.8 52.2 L309.6 56.8 L313.3 62.3 L317.0 65.1 L316.1 67.9 L313.3 69.7 L314.2 75.3 L315.1 80.8 L317.0 86.4 L317.4 90.0 L315.1 86.4 L311.4 80.8 L309.2 75.3 L309.6 69.7 L306.8 64.2 L305.0 58.6 L302.2 53.1 L299.4 53.1 L297.6 56.8 L294.5 55.9Z"/><path d="M362.2 255.0 L366.9 252.2 L372.4 255.9 L377.9 259.6 L383.5 261.4 L389.0 267.0 L389.9 270.7 L385.3 268.8 L379.8 264.2 L374.2 261.4 L370.6 257.8 L365.9 255.9Z"/><path d="M606.7 280.9 L610.6 285.8 L613.6 281.8 L615.5 285.8 L620.5 286.8 L618.5 290.7 L613.6 293.3 L607.7 293.3 L607.3 287.8Z"/><path d="M598.4 300.6 L600.2 303.7 L601.4 307.4 L604.5 306.2 L607.6 304.3 L610.1 301.2 L612.5 298.8 L615.0 295.7 L616.2 292.6 L618.7 290.2 L621.8 287.7 L618.7 287.1 L617.4 284.6 L615.0 284.0 L614.0 286.5 L611.9 286.5 L611.3 284.0 L608.8 284.0 L608.2 285.8 L606.4 287.7 L607.6 291.4 L608.8 295.1 L607.0 298.2 L603.9 300.0 L601.4 299.4Z"/><path d="M432.9 371.0 L435.7 364.5 L439.4 360.8 L442.2 357.1 L445.0 359.9 L441.3 364.5 L438.5 370.0 L435.7 371.9Z"/><path d="M418.2 407.9 L420.0 411.6 L421.9 410.7 L420.9 415.3 L422.8 419.9 L425.6 423.2 L421.9 422.7 L419.1 417.1Z"/><path d="M418.2 414.0 L420.9 419.5 L423.7 421.4 L425.6 424.2 L424.6 428.8 L421.9 426.0 L420.0 421.4Z"/><path d="M520.7 496.2 L523.5 500.8 L525.3 506.4 L524.4 511.9 L526.2 517.4 L530.8 519.3 L527.1 523.0 L529.0 528.5 L527.1 533.1 L523.5 530.4 L522.5 526.7 L519.8 524.8 L521.6 521.1 L519.8 514.7 L520.7 508.2 L521.6 502.7Z"/><path d="M534.5 595.9 L537.3 600.5 L537.3 605.1 L542.8 607.0 L547.5 604.2 L549.3 597.7 L551.7 597.7 L551.2 604.2 L557.6 604.2 L557.6 607.0 L550.2 607.9 L544.7 610.7 L541.9 614.3 L536.4 611.6 L535.1 607.0Z"/><path d="M115.9 658.0 L116.8 651.5 L121.4 646.9 L127.0 646.5 L130.7 650.6 L128.8 656.1 L126.1 660.7 L120.5 662.0Z"/><path d="M36.5 674.6 L41.1 676.4 L44.8 681.1 L42.9 682.9 L39.3 681.1 L37.4 677.4Z"/><path d="M53.1 678.3 L55.9 683.8 L58.6 687.5 L59.6 693.1 L63.3 695.8 L71.6 698.2 L77.1 702.3 L75.3 705.1 L67.9 703.2 L58.6 698.2 L55.9 694.9 L53.1 689.4 L51.3 685.7Z"/><path d="M138.3 690.9 L142.7 688.9 L145.7 690.9 L145.0 693.8 L147.9 696.0 L148.7 699.7 L145.7 702.7 L141.3 704.2 L139.8 707.9 L136.8 707.1 L134.6 703.4 L136.1 700.5 L140.5 699.0 L142.0 696.0 L139.1 693.8Z"/><path d="M777.7 721.6 L779.2 727.6 L785.2 735.1 L789.7 739.6 L789.0 747.1 L785.2 748.6 L781.5 742.6 L779.2 735.1 L777.7 729.1Z"/><path d="M763.4 785.0 L767.2 783.2 L771.7 783.9 L772.4 787.7 L764.2 787.7Z"/></g>
<path fill="#004264" d="M0.0 697.8 L0.1 697.8 L5.4 697.4 L8.8 695.0 L13.4 692.8 L18.9 693.3 L22.1 694.3 L24.5 696.8 L23.2 699.8 L21.3 702.4 L25.4 701.6 L31.9 702.4 L37.4 699.8 L41.1 698.3 L42.4 700.2 L40.2 702.4 L39.8 709.4 L42.4 710.3 L44.8 709.4 L45.7 717.7 L49.4 719.0 L53.5 717.9 L55.9 720.9 L60.5 722.0 L64.2 720.1 L66.4 723.3 L65.7 726.4 L69.3 727.5 L70.1 731.6 L67.9 733.8 L63.3 735.3 L60.9 737.5 L62.7 740.8 L66.4 742.3 L69.7 744.1 L72.5 740.8 L70.6 737.1 L73.8 736.2 L77.1 738.0 L80.8 735.3 L85.4 736.7 L90.0 737.5 L92.8 740.8 L97.4 742.3 L100.2 745.4 L98.9 748.2 L102.0 751.5 L104.8 746.3 L108.5 740.8 L115.9 737.1 L123.3 735.3 L130.7 737.5 L139.9 742.6 L141.7 750.0 L142.0 744.0 L143.5 735.9 L144.2 722.6 L143.5 716.0 L146.4 710.8 L149.4 706.4 L150.9 709.3 L153.1 716.0 L159.0 721.1 L166.4 724.8 L170.8 729.3 L176.0 734.4 L178.9 739.6 L185.6 737.4 L191.5 738.1 L197.4 740.4 L201.8 744.0 L206.3 747.7 L210.7 752.2 L222.5 756.6 L234.3 752.2 L232.1 747.7 L226.9 744.8 L224.0 740.4 L221.0 735.2 L216.6 737.4 L210.7 735.2 L203.3 733.0 L197.4 732.2 L191.5 734.4 L188.5 730.0 L182.6 724.8 L178.9 724.1 L176.7 712.3 L176.0 710.1 L181.1 707.9 L182.6 703.4 L187.1 699.0 L186.3 696.0 L190.0 696.0 L195.9 691.6 L197.4 685.7 L200.4 682.7 L198.1 678.3 L199.6 675.1 L196.7 676.1 L193.7 679.1 L192.2 683.5 L190.8 687.2 L187.1 688.9 L183.4 687.9 L181.1 685.0 L178.9 682.0 L176.7 683.5 L173.0 682.4 L170.8 679.1 L171.5 676.1 L174.5 673.9 L179.7 673.9 L182.6 670.9 L185.6 667.2 L188.5 664.3 L190.0 662.1 L193.0 660.6 L197.4 661.3 L201.8 659.1 L204.0 655.4 L207.7 653.2 L210.7 648.8 L208.5 648.0 L207.0 645.8 L210.7 644.3 L214.4 645.1 L215.1 648.0 L221.0 646.6 L226.9 644.3 L234.3 640.6 L234.3 639.6 L243.9 639.6 L244.0 639.8 L248.4 642.0 L252.1 645.0 L255.1 646.9 L258.8 646.0 L262.5 643.5 L263.9 642.7 L266.2 645.0 L269.8 647.2 L274.3 648.4 L275.8 645.7 L279.5 643.5 L283.1 641.3 L286.8 642.4 L289.8 645.0 L292.0 646.0 L293.5 648.7 L296.4 648.9 L297.9 646.9 L299.8 645.7 L300.9 638.3 L301.9 630.9 L300.9 625.8 L298.9 624.3 L300.9 622.8 L303.1 621.3 L304.9 617.6 L306.8 615.9 L309.0 617.3 L313.4 618.4 L314.9 621.3 L315.6 628.0 L314.2 633.9 L315.6 638.3 L318.6 642.7 L320.8 641.3 L322.3 645.0 L324.5 648.7 L327.5 651.6 L329.4 652.3 L328.5 654.3 L323.8 655.4 L317.9 655.7 L313.4 654.6 L309.0 656.3 L306.8 657.5 L307.5 658.7 L313.4 657.2 L320.8 657.2 L329.7 656.3 L338.5 654.3 L347.4 651.9 L356.3 649.4 L362.2 647.5 L366.6 646.9 L376.9 644.5 L384.3 643.0 L391.7 642.0 L397.6 641.3 L404.3 641.8 L410.2 642.1 L420.6 642.7 L430.9 644.2 L438.3 646.1 L447.2 649.5 L456.0 652.7 L463.4 656.4 L470.8 660.9 L476.7 665.3 L482.6 669.7 L488.5 674.6 L494.4 679.3 L499.6 682.3 L500.6 688.2 L500.1 694.1 L501.5 700.0 L504.0 705.2 L506.0 707.1 L509.2 705.9 L512.2 705.9 L519.6 704.4 L525.5 705.9 L529.9 703.0 L533.6 700.0 L534.0 700.5 L537.3 697.2 L541.5 694.7 L539.8 698.8 L541.5 703.0 L547.3 698.8 L553.9 693.9 L560.6 688.9 L567.2 684.7 L572.2 683.6 L573.9 678.9 L578.0 678.9 L577.2 674.7 L579.7 671.4 L583.9 670.6 L587.2 668.9 L591.3 667.3 L593.0 669.8 L597.2 668.9 L602.1 668.6 L606.3 668.1 L608.0 671.4 L612.1 674.7 L617.1 678.1 L622.1 678.9 L626.2 683.1 L631.2 685.5 L633.7 689.7 L636.2 693.9 L637.9 698.8 L642.0 703.0 L648.7 706.3 L651.2 708.0 L650.3 713.8 L651.2 719.6 L653.7 722.1 L657.0 723.8 L661.1 727.9 L664.5 731.3 L667.0 735.4 L671.1 738.7 L674.4 743.7 L677.0 747.1 L681.5 750.1 L689.0 750.9 L695.0 753.1 L698.0 757.6 L698.8 763.7 L701.8 771.2 L706.3 776.4 L707.8 780.2 L706.3 786.2 L706.3 801.2 L706.3 800.0 L0.0 800.0Z"/>
<path fill="#004264" stroke="#000" stroke-width="0.9" d="M362.2 647.5 L364.4 644.2 L368.1 642.0 L371.0 638.3 L372.5 632.4 L370.3 628.7 L369.6 625.8 L371.8 626.5 L374.0 630.2 L376.2 629.5 L377.7 632.4 L376.9 636.8 L379.2 635.4 L380.6 629.5 L381.4 624.3 L383.6 625.8 L382.8 630.9 L382.1 633.9 L386.5 636.8 L391.7 637.6 L392.4 638.3 L385.8 639.1 L381.4 640.5 L376.9 642.7 L371.0 645.0 L365.1 647.2ZM337.4 645.7 L340.0 645.4 L339.7 649.4 L341.5 650.1 L343.3 645.7 L345.9 645.0 L346.7 647.9 L348.9 645.7 L351.1 642.0 L353.3 639.8 L351.8 637.6 L354.0 636.5 L357.0 637.6 L356.3 640.1 L353.3 642.0 L351.8 645.7 L349.6 648.7 L345.9 651.3 L341.5 652.3 L337.8 651.9ZM412.5 638.3 L413.9 635.8 L416.2 637.2 L420.6 634.3 L421.3 631.3 L423.5 631.8 L425.0 633.5 L428.7 637.2 L431.7 635.8 L436.1 634.3 L441.3 635.0 L442.7 632.8 L445.0 635.0 L447.2 635.8 L448.9 639.5 L449.4 642.1 L446.4 642.7 L443.5 640.2 L439.8 638.7 L436.8 640.9 L433.1 642.1 L430.9 640.9 L426.5 641.7 L422.1 640.9 L417.6 641.7 L413.9 640.9ZM467.9 649.5 L469.6 652.7 L473.8 651.3 L475.2 648.3 L476.7 652.0 L479.7 654.2 L484.1 652.0 L487.8 649.8 L488.5 646.1 L491.5 646.8 L493.0 648.3 L490.0 649.8 L488.5 653.5 L485.6 655.0 L481.1 656.4 L479.7 659.4 L478.2 661.6 L480.4 663.8 L484.1 664.6 L488.5 666.0 L492.2 667.5 L495.9 670.5 L498.1 673.4 L499.6 671.2 L502.6 672.7 L501.8 674.9 L498.1 676.1 L494.4 676.4 L495.9 679.3 L493.0 677.9 L488.5 673.4 L484.1 669.0 L479.7 666.0 L476.7 663.1 L474.5 658.7 L472.3 656.4 L469.3 655.0ZM502.6 688.2 L501.1 692.6 L501.5 698.5 L504.0 704.4 L506.3 706.2 L507.7 704.4 L508.5 700.0 L508.0 694.1 L506.3 689.7 L504.0 687.5ZM800.5 565.0 L797.2 569.5 L795.4 589.4 L797.2 607.2 L795.4 627.1 L797.2 644.9 L800.5 648.2Z"/>
<path fill="#5c4f4a" stroke="#000" stroke-width="0.9" d="M7.9 713.1 L18.0 709.4 L28.2 714.0 L33.7 716.8 L29.1 719.6 L28.2 723.8 L23.5 723.3 L16.2 718.6 L10.6 715.9Z"/>
<path stroke="#000" stroke-width="3.6" d="M783.7 684.0 L786.0 690.0 L789.7 697.5 L786.7 702.0 L782.2 703.5 L784.5 710.3 L779.2 713.3 L777.7 718.6 L778.0 724.6M779.2 648.6 L778.2 654.5 L781.1 661.4 L776.2 666.4 L779.2 672.3 L783.1 680.2 L786.1 688.0 L789.0 697.9 L785.1 703.8 L783.1 713.3"/>
<path stroke="#004264" stroke-width="2.2" d="M783.7 684.0 L786.0 690.0 L789.7 697.5 L786.7 702.0 L782.2 703.5 L784.5 710.3 L779.2 713.3 L777.7 718.6 L778.0 724.6M779.2 648.6 L778.2 654.5 L781.1 661.4 L776.2 666.4 L779.2 672.3 L783.1 680.2 L786.1 688.0 L789.0 697.9 L785.1 703.8 L783.1 713.3"/>
<g shape-rendering="crispEdges" stroke="#7e6a0c" stroke-width="1" ><path transform="translate(0,0.5)" d="M0 0m584 26h2m4 6h2m0 1h3m-142 12h2m-4 1h2m-156 1h6m145 0h3m-160 1h6m6 0h2m141 0h2m-159 1h2m152 0h3m-140 1h2m132 0h3m-180 1h2m172 0h3m-175 1h3m17 0h2m22 0h2m123 0h3m-169 1h3m160 0h3m-163 1h13m28 0h2m115 0h2m-115 3h2m1 2h2m-113 1h2m-5 1h3m-5 1h2m118 0h2m-126 1h4m-7 1h3m127 0h2m-134 1h3m601 0h2m-5 1h3m-468 1h2m461 0h2m-5 1h3m-460 1h2m452 0h3m-6 1h3m-7 1h4m-447 1h2m437 0h4m-8 1h4m-8 1h4m-432 1h2m424 0h2m-426 1h2m420 0h2m-422 1h2m415 0h3m-5 1h2m-414 1h2m408 0h2m-410 1h2m404 0h2m-4 1h2m-403 1h2m397 0h2m-399 1h2m393 0h2m-4 1h2m-4 1h2m-4 1h2m-4 1h2m-4 1h2m-5 2h2m-350 3h9m335 0h2m-337 1h4m-16 1h2m14 0h5m323 0h2m-365 1h2m38 0h6m0 1h2m179 0h2m131 0h2m-347 1h2m31 0h3m-47 1h2m45 0h2m172 0h2m-174 1h3m300 0h2m-302 1h2m-50 1h4m46 0h2m161 0h2m130 0h2m-346 1h2m0 1h2m337 0h2m-346 1h2m340 0h2m-336 1h2m329 1h2m-4 1h2m-327 1h2m321 0h2m-4 1h2m-320 1h2m313 0h3m-316 1h2m308 0h3m-311 1h2m303 0h3m-307 1h3m299 0h2m-4 1h2m-298 1h2m292 0h2m-4 1h2m-4 1h2m-4 1h2m-4 1h2m-91 1h2m85 0h2m-4 1h2m-86 1h2m80 0h2m-279 1h2m273 0h2m-244 1h9m231 0h2m-276 1h3m22 0h9m9 0h4m225 0h2m-253 1h4m22 0h4m7 0h12m200 0h2m-270 1h2m14 0h3m30 0h7m12 0h7m191 0h2m-275 1h3m4 0h2m10 0h4m248 0h2m-275 1h2m7 0h12m68 0h30m152 0h2m-192 1h8m180 0h2m-261 1h2m255 0h2m-259 1h2m109 0h2m-129 1h4m11 0h4m109 0h2m139 0h3m-283 1h5m6 0h2m16 0h2m109 0h2m137 0h2m-283 1h2m5 0h6m131 0h2m-148 1h2m146 0h4m128 0h2m-284 1h2m152 0h4m-160 1h2m158 0h3m118 0h2m-286 1h3m-11 1h9m159 0h2m82 0h7m30 0h2m11 0h2m-307 1h3m170 0h2m78 0h2m7 0h9m18 0h3m-295 1h3m175 0h2m94 0h7m6 0h5m-295 1h3m180 0h2m71 0h2m26 0h6m-292 1h2m185 0h2m-191 1h2m189 0h2m64 0h2m-261 1h2m193 0h2m0 1h2m57 0h2m-59 1h2m-123 1h2m121 0h2m50 0h2m-263 1h2m36 0h2m48 0h3m120 0h2m9 0h10m29 0h2m-265 1h2m89 0h2m122 0h9m10 0h5m20 0h4m-272 1h9m87 0h4m148 0h5m8 0h7m-278 1h10m94 0h2m157 0h8m-275 1h4m102 0h2m-113 1h5m69 0h2m33 0h2m-115 1h4m106 0h3m-117 1h4m81 0h12m13 0h4m-118 1h4m97 0h13m-118 1h4m-8 1h4m107 0h2m-117 1h4m-8 1h4m-8 1h4m-8 1h4m-7 1h3m521 0h7m-534 1h3m516 0h8m7 0h2m-538 1h2m513 0h6m17 0h2m-543 1h3m510 0h5m25 0h2m-548 1h3m509 0h4m-519 1h3m509 0h3m-518 1h3m141 0h2m366 0h3m-518 1h3m144 0h2m364 0h2m-518 1h3m510 0h3m-518 1h2m507 0h6m-518 1h3m500 0h9m-515 1h3m496 0h7m-509 1h3m495 0h4m-505 1h3m494 0h4m-505 1h4m493 0h4m-504 1h3m218 0h2m271 0h6m-502 1h2m467 0h3m18 0h6m-270 1h2m244 0h6m6 0h6m-262 1h2m248 0h6m-253 2h2m-242 6h2m-8 5h2m-4 1h2m-5 2h2m-4 1h2m-5 2h2m-4 1h2m-5 2h2m540 2h5m-551 1h2m549 0h6m-561 3h2m-4 1h2m-4 1h2m-16 1h5m7 0h2m-19 1h5m10 0h2m625 0h2m-631 1h2m624 0h3m-669 1h28m10 0h2m624 0h2m-670 1h4m404 0h2m255 0h3m-672 1h4m662 0h3m-671 1h2m409 0h2m253 0h2m-670 1h2m409 0h2m252 0h3m-670 1h2m662 0h3m-669 1h2m410 0h2m249 0h3m-668 1h2m43 0h12m606 0h2m-667 1h2m367 0h2m42 0h2m247 0h3m-667 1h2m371 0h3m37 0h2m247 0h2m-666 1h2m376 0h2m282 0h2m-666 1h2m380 0h3m20 0h6m3 0h2m246 0h2m-668 1h4m385 0h3m13 0h4m6 0h3m246 0h2m-670 1h4m392 0h3m8 0h2m257 0h2m-671 1h3m399 0h3m3 0h2m257 0h2m-673 1h4m405 0h3m257 0h2m-674 1h3m666 0h3m-675 1h3m668 0h2m-675 1h2m669 0h2m-676 1h3m669 0h2m-677 1h3m-5 1h2m672 0h2m-679 1h3m672 0h2m-680 1h3m-6 1h3m675 0h2m-683 1h3m676 0h2m-685 1h4m-7 1h3m680 0h2m-688 1h3m681 0h2m-689 1h3m682 0h2m-695 1h8m681 0h4m-705 1h12m685 0h4m-717 1h16m694 0h3m-724 1h11m727 6h2m-26 4h2m28 1h2m2 3h2m-42 1h2m40 0h2m-47 2h2m46 0h2m-53 1h3m50 0h2m-58 1h3m55 0h2m-63 1h3m-6 1h3m64 0h2m-72 1h3m69 0h3m-600 1h2m222 0h2m145 0h2m149 0h6m67 0h3m-374 1h2m88 0h2m55 0h2m145 0h4m-298 1h2m145 0h2m142 0h3m83 0h2m-90 1h2m-4 1h2m-4 1h2m-4 1h2m-4 1h2m100 0h2m-106 1h2m-281 1h2m83 0h2m190 0h2m-5 2h2m-88 2h2m-3 1h2m81 0h2m-85 1h2m78 1h2m124 0h2m-1 1h2m-132 1h2m131 1h2m-136 1h2m-5 2h2m139 0h2m-145 1h2m143 0h2m-150 2h2m149 0h2m0 1h2m-158 1h2m-4 1h2m-5 2h2m-5 2h2m-4 1h2m-4 1h2m-4 1h2m-4 1h2m-5 1h3m-72 1h2m65 0h2m-67 1h4m57 0h4m-61 1h2m51 0h4m-8 1h4m-7 1h3m-44 4h2m-174 4h2m202 1h2m-205 1h2m47 0h2m-51 1h2m198 0h2m-202 1h2m44 0h2m134 0h8m8 0h2m-200 1h2m42 0h2m134 0h2m8 0h3m3 0h2m-5 1h3m-155 1h2m150 0h2m-17 1h2m-142 1h2m138 0h2m9 1h2m-11 1h2m-1 1h3m-1 4h2m-20 1h12m6 0h2m-24 1h4m12 0h2m4 0h2m-26 1h2m18 0h3m-25 1h2m23 0h9m-49 1h8m41 0h2m-57 1h6m8 0h6m37 0h3m-64 1h4m56 0h16m-91 1h5m7 0h3m50 0h2m24 0h2m181 0h2m-282 1h6m4 0h8m52 0h2m9 0h2m195 0h2m-283 1h3m79 0h2m195 0h2m-285 1h4m80 0h2m22 0h2m170 0h3m-286 1h3m81 0h3m194 0h2m-286 1h3m83 0h3m28 0h2m163 0h2m-290 1h6m79 0h2m3 0h2m33 0h2m11 0h3m144 0h3m-296 1h8m87 0h3m37 0h4m3 0h4m3 0h4m138 0h2m-335 1h9m25 0h8m139 0h3m11 0h3m133 0h2m-343 1h10m9 0h9m8 0h8m164 0h4m126 0h3m-349 1h8m28 0h8m105 0h2m69 0h4m120 0h2m-357 1h3m1 0h7m167 0h2m55 0h4m114 0h2m-359 1h8m174 0h2m59 0h6m16 0h13m77 0h2m-361 1h4m249 0h16m13 0h4m71 0h2m-363 1h4m163 0h2m121 0h4m65 0h2m-363 1h2m294 0h4m0 1h11m18 0h13m16 0h2m-49 1h18m13 0h9m5 0h2m-7 1h5m-350 8h2m-4 1h2m-4 1h2m-4 1h2m-12 1h2m4 0h4m-8 1h4m-6 1h2m-4 1h2m164 1h2m-2 1h2m49 0h2m-223 1h2m-5 2h2m-6 3h2m-4 1h2m-4 1h2m-4 1h2m-6 1h4m-18 1h4m6 0h4m-17 1h3m4 0h6m-16 1h3m-5 1h2m-4 1h2m272 6h2m-77 3h2m77 0h2m-85 3h2m86 1h2m-300 3h2m85 0h2m116 0h2m93 0h4m-464 1h3m156 0h2m203 0h2m95 0h2m3 2h2m-215 6h2m102 0h2m107 9h2m-2 1h2m12 0h2m1 3h2m3 4h2m0 1h2m-149 2h2m148 0h2m-154 1h2m152 0h2m-158 1h2m-4 1h2m159 0h2m0 1h2m-168 1h2m166 0h2m0 1h3m-176 1h2m174 0h3m0 1h2m-184 1h2m182 0h3m-189 1h2m187 0h3m-678 1h6m478 0h2m192 0h3m-675 1h10m466 0h2m197 0h3m-668 1h9m455 0h2m202 0h4m-663 1h7m446 0h2m208 0h4m-660 1h7m435 0h4m214 0h4m-657 1h7m232 0h2m190 0h4m222 0h4m-654 1h6m224 0h2m188 0h4m230 0h8m-656 1h6m216 0h2m187 0h3m242 0h12m-662 1h5m207 0h4m187 0h2m257 0h9m-666 1h6m195 0h6m189 0h2m268 0h7m-667 1h4m188 0h3m193 0h2m277 0h7m-670 1h2m184 0h2m192 0h4m286 0h7m-675 1h2m67 0h2m111 0h2m174 0h6m8 0h6m297 0h5m-678 1h2m26 0h26m124 0h2m182 0h8m308 0h2m-678 1h2m16 0h8m26 0h2m96 0h26m502 0h2m-678 1h16m94 0h8m4 0h26m530 0h2m-627 1h2m50 0h5m8 0h6m556 0h2m-582 1h6m576 0h3m-629 1h2m32 0h10m585 0h2m-629 1h4m12 0h16m597 0h2m-627 1h12m615 0h2m0 1h3m0 1h3m0 1h3m0 1h4m0 1h3m0 1h3m0 1h2m2 3h2m-571 40h2m-3 1h2m166 13h2m-10 9h2m-3 1h2m408 8h2m-423 1h2m419 0h2m-588 6h2m153 3h2m-8 5h2m-5 2h2m-6 3h2m-5 2h2m-5 2h2m-4 1h2m-5 2h2m-4 1h2m-136 1h2m129 1h2m-4 1h2m-4 1h2m-5 1h3m-6 1h3m-6 1h3m-6 1h3m-6 1h3m-6 1h3m-5 1h2m-5 1h3m-5 1h2m162 12h15m20 0h7m-78 1h6m28 0h2m15 0h20m7 0h2m-88 1h8m6 0h2m24 0h2m46 0h2m-102 1h12m16 0h2m20 0h2m50 0h2m-112 1h8m30 0h2m16 0h2m54 0h2m-117 1h3m40 0h7m7 0h2m58 0h3m-124 1h4m50 0h7m63 0h2m-218 1h3m86 0h3m126 0h2m-217 1h5m79 0h2m131 0h2m-214 1h6m208 0h2m-210 1h8m64 0h2m136 0h4m-233 1h2m25 0h5m201 0h6m-207 1h3m53 0h2m149 0h4m-208 1h2m49 0h2m155 0h3m-209 1h3m206 0h2m-208 1h4m39 0h2m163 0h3m-207 1h6m201 0h2m-203 1h3m27 0h2m171 0h2m-263 1h2m59 0h2m200 0h2m-180 1h2m178 0h2m-203 1h2m17 0h2m182 0h2m-203 1h2m201 0h3m-277 1h2m71 0h6m6 0h2m190 0h3m-385 1h2m100 0h3m79 0h6m195 0h4m18 0h5m-492 1h38m42 0h2m97 0h3m287 0h3m6 0h9m3 0h5m79 0h2m-587 1h11m38 0h2m135 0h4m293 0h6m17 0h9m-518 1h3m51 0h3m128 0h4m329 0h6m67 0h2m-595 1h2m57 0h2m85 0h9m28 0h4m339 0h7m-560 1h8m16 0h3m61 0h3m74 0h8m9 0h8m11 0h9m350 0h15m48 0h2m-629 1h4m8 0h6m8 0h2m67 0h2m66 0h6m25 0h11m374 0h14m-597 1h4m97 0h3m59 0h4m430 0h2m35 0h2m-640 1h4m23 0h2m79 0h2m54 0h3m436 0h3m-609 1h3m110 0h2m49 0h3m442 0h2m-613 1h2m115 0h2m43 0h4m447 0h3m-619 1h3m36 0h2m81 0h2m39 0h2m454 0h2m-624 1h3m124 0h2m495 0h5m-632 1h3m129 0h2m35 0h2m461 0h7m-642 1h3m134 0h3m28 0h4m470 0h5m-649 1h2m140 0h4m20 0h4m479 0h4m-656 1h3m146 0h4m8 0h8m487 0h3m91 0h6m-759 1h3m152 0h9m498 0h4m77 0h10m-756 1h3m666 0h3m64 0h10m-749 1h3m672 0h2m56 0h6m-741 1h2m677 0h2m50 0h4m-738 1h3m681 0h3m43 0h4m-741 1h7m76 0h2m609 0h2m9 0h12m17 0h3m-742 1h5m695 0h10m12 0h8m5 0h4m-9 1h5m-641 3h2m680 1h2m6 0h2m-689 1h2m679 0h4m2 0h2m-687 1h2m681 0h2m-683 1h2m0 1h2m0 1h2m0 1h9m0 1h8m0 1h2m0 1h2m0 1h2m0 1h2m0 1h2m0 1h2m0 1h2m0 1h4m0 1h6m0 1h4m575 36h2"/><path transform="translate(0.5,0)" d="M0 0m0 609v1m1 0v1m1 0v1m1 0v2m1 0v1m1 0v2m1 0v4m0 8v12m1 -20v8m0 12v7m1 0v2m1 0v3m1 0v1m64 -15v1m3 1v1m1 0v1m3 1v1m1 0v1m1 0v2m1 0v2m1 0v2m1 0v1m1 0v1m3 1v1m1 0v1m1 0v1m1 0v1m3 1v1m24 -66v27m1 -40v13m0 27v4m1 -50v6m0 44v4m1 -60v6m0 54v3m1 -97v34m0 64v2m1 -108v8m0 100v2m1 -117v7m0 110v3m0 24v3m1 -154v7m0 120v2m0 17v5m1 -156v5m0 129v2m0 10v5m1 -154v3m0 136v2m0 4v4m1 -153v4m0 141v4m1 -152v3m1 -5v2m1 -30v1m0 25v2m1 -4v2m1 -4v2m1 -22v1m0 17v2m1 -4v2m1 -4v2m1 -290v3m0 284v1m1 -290v2m0 3v5m0 266v2m0 10v1m1 -290v1m0 10v4m0 260v2m0 10v2m1 -290v1m0 15v2m0 257v1m0 11v1m1 -290v2m0 18v3m0 253v1m0 11v1m1 -290v1m0 23v2m0 262v1m1 -290v1m0 26v2m0 258v2m1 -291v2m0 276v1m0 9v1m1 -291v2m0 277v1m1 -281v1m0 277v2m1 -282v2m0 275v3m1 -282v2m0 273v4m1 -280v1m0 272v3m1 -278v2m0 270v3m0 226v1m1 -504v2m0 268v4m0 230v1m1 -506v1m0 45v2m0 220v3m0 235v1m1 -509v2m0 45v1m0 2v2m0 199v1m0 14v4m0 237v1m1 -510v2m0 45v1m0 6v1m0 196v2m0 10v5m0 240v1m1 -511v2m0 250v1m0 4v8m0 244v1m1 -511v1m0 58v2m0 190v2m0 1v4m0 251v1m1 -512v2m0 61v5m0 183v2m0 256v2m1 -513v2m0 68v6m0 175v1m0 258v1m1 -512v1m0 76v7m0 166v2m0 258v1m1 -513v2m0 84v9m0 155v2m0 259v1m1 -514v2m0 95v7m0 146v2m0 4v1m0 255v1m1 -514v1m0 104v6m0 138v2m0 261v1m1 -515v2m0 111v6m0 26v8m0 96v2m0 262v1m1 -516v2m0 61v1m0 58v5m0 10v10m0 8v4m0 91v1m0 263v1m1 -518v3m0 64v1m0 6v1m0 55v10m0 22v4m0 85v2m0 263v1m1 -521v4m0 69v1m0 2v2m0 92v4m0 80v1m0 264v1m1 -523v3m0 74v2m0 98v5m0 73v2m0 263v2m1 -524v2m0 182v6m0 65v2m0 264v1m1 -523v1m0 190v5m0 58v2m0 265v1m1 -524v2m0 196v6m0 49v3m0 266v1m1 -525v2m0 204v5m0 41v3m0 268v1m1 -525v1m0 211v4m0 35v2m0 270v1m1 -526v2m0 216v5m0 27v3m0 270v2m1 -658v1m0 130v2m0 223v4m0 12v11m0 271v2m1 -655v1m0 126v3m0 229v12m0 279v3m1 -652v2m0 120v4m0 518v2m0 2v1m1 -647v1m0 116v3m0 518v4m1 -641v1m0 110v5m0 519v2m1 -636v1m0 103v6m0 95v1m0 425v3m1 -633v1m0 98v4m0 100v1m0 423v3m1 -629v2m0 95v1m1 -96v1m0 92v2m0 525v2m0 2v1m0 16v1m1 -641v1m0 90v1m0 105v1m0 419v2m0 20v1m1 -639v2m0 87v1m0 105v1m0 418v2m1 -614v2m0 83v2m0 523v2m1 -610v3m0 79v1m0 523v2m1 -605v2m0 75v2m0 107v1m0 414v2m1 -601v3m0 70v2m0 522v2m1 -596v2m0 65v3m0 522v2m1 -592v4m0 58v3m0 523v2m1 -586v4m0 52v2m0 523v3m1 -580v31m0 1v20m0 116v1m0 406v2m1 -5v3m1 -5v2m1 -5v3m1 -5v2m1 -402v1m0 397v2m1 -5v3m1 -5v2m1 -5v3m1 -8v1m0 2v2m1 -393v1m0 384v3m0 2v1m1 -392v1m0 382v3m1 -387v1m0 380v3m1 -385v1m0 378v3m1 -15v3m0 6v3m1 -19v7m0 4v5m1 -510v1m0 131v1m0 355v6m1 -496v2m0 131v1m0 352v4m1 -491v1m0 132v1m0 352v1m1 -488v1m0 132v1m0 351v2m1 -489v2m0 132v1m0 351v1m1 -488v1m0 132v2m0 351v1m1 -488v1m0 131v2m0 352v1m1 -489v2m0 485v1m1 -489v1m0 485v2m1 -492v4m0 485v1m1 -496v6m0 488v1m1 -504v9m0 493v1m1 -514v11m0 500v2m1 -519v6m0 510v1m1 -518v1m0 515v1m1 -519v2m0 515v1m1 -519v1m1 -2v1m0 515v1m1 -518v1m0 515v1m1 -518v1m0 510v6m1 -519v2m0 505v6m1 -514v1m0 505v2m1 -509v1m0 505v1m1 -508v1m0 505v1m1 -506v1m0 502v2m1 -504v1m0 500v1m1 -501v2m0 497v1m1 -498v1m0 494v2m1 -496v1m0 492v1m1 -493v1m0 490v1m1 -491v1m0 487v2m1 -489v2m0 483v2m1 -485v1m0 478v4m1 -482v1m0 473v4m1 -477v2m0 467v4m1 -471v1m0 462v4m1 -466v2m0 458v2m1 -460v2m0 455v1m1 -456v1m0 453v1m1 -454v2m0 450v1m1 -451v2m0 447v1m1 -448v2m0 444v1m1 -445v2m0 441v1m1 -442v2m0 438v1m1 -439v2m1 0v2m1 0v5m1 0v4m1 0v1m1 0v2m1 0v1m1 0v1m1 0v2m18 407v1m1 -2v1m1 -2v1m1 -2v1m1 -403v1m0 400v1m1 -2v1m1 -2v1m1 -402v1m0 399v1m1 -402v1m0 399v1m1 -2v1m1 -3v2m0 181v1m1 -185v1m0 182v1m1 -186v2m0 182v1m1 -186v1m1 -2v1m1 -3v2m0 184v1m1 -188v1m0 185v1m1 -189v2m0 185v1m1 -189v1m0 186v1m1 -189v1m0 181v4m0 1v1m1 -189v1m0 174v8m0 4v1m1 -189v1m0 170v5m1 -177v1m0 169v2m1 -173v1m0 168v2m0 17v1m1 -190v1m0 167v2m0 18v1m1 -570v1m0 379v1m0 187v1m1 -190v1m1 -2v1m1 -377v1m0 374v1m1 -2v1m1 -2v1m1 -372v1m0 369v1m1 -2v1m1 -2v1m1 -367v1m0 364v1m1 -365v1m0 362v1m1 -2v1m1 -2v1m1 -360v1m0 357v1m3 -357v1m0 352v1m1 -353v1m0 350v1m1 -2v1m1 -2v1m1 -348v1m0 345v1m1 -2v1m1 -2v1m1 -343v1m0 340v1m1 -341v1m0 338v1m1 -2v1m1 -2v1m1 -336v1m0 333v1m1 -2v1m1 -252v1m0 3v1m0 244v2m1 -331v1m0 82v1m1 -83v1m0 80v1m0 432v1m1 -436v2m1 -3v1m1 -77v2m0 73v1m2 433v1m1 -189v1m4 -317v1m0 500v1m3 -3v1m2 -497v1m1 493v1m1 -2v1m3 -491v1m0 487v1m0 55v1m1 -544v1m1 0v2m1 0v1m0 39v4m0 438v1m1 -482v1m0 36v2m0 4v4m0 433v1m1 -480v2m0 32v2m0 10v2m0 430v1m1 -477v1m0 29v2m0 14v2m0 427v1m1 -475v1m0 26v2m1 -28v1m0 23v2m0 22v2m1 -49v1m0 20v2m0 26v2m0 419v1m1 -452v2m0 30v1m0 417v1m1 -453v2m0 33v2m0 414v1m1 -467v1m0 12v2m0 37v1m0 412v1m1 -465v1m0 9v2m0 40v1m0 410v1m1 -455v1m0 452v1m1 -455v1m0 281v1m0 170v1m1 -460v1m0 51v1m0 234v1m0 170v1m1 -458v1m0 51v1m1 -50v1m0 49v1m0 408v1m1 -409v1m0 229v1m0 170v1m0 4v2m0 67v1m1 -76v1m0 4v1m1 -7v1m0 3v2m1 -459v1m0 55v1m0 225v1m0 169v1m0 3v1m1 -458v1m0 4v1m0 276v1m0 173v1m1 -458v1m0 454v2m0 71v1m1 -249v1m0 173v1m1 -447v1m0 443v2m1 -456v1m0 10v1m0 268v1m0 172v1m0 74v1m1 -530v1m0 277v3m0 172v1m0 72v1m1 -252v3m0 247v1m1 -512v1m0 258v2m0 252v1m1 -530v1m0 273v1m0 177v1m1 -301v11m0 110v1m0 176v2m1 -413v1m0 107v5m0 11v17m0 10v11m0 71v1m0 176v1m1 -413v2m0 41v46m0 16v5m0 36v6m0 12v6m0 64v1m0 176v1m1 -372v1m0 48v16m0 65v6m0 57v1m0 176v1m0 78v1m1 -455v5m0 136v8m0 10v1m0 214v1m1 -379v4m0 149v9m0 215v1m1 -384v3m0 1v1m0 164v1m0 4v3m0 203v2m0 80v1m1 -504v1m0 34v6m0 177v4m0 5v12m0 9v5m0 167v1m1 -408v1m0 17v4m0 187v5m0 12v2m0 3v3m0 6v3m0 162v2m1 -408v1m0 15v3m0 210v3m0 12v1m0 8v11m0 141v1m1 -416v4m0 19v3m0 229v2m0 2v4m0 11v3m0 136v2m1 -411v3m0 1v1m0 12v2m0 235v1m0 18v2m0 133v1m1 -403v1m0 7v3m0 235v1m0 22v1m0 131v1m1 -406v1m0 7v1m0 239v2m0 24v4m0 125v2m1 -420v3m0 10v2m0 247v1m0 30v5m0 119v1m1 -420v2m0 3v3m0 3v4m0 248v1m0 36v2m0 115v2m1 -421v2m0 8v3m0 19v1m0 230v2m0 39v2m0 112v1m1 -421v2m0 33v1m0 228v1m0 43v1m0 109v2m1 -421v1m0 36v1m0 225v2m0 45v2m0 106v1m1 -420v1m0 38v1m0 221v3m0 49v1m0 103v2m1 -421v2m0 40v1m0 217v1m0 56v1m0 100v1m1 -420v1m0 43v1m0 214v2m0 58v2m0 96v2m1 -421v1m0 46v1m0 212v1m0 62v1m0 94v1m1 -421v2m0 48v1m0 210v1m0 64v1m0 92v1m1 -423v3m0 51v1m0 208v1m0 66v2m0 88v2m1 -424v2m0 55v1m0 206v1m0 69v1m0 1v2m0 83v1m1 -424v2m0 58v1m0 203v2m0 74v2m0 79v2m1 -425v2m0 61v1m0 201v1m0 78v2m0 75v2m1 -424v1m0 64v1m0 199v1m0 81v3m0 70v2m1 -424v2m0 66v1m0 197v1m0 85v2m0 66v2m1 -423v1m0 265v1m0 88v2m0 62v2m1 -423v2m0 265v1m0 91v3m0 57v2m1 -422v1m0 266v1m0 95v2m0 53v2m1 -425v2m0 1v2m0 266v1m0 98v3m0 48v2m1 -425v2m0 2v1m0 267v1m0 102v2m0 44v2m1 -425v2m0 79v2m0 2v2m0 186v1m0 105v2m0 40v2m1 -426v3m0 76v5m0 6v2m0 183v1m0 108v2m0 36v2m1 -426v2m0 74v5m0 13v2m0 180v1m0 111v2m0 32v2m1 -427v3m0 40v1m0 32v3m0 20v2m0 177v1m0 114v2m0 29v1m1 -427v2m0 44v1m0 28v3m0 25v1m0 175v1m0 117v2m0 25v2m1 -428v2m0 47v1m0 25v2m0 29v2m0 172v1m0 120v1m0 22v2m1 -427v1m0 50v4m0 18v3m0 33v1m0 170v1m0 122v2m0 19v1m1 -370v7m0 6v3m0 1v1m0 37v1m0 168v1m0 125v2m0 15v2m1 -362v6m0 43v2m0 294v2m0 11v2m1 -309v1m0 295v2m0 4v5m1 -306v1m0 162v1m0 134v3m1 -300v2m1 0v1m1 0v2m0 155v1m1 -156v2m1 0v2m1 0v2m2 146v1m1 -146v1m2 142v1m1 -2v1m1 -2v1m1 -139v1m0 136v1m1 -2v1m1 -3v2m1 -134v1m0 130v1m1 -131v1m0 128v1m1 -129v1m0 126v1m1 -127v2m0 123v1m1 -124v1m0 121v1m1 -271v1m0 148v1m0 118v2m1 -272v2m0 150v1m0 115v2m1 -271v1m0 153v1m0 112v2m1 -270v1m0 155v2m0 108v2m1 -270v2m0 158v1m0 105v2m1 -269v1m0 161v1m0 102v2m1 -269v2m0 163v1m0 100v1m1 -271v4m0 166v2m0 96v2m1 -274v4m0 172v1m0 94v1m1 -275v3m0 177v2m0 91v1m1 -278v4m0 182v1m0 88v2m1 -288v11m0 187v1m0 86v1m1 -295v9m0 199v2m0 83v1m1 -84v1m0 80v2m1 -82v2m0 77v1m1 -78v1m0 74v2m1 -76v2m0 71v1m1 -72v2m0 68v1m1 -69v1m0 65v2m1 -67v2m1 0v1m1 0v2m0 57v2m1 -59v2m0 53v2m1 -3v1m1 -3v2m1 -4v1m1 -2v1m1 -3v2m1 -3v1m1 -3v2m1 -3v1m1 -3v2m1 -4v2m1 -3v1m1 -3v2m1 -6v4m0 191v1m1 -204v8m1 -12v4m1 -6v2m0 205v1m1 -210v2m1 -4v2m1 -4v2m0 209v1m1 -214v2m8 206v1m1 -2v1m1 -3v2m1 -3v1m1 -2v1m1 -307v1m0 303v2m1 -305v1m0 301v1m1 -3v2m1 -4v2m1 -4v2m1 -4v2m1 -197v1m0 192v2m1 -194v1m0 189v1m1 -190v1m1 -6v1m0 5v1m0 187v1m1 -188v1m0 185v1m1 -186v1m0 183v1m1 -281v1m0 96v1m0 181v1m1 -182v1m0 178v2m1 -194v1m0 13v1m0 176v1m1 -177v1m1 0v1m1 -19v1m0 18v1m0 170v1m1 -171v1m0 168v1m1 -273v1m0 103v4m0 163v1m1 -271v2m0 105v8m1 -113v1m0 112v5m1 -41v1m0 40v2m0 146v1m1 -147v2m0 143v1m1 -144v2m1 -49v1m0 48v2m1 -52v1m0 51v5m0 132v1m1 -192v2m0 60v9m0 118v2m1 -192v1m0 71v3m0 113v2m1 -191v1m0 75v1m0 110v2m1 -190v1m0 77v1m0 107v2m1 -189v1m0 79v1m0 104v2m1 -189v2m0 81v1m0 100v3m1 -188v1m0 84v1m0 96v3m1 -186v1m0 86v2m0 91v3m1 -184v1m0 89v1m0 87v3m1 -183v2m0 91v1m1 -95v1m0 94v1m1 -97v1m0 96v1m0 79v3m1 -182v2m0 98v3m0 42v1m0 31v2m1 -180v1m0 103v4m0 68v2m1 -179v1m0 108v2m0 65v1m1 -178v1m0 111v2m0 61v2m1 -179v2m0 114v1m0 59v1m1 -178v1m0 175v1m1 -178v1m0 175v1m1 -179v2m0 175v1m1 -179v1m0 175v2m1 -179v1m0 175v1m1 -178v1m0 175v1m1 -179v2m0 175v1m1 -179v1m0 129v2m1 -133v1m0 132v1m1 -136v2m0 134v2m0 41v1m1 -181v1m0 133v3m0 3v1m0 38v1m1 -181v1m0 131v3m0 3v2m0 2v1m0 36v1m1 -181v1m0 129v3m0 11v2m1 -147v1m0 127v3m0 16v2m1 -151v2m0 125v3m0 21v1m0 12v1m0 1v3m0 12v1m1 -183v1m0 125v2m0 25v1m0 8v3m0 5v6m0 5v1m1 -183v1m0 124v2m0 28v2m0 3v3m0 14v3m0 1v1m1 -183v1m0 123v2m0 32v1m1 -160v1m0 123v1m0 33v1m0 22v1m1 -184v2m0 122v2m0 38v1m0 17v1m1 -184v1m0 123v1m0 43v1m0 12v2m1 -184v1m0 123v1m0 45v2m1 -173v1m0 122v2m0 51v1m0 1v3m1 -182v1m0 182v2m1 -186v1m0 172v2m0 11v1m1 -189v2m0 172v1m0 16v1m1 -343v6m0 144v1m0 173v1m0 18v1m1 -352v8m0 6v2m0 141v1m0 173v1m0 20v1m1 -357v4m0 16v2m0 138v1m0 191v1m0 4v1m1 -336v2m0 135v1m0 193v2m0 3v1m1 -335v2m0 131v2m0 171v1m0 2v1m0 12v1m0 8v3m0 274v1m1 -606v1m0 76v2m0 46v1m0 3v1m0 175v1m0 25v1m0 2v1m1 -334v1m0 74v1m0 2v2m0 47v1m0 206v1m1 -334v1m0 78v3m0 43v1m0 177v2m0 14v1m0 14v1m1 -334v1m0 80v2m0 221v7m0 4v1m0 18v2m1 -335v1m0 69v1m0 11v2m0 226v4m0 21v1m1 -267v1m0 14v2m0 250v1m1 -251v2m0 249v2m1 -336v1m0 84v2m0 249v1m1 -336v1m0 29v7m0 26v1m0 23v1m0 248v2m1 -337v1m0 25v3m0 7v8m0 15v2m0 276v2m1 -338v2m0 19v4m0 18v2m0 11v2m0 27v1m0 26v1m0 176v1m0 48v2m1 -338v1m0 15v3m0 24v3m0 6v2m0 31v1m0 252v3m1 -340v1m0 6v8m0 30v2m0 2v2m0 34v1m0 254v2m0 2v1m1 -344v6m0 40v2m0 37v2m0 19v1m0 176v1m0 57v1m0 2v4m1 -261v1m0 194v1m0 65v2m1 -262v2m0 191v1m0 68v2m1 -262v1m0 13v1m0 175v1m0 71v1m1 -262v2m0 185v2m0 73v2m1 -262v1m0 183v1m0 30v1m0 46v1m1 -262v2m0 6v1m0 173v1m0 32v1m0 46v2m1 -262v1m0 261v1m1 -262v1m0 261v2m1 -263v1m0 212v1m0 49v1m1 -263v1m0 262v1m3 1v1m1 0v1m3 1v1m1 0v1m1 0v1m3 1v1m1 0v1m1 2v2m1 0v2m0 43v22m1 -70v1m0 4v2m0 26v15m0 22v14m1 -83v1m0 5v4m0 12v10m0 51v5m1 -78v5m0 3v4m0 66v5m1 -78v1m0 77v5m1 -96v1m0 11v1m0 83v3m1 -98v1m0 8v2m0 87v2m1 -99v1m0 2v1m0 2v2m0 91v2m1 -100v1m0 2v2m0 95v1m1 -100v1m0 3v1m0 95v2m1 -101v1m0 3v1m0 96v1m1 -101v1m0 3v1m0 96v2m1 -222v1m0 119v1m0 101v2m1 -103v1m0 102v1m1 -103v1m0 102v2m1 -229v1m0 124v2m0 102v2m1 -104v1m0 103v3m1 -106v2m0 104v6m1 -109v1m0 108v6m1 -114v1m0 113v5m1 -254v1m0 253v4m1 0v4m1 -125v1m0 124v5m1 -427v1m0 157v1m0 139v1m0 128v4m1 -132v1m0 131v3m1 0v4m1 -440v1m0 439v3m1 0v3m1 -289v1m0 288v4m1 -452v1m0 156v1m0 148v1m0 145v3m1 -454v1m0 453v2m1 -455v1m0 154v1m0 299v3m1 -457v1m0 151v1m0 304v3m1 -459v1m0 458v2m1 -468v1m0 311v1m0 155v3m1 -315v1m0 314v2m1 -464v1m0 463v2m1 -465v1m0 464v2m1 -466v1m0 142v1m0 322v1m1 -466v2m0 139v1m0 324v2m1 -466v2m0 464v2m1 -466v3m0 463v2m1 -465v2m0 130v1m0 332v1m1 -464v2m0 462v2m1 -464v1m0 463v2m1 -465v1m0 464v1m1 -465v1m0 464v1m1 -465v1m0 464v2m1 -466v1m0 465v1m1 -466v1m0 465v1m1 -466v1m0 465v1m1 -466v1m0 465v2m1 -467v1m0 466v1m1 -467v2m0 465v1m1 -466v3m1 0v2m1 0v3m0 459v1m1 -460v2m1 0v1m1 0v1m0 457v1m1 -458v1m1 0v1m1 0v1m0 456v1m3 1v1m1 0v1m1 0v2m1 0v1m1 0v1m1 0v1m1 0v2m1 0v1m1 0v1m1 0v1m1 0v1m3 3v1m1 0v2m1 0v1m1 0v2m1 0v2m1 0v2m1 -399v1m0 398v3m1 0v2m1 0v2m1 -490v1m0 81v1m0 407v3m1 -492v2m0 78v1m0 411v3m1 -493v1m0 76v1m0 415v4m1 -577v1m0 80v2m0 73v1m0 420v3m1 -497v1m0 496v4m1 -500v2m0 498v4m1 -502v1m0 67v1m0 433v3m1 -504v2m0 64v1m0 437v2m1 -596v1m0 91v1m0 61v2m0 440v1m1 -504v1m0 57v3m0 443v2m1 -505v1m0 54v2m0 448v1m1 -602v1m0 96v2m0 51v1m0 451v1m1 -504v1m0 503v2m1 -505v1m0 504v1m1 -608v1m0 102v1m0 504v2m1 -611v1m0 104v1m0 505v1m1 -506v2m0 504v2m1 -506v1m0 505v1m1 -617v1m0 110v1m0 506v1m1 0v1m1 0v2m1 -624v1m0 623v2m1 0v1m1 -473v1m0 472v2m1 -631v1m0 156v4m0 470v2m1 -634v1m0 161v2m0 470v3m1 -473v1m0 472v3m1 -475v1m0 474v3m1 -645v1m0 154v1m0 489v4m1 0v4m1 -532v2m0 46v1m0 483v4m1 -534v1m0 46v1m0 486v5m1 -538v1m0 46v1m0 490v6m1 -543v2m0 25v1m0 19v1m0 495v5m1 -546v1m0 545v3m1 -548v1m0 547v3m1 -550v2m0 43v1m0 504v3m1 -551v1m0 43v1m0 506v8m1 -558v2m0 15v1m0 540v8m1 -564v2m1 0v2m1 0v2m1 0v2m0 36v1m0 95v1m1 -133v3m1 2v2m1 0v4m1 0v4m1 0v4m1 0v3m1 0v4m0 14v1m1 -15v4m1 0v4m1 0v4m1 0v4m1 1v1m1 0v1m3 1v1m1 0v1m1 0v1m1 0v1m1 365v3m0 1v3m1 -13v6m0 7v2m1 -373v1m0 372v2m1 -374v1m0 373v2m1 -375v1m0 374v1m1 -375v1m1 0v1m1 0v1m0 316v10m1 -326v1m0 304v11m0 10v8m1 -333v1m0 296v7m0 29v26m1 -64v2m0 63v6m1 -73v2m0 71v4m1 -80v3m0 77v1m1 -368v1m0 284v2m0 83v1m1 -316v1m0 227v2m0 82v1m0 3v1m1 -319v2m0 225v3m0 83v1m0 5v2m1 -372v1m0 49v1m0 225v2m0 94v2m1 -373v1m0 47v1m0 223v3m0 98v2m1 -329v2m0 222v2m0 5v2m0 96v1m1 -331v1m0 222v2m0 4v3m0 99v2m1 -334v1m0 220v3m0 3v3m0 104v2m1 -337v1m0 143v1m0 75v2m0 4v2m0 109v1m1 -378v1m0 38v1m0 145v1m0 77v3m0 112v2m1 -342v1m0 213v6m0 2v3m0 117v2m1 -345v1m0 203v11m0 130v2m1 -348v1m0 150v1m0 49v4m0 143v3m1 -352v1m0 152v1m0 45v3m0 150v4m1 -388v1m0 30v1m0 154v1m0 42v2m0 157v2"/></g>
<g shape-rendering="crispEdges" stroke="#000" stroke-width="1" ><path transform="translate(0,0.5)" d="M0 0m744 1h2m1 2h2m0 1h3m0 1h3m0 1h2m-2 2h2m-455 1h2m-4 1h2m-5 1h3m451 0h2m-460 1h4m-7 1h3m-7 1h4m457 0h2m-466 1h3m-5 1h2m-6 1h4m462 0h2m-471 1h3m-79 6h2m566 2h2m-37 2h2m-4 1h2m39 0h2m-45 1h2m43 0h2m22 0h2m-601 1h2m526 0h2m67 0h2m-73 1h2m67 0h2m-562 1h9m480 0h2m66 0h3m-551 1h2m476 0h2m64 0h4m-546 1h2m472 0h2m58 0h8m-540 1h2m468 0h2m-470 1h3m463 0h2m-465 1h2m459 0h2m-461 1h2m455 0h2m-457 1h2m451 0h2m-453 1h2m447 0h2m-449 1h2m443 0h2m-444 2h2m1 2h2m7 0h2m-9 1h2m3 0h2m-5 1h3m-60 1h4m4 1h2m478 0h2m-482 1h2m476 0h2m-484 1h2m478 0h2m-488 1h2m5 0h2m-8 1h6m5 0h2m0 1h2m464 8h2m-4 1h2m-5 1h3m-8 1h5m-9 1h4m-6 1h2m-7 7h3m-447 1h2m438 0h4m-446 1h2m435 0h5m-444 1h2m433 0h4m-8 1h4m-6 1h2m-4 1h2m-345 1h3m338 0h2m-340 1h4m331 0h3m-334 1h5m40 0h39m9 0h18m216 0h4m-326 1h40m28 0h3m7 0h10m18 0h16m197 0h3m-431 1h3m228 0h15m180 0h2m-182 1h16m0 1h58m0 1h28m203 0h28m-574 1h2m341 0h203m28 0h9m-599 1h2m16 0h2m579 0h5m-608 1h2m-1 6h2m7 0h52m-254 1h150m45 0h3m56 0h52m-109 2h2m2 0h2m-6 1h4m-7 4h2m-5 1h3m-5 1h2m578 4h7m-588 1h2m577 0h2m-579 1h2m573 0h2m-582 6h2m0 1h7m-45 1h2m-5 2h2m-7 4h2m590 2h12m-16 1h4m12 0h2m4 0h3m-27 1h2m18 0h4m-26 1h2m-591 1h2m585 0h3m-21 3h3m0 1h2m-579 5h52m515 0h2m-4 1h2m17 0h2m-25 1h4m-7 1h3m-508 1h2m-2 5h3m499 0h2m-508 1h4m502 0h2m-509 4h2m-2 2h2m-4 1h2m-5 2h2m495 0h5m-504 1h2m495 0h2m5 0h5m-511 1h2m-5 1h3m496 0h2m-504 1h3m495 2h2m-501 2h3m493 0h2m-495 1h3m487 1h2m-6 3h2m-488 2h2m481 0h2m-20 3h6m8 0h2m-21 1h5m6 0h4m-17 1h2m15 0h3m-484 1h2m2 0h2m455 0h3m-466 1h2m459 0h2m-457 1h2m451 0h2m-4 1h2m-4 1h2m-5 2h2m-462 5h2m-4 1h2m2 0h2m0 1h2m-7 2h2m-1 6h2m-4 1h2m439 2h2m9 0h2m-11 1h2m4 0h3m-451 1h2m435 0h2m5 0h4m125 5h2m1 0h2m7 0h34m-48 1h2m5 0h7m34 0h12m-64 1h4m60 0h13m-80 1h3m77 0h7m-648 1h2m556 0h3m-560 1h2m551 0h4m-561 1h4m551 0h2m-559 1h2m553 0h2m-4 1h2m-5 2h2m-5 1h3m-8 1h5m-9 1h4m-547 1h2m538 0h3m-548 1h5m536 0h4m-7 1h3m-386 1h103m259 0h21m-538 1h156m91 0h3m7 0h100m120 0h40m-160 1h120m-317 6h2m367 1h2m-544 2h4m10 1h2m-4 1h2m-5 1h3m-5 1h2m-10 3h2m-4 1h2m-2 6h2m-7 4h2m4 3h2m536 1h2m2 3h2m2 3h2m2 3h2m-558 1h2m179 0h2m374 0h2m-378 1h2m375 0h2m-379 1h2m377 0h2m0 1h5m0 1h6m-574 5h2m179 0h2m-186 3h3m-7 1h4m-7 2h2m-3 1h2m0 1h2m0 1h2m585 0h2m-590 1h2m-4 1h2m-4 1h2m-5 1h3m-5 1h2m-9 2h4m0 1h3m-8 3h6m0 1h2m0 1h2m-9 2h2m0 1h3m0 1h2m-8 2h2m0 1h2m-2 6h2m-4 1h2m-4 1h2m-4 1h2m-10 1h8m-2 2h5m-9 1h4m632 1h2m-634 3h2m-4 1h2m637 0h2m1 2h2m1 2h2m-648 2h2m-7 4h3m0 1h5m0 1h3m-13 3h2m0 1h3m-10 1h2m8 0h3m-11 1h3m8 0h2m-10 1h2m0 1h3m0 1h2m-12 1h2m0 1h2m670 1h2m-670 4h2m671 0h2m-678 1h3m675 0h2m-683 1h3m680 0h2m-687 1h2m1 4h3m0 1h3m-8 3h3m0 1h3m4 0h2m0 1h2m-12 2h2m0 1h2m0 1h2m688 8h2m-689 1h5m-2 5h2m-4 1h2m689 1h2m0 1h2m-697 5h2m-5 1h3m-6 1h3m703 0h2m0 1h2m0 1h2m-711 2h2m710 0h2m-712 1h2m710 0h2m-712 1h2m710 0h2m-789 4h73m-1 2h2m1 0h3m0 1h2m-5 2h3m204 0h2m232 0h2m-441 1h2m203 0h2m507 0h3m-725 3h3m4 0h3m-7 1h4m205 3h2m-208 1h3m203 0h2m515 8h2m-725 1h2m721 0h2m-723 1h2m719 0h2m-721 1h2m-3 4h2m-4 1h2m3 5h2m-7 1h2m1 0h2m2 3h2m-6 3h2m4 4h2m-9 2h2m6 0h2m-8 1h2m2 0h2m-4 1h2m6 7h4m-5 6h2m444 0h2m0 1h2m0 1h2m-456 3h2m-4 1h2m-6 1h4m454 0h2m-463 1h3m456 0h2m-4 1h2m-4 1h2m-450 2h3m-4 2h3m-10 1h2m0 1h5m-3 2h2m-5 10h2m-5 1h3m-5 1h2m-6 7h2m-5 2h2m-4 1h2m0 3h3m-3 3h2m-5 1h3m-5 1h2m212 4h2m-2 1h2m-2 1h2m-220 3h2m-4 1h2m-4 1h2m-4 1h2m-4 1h2m-1 1h2m2 0h3m-5 1h2m-1 5h2m-4 1h2m-8 8h3m2 2h2m-5 1h3m-6 2h4m0 1h2m-2 6h2m-3 1h3m227 0h2m247 0h2m-483 1h2m230 0h2m247 0h2m-486 1h3m-5 1h2m0 13h2m-2 9h2m-3 1h142m157 0h193m226 16h7m0 1h3m0 1h3m0 1h3m0 1h2m0 1h3m0 1h3m0 1h3m0 1h2m-441 1h2m0 1h2m192 0h14m-206 1h2m204 0h26m-230 1h2m228 0h21m-294 1h3m291 0h14m-305 1h3m302 0h15m0 1h14m0 1h14m-357 1h2m355 0h14m-373 1h2m371 0h15m0 1h14m-404 1h2m402 0h14m0 1h14m0 1h8m-559 7h2m0 1h2m51 5h11m-12 1h2m165 0h4m-173 1h2m13 0h2m34 0h3m34 0h2m73 0h13m-178 1h2m48 0h3m3 0h2m101 0h35m-196 1h2m20 0h2m10 0h2m1 0h2m12 0h2m7 0h2m91 0h8m27 0h13m-220 1h4m13 0h2m24 0h2m6 0h2m15 0h2m11 0h2m83 0h7m44 0h7m-226 1h2m4 0h3m8 0h2m28 0h2m2 0h2m32 0h2m5 0h2m69 0h6m57 0h4m307 0h9m-532 1h3m32 0h2m107 0h6m66 0h4m-223 1h3m49 0h3m89 0h5m73 0h4m-235 1h3m4 0h2m55 0h3m18 0h4m61 0h4m80 0h4m-92 1h5m87 0h3m-99 1h5m94 0h3m-106 1h6m99 0h4m-127 1h2m13 0h5m105 0h4m-118 1h5m111 0h4m-254 1h2m44 0h2m45 0h3m11 0h4m10 0h3m6 0h5m118 0h3m-211 1h2m1 0h4m37 0h4m12 0h2m4 0h10m6 0h4m124 0h3m-241 1h4m14 0h2m10 0h2m3 0h6m22 0h9m14 0h2m15 0h7m130 0h2m-238 1h4m7 0h3m23 0h10m33 0h2m2 0h15m139 0h2m-231 1h2m36 0h7m27 0h3m156 0h2m-268 1h2m265 0h3m-280 1h5m3 0h2m269 0h2m-280 1h2m2 0h3m272 0h2m-1 1h2m0 1h2m-1 1h2m1 2h2m-1 1h2m109 0h3m-112 1h2m104 0h3m6 0h12m-126 1h2m101 0h2m6 0h3m-113 1h2m97 0h3m-5 1h2m-96 1h2m121 0h2m-436 1h6m306 0h2m122 0h2m-414 2h2m289 0h2m-295 1h2m47 0h2m243 0h2m122 0h2m-125 1h2m-247 1h2m245 0h2m78 0h6m38 0h6m-377 1h2m246 0h2m-1 1h2m0 1h2m-326 1h2m0 1h3m1 0h2m66 0h2m321 0h3m53 0h2m-61 1h3m58 0h2m-65 1h2m63 0h2m-69 1h2m-382 1h3m3 0h2m50 0h2m318 0h2m-377 1h3m54 0h2m313 1h2m-548 3h4m230 0h2m306 0h2m-546 1h2m4 0h4m226 0h2m314 0h2m-556 1h2m10 0h3m223 0h2m312 0h2m-23 1h2m9 0h2m6 0h2m-374 1h5m54 0h2m-247 1h6m33 1h3m-6 1h3m506 0h2m5 0h2m-520 1h2m496 0h3m15 0h3m86 0h2m-619 1h6m4 0h2m496 0h2m9 0h3m4 0h2m-529 1h2m5 0h4m495 1h2m19 0h2m93 0h2m-129 1h6m22 0h4m-40 1h8m6 0h4m17 0h3m100 0h2m-143 1h3m34 0h2m104 0h2m-502 1h2m30 0h2m359 0h2m107 0h2m-474 1h2m57 0h2m300 0h2m-502 1h2m2 0h2m131 0h2m359 0h2m-498 1h2m492 0h3m-4 1h2m-4 1h2m-5 1h3m-5 1h2m-477 3h2m-8 1h2m2 0h2m-4 1h2m5 1h3m4 0h3m-7 1h4m96 0h2m0 1h2m491 0h2m-493 1h3m54 0h2m434 0h2m-492 1h2m11 0h5m475 1h2m-595 1h2m0 1h3m-2 5h2m126 0h9m-12 1h3m9 0h2m-142 1h2m124 0h2m14 0h2m-146 1h2m15 0h3m38 0h4m84 0h3m8 0h2m-161 1h2m9 0h2m9 0h5m29 0h4m4 0h4m83 0h3m3 0h2m447 0h2m-599 1h2m2 0h2m12 0h3m23 0h3m12 0h2m53 0h4m27 0h3m451 0h2m-595 1h2m34 0h2m17 0h2m47 0h4m4 0h5m-83 1h2m21 0h2m43 0h2m13 0h3m-104 1h2m14 0h2m25 0h2m59 0h2m-135 1h2m29 0h2m41 0h2m-74 1h2m29 0h2m-31 1h2m157 1h2m-26 1h2m24 0h2m-26 1h2m24 0h2m447 3h2m-581 1h3m578 0h9m0 1h2m-482 1h2m21 0h2m457 0h2m-482 1h3m15 0h3m461 0h2m-481 1h3m9 0h3m445 0h2m-459 1h3m3 0h3m448 0h2m-456 1h3m451 0h2m-1 2h2"/><path transform="translate(0.5,0)" d="M0 0m6 696v1m1 -2v1m15 4v1m1 -6v1m0 2v2m1 -4v2m14 -132v1m0 8v2m1 -10v3m0 3v2m0 2v1m0 128v3m1 -139v3m0 129v4m1 -5v1m1 -150v2m0 25v3m0 4v1m0 112v2m1 -151v2m0 30v4m1 -38v1m0 161v3m1 -166v1m0 5v1m0 159v5m1 -173v2m0 9v5m1 -18v2m0 18v1m1 -22v1m0 10v2m1 -3v1m4 -16v3m1 -5v2m0 181v2m2 -194v3m1 -6v3m1 -5v2m2 214v1m1 -225v1m0 224v2m1 -226v2m0 224v1m1 -225v1m2 -1v2m0 203v2m0 2v1m1 -216v1m0 3v1m0 208v2m1 8v1m1 -385v3m0 10v1m0 7v1m1 -23v1m0 14v2m0 6v2m0 43v2m0 89v2m0 219v1m0 15v1m1 -345v1m0 12v3m0 88v3m0 222v3m0 11v1m1 -343v2m0 9v1m0 90v1m0 234v2m0 1v2m1 -3v1m1 -387v1m0 14v1m0 57v4m0 53v1m1 -141v1m0 10v1m0 11v2m0 41v1m0 13v3m0 4v1m0 10v2m0 38v2m0 1v2m1 -145v2m0 12v2m0 49v3m0 30v2m0 2v1m0 36v1m1 -141v1m0 31v2m0 6v2m0 23v1m0 5v2m1 -43v2m0 6v2m0 2v1m0 38v1m1 -45v1m0 12v2m0 3v1m0 19v2m0 2v2m0 24v1m0 5v5m0 34v3m0 4v2m0 237v1m1 -415v2m0 9v1m0 41v2m0 15v3m0 17v2m0 4v1m0 16v2m0 56v4m0 238v1m1 -405v2m0 1v1m0 37v3m0 59v1m1 -105v1m0 18v1m0 21v1m0 12v1m0 64v1m0 38v1m1 -141v1m0 36v3m0 60v1m0 35v1m0 1v1m1 -151v1m0 105v1m1 -106v1m0 105v2m0 7v1m0 31v1m1 -147v2m0 105v2m0 6v1m0 28v1m1 -157v2m0 12v1m0 114v1m0 19v1m1 -152v2m0 131v1m0 15v2m1 -17v2m0 12v1m1 -164v1m0 150v3m1 -163v2m0 5v2m0 154v2m0 1v1m1 -168v1m0 170v1m0 266v2m1 -272v3m1 -155v2m0 147v1m0 1v1m1 -155v3m3 -17v1m0 8v1m1 -11v1m0 7v2m0 435v1m0 4v1m1 -5v1m0 1v2m0 1v1m1 -5v1m2 5v1m1 -4v2m1 -4v2m1 -4v2m1 -3v1m1 -456v1m0 452v2m7 -458v1m1 -23v4m0 17v1m1 -26v1m0 1v2m0 4v2m0 6v8m1 -14v2m0 2v1m1 -13v1m0 9v2m1 -11v1m1 -10v3m0 7v1m1 -13v2m0 11v1m2 -8v1m1 -15v2m0 13v2m0 2v1m1 -18v4m0 11v2m3 -19v1m1 0v1m1 0v1m2 -105v2m1 -4v2m1 -3v1m1 -3v2m1 -3v1m1 -3v1m0 96v2m0 1v1m1 -103v2m0 101v1m1 -105v1m0 104v1m0 506v2m1 -615v1m0 106v3m0 3v1m0 501v4m1 -509v3m0 506v3m1 -11v8m1 -621v1m0 587v4m0 10v11m1 -614v1m0 100v1m0 485v2m0 4v10m1 -604v1m0 99v2m0 484v2m1 -490v2m0 485v1m1 -515v1m0 25v1m0 486v1m1 -587v1m0 73v1m0 8v3m0 499v1m1 -609v2m0 604v1m1 -605v3m0 603v2m1 -605v1m0 14v2m0 77v2m0 9v1m0 6v1m0 492v2m1 -606v1m0 11v2m0 81v3m0 7v2m0 2v2m0 495v2m1 -607v1m0 8v2m0 95v2m0 499v2m1 -608v8m0 77v2m0 521v1m1 -527v3m0 2v1m0 521v1m1 -531v3m0 7v1m0 520v2m1 -535v2m0 533v1m4 -539v1m1 1v2m1 -18v2m0 11v2m0 3v1m1 -20v1m0 11v2m1 -3v1m1 5v1m1 540v1m1 -554v1m0 3v1m0 549v2m1 -555v3m0 552v1m1 -51v2m0 49v1m1 -116v6m0 56v2m0 2v1m0 49v1m1 -123v6m0 6v2m0 53v1m0 5v1m0 49v1m1 -126v2m0 14v2m0 50v1m0 57v1m1 -129v2m0 18v2m0 107v1m1 -133v3m0 22v1m0 83v2m0 22v1m1 -574v1m0 435v4m0 26v2m0 83v4m0 19v2m1 -143v3m0 32v2m0 85v6m0 15v2m1 -583v1m0 435v2m0 37v2m0 49v1m0 39v2m1 -570v2m0 434v2m1 -3v1m0 82v1m1 -533v3m0 15v1m0 512v1m0 12v1m0 21v1m1 -585v2m0 14v2m0 4v2m0 524v1m0 14v2m0 16v3m1 -586v2m0 2v1m0 12v1m0 8v1m0 488v3m0 31v1m0 32v1m0 22v1m1 -607v1m0 5v2m0 2v4m0 2v2m0 501v5m0 25v1m0 32v1m0 24v1m1 -600v2m0 4v2m0 508v4m0 20v1m0 32v1m0 26v1m1 -580v4m0 495v4m0 15v1m0 30v1m0 1v1m0 28v1m1 -618v2m0 538v3m0 11v1m0 32v1m0 30v1m1 -621v2m0 543v4m0 6v1m0 65v1m1 -73v2m0 3v1m0 67v2m1 -71v1m0 23v1m0 46v1m1 -641v2m0 589v2m0 9v1m1 -601v3m0 17v1m0 565v3m0 10v1m1 -579v1m0 2v2m0 558v2m0 12v1m1 -603v1m0 25v2m0 559v1m0 13v1m1 -693v2m0 26v2m0 60v1m0 14v1m0 571v1m0 12v2m1 -690v4m0 20v2m0 2v1m0 69v1m0 2v2m0 582v3m1 -684v3m0 16v1m0 69v4m0 586v2m1 -678v2m0 81v3m0 5v1m0 576v3m0 4v1m0 56v1m1 -731v1m0 20v2m0 642v1m0 3v2m0 1v1m0 58v1m1 -731v2m0 9v1m0 10v2m0 646v1m0 60v1m1 -730v2m0 3v4m0 13v3m0 705v1m1 -729v3m0 20v2m0 59v1m0 557v1m1 -618v1m0 55v1m0 1v1m0 556v2m1 -616v2m0 50v3m0 558v1m1 -612v1m0 46v3m1 -49v2m0 41v3m0 656v1m1 -701v3m0 37v1m0 558v2m0 5v1m0 94v1m1 -699v2m0 599v2m0 96v2m1 -699v1m0 596v2m0 100v1m1 -702v2m0 35v2m1 0v1m3 -37v1m0 592v1m1 -597v2m0 595v1m1 -556v1m1 -2v1m1 -40v1m0 37v1m0 633v1m1 -636v1m1 -41v1m0 2v2m0 15v1m0 9v4m0 5v1m1 -42v2m0 19v1m0 1v1m0 12v2m0 2v1m0 634v1m0 13v1m1 -691v1m0 20v1m0 3v2m0 12v2m0 634v1m0 15v2m1 -695v2m0 20v1m0 6v1m0 665v2m1 -698v1m0 20v2m0 8v2m0 665v2m1 -702v2m0 13v3m0 4v1m0 679v1m1 -704v1m0 18v4m1 -25v2m0 679v1m1 -683v1m0 679v2m1 -683v1m0 679v1m1 -682v1m1 -2v1m1 712v2m1 0v2m1 0v1m1 -59v1m0 16v1m1 -17v1m0 14v1m1 -15v1m1 -6v1m1 -2v1m0 17v1m1 -20v1m0 16v2m1 -4v2m1 -4v2m1 -31v1m0 26v2m1 -28v2m0 22v2m1 -59v1m0 34v1m0 19v1m0 3v2m1 -24v1m0 19v2m1 -19v3m0 7v2m0 3v1m1 -54v1m0 41v6m12 -647v1m3 1v1m0 596v1m3 1v1m1 0v1m1 0v1m2 -621v4m1 -8v4m0 4v2m1 -11v1m0 10v1m1 -14v2m0 12v1m0 467v23m0 3v7m1 -500v1m0 455v11m0 33v20m0 93v1m1 -613v1m0 8v2m0 434v10m0 64v8m0 83v2m1 -611v3m0 3v2m0 427v9m0 84v12m1 -537v3m0 420v9m0 105v26m1 -149v9m0 140v27m1 -184v8m0 176v13m1 -206v9m1 -25v2m0 5v9m1 -24v2m0 2v4m0 4v3m1 -23v8m1 -16v8m1 -16v8m1 -17v9m1 -19v10m1 -20v10m1 -20v10m1 -20v10m1 -20v10m1 -20v10m0 317v1m1 -414v2m0 74v10m0 328v1m1 -413v2m0 62v10m1 -72v1m0 51v10m1 -61v1m0 45v5m1 -10v4m0 363v2m1 -379v5m0 3v2m1 -279v1m0 239v1m0 18v10m0 354v1m0 18v3m1 -644v1m0 239v2m0 6v10m0 366v3m0 7v7m0 16v1m1 -657v1m0 240v6m0 379v7m0 20v1m0 1v1m1 -655v1m0 652v1m1 -653v1m0 3v1m0 611v1m1 -616v3m0 75v8m0 526v3m1 -529v8m0 517v1m1 -2v1m1 0v1m6 2v1m1 0v4m0 6v6m1 -12v6m0 6v3m1 0v1m1 0v2m1 0v1m3 -1v2m1 0v1m1 0v2m1 0v2m1 0v1m1 0v1m1 0v1m1 1v1m7 -55v1m1 -2v1m0 1v1m1 -5v2m0 3v1m1 -13v1m0 5v1m0 6v1m1 -13v2m0 2v1m0 8v1m1 -12v2m0 10v1m1 0v2m1 0v2m1 0v2m1 0v2m6 15v4m1 -6v2m0 4v3m1 -18v3m0 4v2m0 9v2m1 -17v4m0 13v2m123 26v1m8 5v1m2 -439v3m1 0v6m1 0v5m0 427v1m1 -428v6m1 0v5m1 0v6m1 0v6m1 0v5m1 0v6m1 0v4m1 0v5m1 0v4m1 0v5m1 0v6m0 377v3m1 -380v8m0 372v12m1 -384v8m0 376v4m1 -380v7m0 373v2m1 -375v8m0 367v2m1 -369v8m0 361v1m1 -362v6m0 357v1m1 -358v5m1 0v5m1 0v5m1 0v6m1 0v5m1 0v5m1 0v5m1 0v6m1 0v7m1 0v7m1 0v7m1 0v1m0 1v5m1 0v4m1 0v3m1 0v2m1 0v3m1 0v3m1 0v2m0 129v4m0 137v1m1 -271v3m0 124v2m0 4v2m0 136v1m1 -269v3m0 116v3m0 10v2m0 135v1m1 -267v3m0 57v19m0 30v7m0 15v2m0 128v1m0 5v2m1 -266v3m0 42v12m0 19v17m0 7v6m0 24v2m0 134v2m1 -265v2m0 36v4m0 48v7m0 32v2m1 -129v2m0 32v2m0 93v4m0 118v1m1 -250v2m0 28v2m0 99v4m1 -133v2m0 10v2m0 120v2m1 -134v4m0 4v2m0 2v1m0 121v2m1 -132v4m0 5v1m0 122v2m1 -124v1m0 123v2m1 0v2m0 100v1m1 -2v1m1 -2v1m1 -220v1m0 217v1m1 -221v2m0 219v2m1 -224v1m0 220v1m0 2v2m1 -7v1m0 7v1m3 -3v1m2 2v1m1 -6v1m0 3v1m1 -6v1m1 -2v1m1 5v1m1 -2v1m1 -8v1m1 -2v1m1 4v1m2 -8v1m1 -2v1m0 5v1m3 -9v1m12 -8v2m1 -4v2m4 -7v3m1 -5v2m0 3v1m4 -450v5m1 -16v11m1 -17v6m1 -7v1m3 -3v1m4 459v1m9 -463v1m1 -3v2m1 -7v5m1 -9v4m1 -5v1m1 -2v1m0 475v1m1 -478v1m0 477v2m1 -481v1m1 -2v1m3 -3v1m0 485v1m1 0v1m3 1v1m7 1v1m1 0v2m1 0v1m5 -594v1m1 -2v1m1 -2v1m0 598v2m1 0v2m1 0v1m1 0v2m1 0v3m1 0v3m1 0v1m3 1v1m1 0v1m2 -522v1m1 522v1m2 -526v1m1 -2v1m2 531v6m1 -540v1m0 531v2m0 6v4m1 0v2m2 -548v1m0 80v4m1 -86v1m0 78v3m0 4v1m1 -10v2m0 8v1m1 -12v1m0 11v1m0 462v1m1 -554v1m0 76v1m0 13v1m1 -16v1m0 15v1m1 -18v1m0 479v1m1 -558v1m0 75v1m0 481v1m1 -484v1m0 20v1m0 462v1m1 -486v1m0 22v1m0 462v2m1 -564v1m0 74v1m0 488v1m1 -566v1m0 74v1m0 490v2m1 -466v1m0 465v2m1 -467v1m1 -106v1m0 74v1m1 -2v1m1 -165v1m0 162v1m0 33v1m1 -201v3m0 161v2m0 35v1m0 465v1m1 -670v2m0 162v2m0 504v2m1 -509v1m0 508v2m1 0v1m1 0v1m0 8v1m0 3v1m1 -13v2m1 0v1m0 9v1m1 -10v1m3 -587v1m1 -2v1m1 -3v2m1 -3v1m1 -4v3m1 -9v2m0 3v1m1 -7v1m0 2v1m1 -5v1m1 131v2m1 0v2m1 -227v7m0 220v2m1 -230v1m0 229v2m1 -233v1m0 232v2m1 -236v1m0 235v2m1 0v1m1 1v1m0 460v1m1 -461v2m0 459v2m1 -461v2m0 459v8m1 -542v1m0 74v3m0 464v2m1 -625v1m0 158v2m0 464v3m1 -723v3m0 91v1m0 161v2m0 465v2m1 -729v4m0 93v1m0 164v2m0 465v1m1 -634v1m0 167v1m0 465v1m1 -636v1m0 169v1m0 465v1m1 -466v2m0 464v1m1 -465v1m0 464v2m0 5v17m1 -488v1m0 465v5m1 -470v2m1 -176v2m0 174v2m1 -176v3m0 173v2m1 -175v1m0 174v2m1 -176v1m0 175v2m1 -177v1m0 176v1m1 -179v1m0 178v1m1 0v1m2 -183v1m1 -2v1m0 184v1m1 -188v2m0 186v1m1 -191v2m0 189v1m1 -194v2m1 -3v1m1 195v1m1 -197v1m0 77v1m2 119v1m3 1v1m1 0v1m1 0v1m1 0v1m1 -312v1m0 311v1m1 -314v1m0 313v1m1 -316v1m0 315v1m1 -318v1m0 317v2m1 -321v1m0 320v2m0 281v2m1 -607v1m0 323v3m0 280v5m1 -613v1m0 327v2m0 283v4m1 -618v1m0 330v1m0 286v3m1 -622v1m0 332v1m0 288v2m1 -625v1m0 334v1m0 289v2m1 -645v1m2 15v1m0 338v1m1 -354v1m0 12v1m0 340v1m1 0v1m2 -345v1m1 -2v1m1 602v7m0 21v2m1 -35v5m0 7v4m0 13v4m1 -633v1m0 598v1m0 16v13m1 -630v1m0 119v2m0 230v2m0 245v1m1 -599v2m0 115v2m0 234v1m0 242v2m1 -599v1m0 2v2m0 111v2m0 237v2m0 239v1m1 -599v1m0 6v1m0 109v1m0 241v1m1 -352v2m0 105v2m0 243v1m1 -351v1m0 102v2m0 246v1m0 6v2m1 -359v2m0 99v1m0 249v1m0 2v3m0 2v2m1 -359v1m0 97v1m0 251v2m0 7v2m1 -360v2m0 94v1m0 263v1m1 -359v1m0 92v1m0 265v1m1 -359v1m0 90v1m1 -91v1m1 358v2m1 0v3m1 -362v1m0 361v2m1 -363v1m4 364v2m1 -364v1m0 363v2m1 -365v2m0 75v3m0 285v2m1 -365v1m0 64v10m1 -13v3m1 -5v2m1 -4v2m1 -4v2m2 310v1m7 3v1m1 0v2m0 5v1m1 -6v2m1 0v4m1 1v4m1 0v2m1 0v1m1 0v2m1 0v4m1 -400v1m0 399v2m1 -403v1"/></g>
<path transform="translate(0.5,0.5)" shape-rendering="crispEdges" stroke-linecap="square" stroke="#000" stroke-width="1" d="M206 671l-1 0l1 -1l1 -1l-1 -1l-1 -1l-1 1M214 674l1 1l1 -1l1 1l0 -1M213 678l1 1l-1 0l-1 1l1 -1l1 -1l1 -1l0 1M212 696l-1 -1l1 -1l-1 1l0 1M211 676l0 -1l1 -1l1 1l1 0l1 0M197 721l0 1l1 -1l-1 1l1 0l1 1M214 684l1 0l-1 0l0 -1l1 -1l0 -1l-1 0M214 685h2M216 671l0 1l0 -1l0 1l0 1l1 0M198 704l0 -1l-1 0l1 0l1 1l0 -1M200 706l1 -1l0 1l1 0l0 -1l0 1l0 -1l-1 -1M203 672l-1 1l-1 0l1 -1l-1 -1l1 0l-1 1M198 686l-1 1l0 1l1 -1M193 711l1 0l1 -1l1 0M186 701l0 1l-1 1l-1 -1l0 1l-1 -1l1 0l0 1M186 702h2M188 711l0 1l-1 -1l-1 -1l0 -1M188 712h2M209 679l0 1l0 -1l1 0M203 696l-1 1l1 0l1 0l-1 1l1 -1l-1 -1l1 1l-1 1M191 702l-1 -1l1 0l0 1l1 1l0 1l-1 1l-1 1l1 -1l0 -1M212 676l0 1l1 -1l1 -1l0 1M211 699l-1 -1l1 1l1 1l-1 1l1 1M217 679l-1 0l-1 0l-1 1l-1 0l-1 -1M183 713l0 -1l0 -1l0 -1l1 -1l-1 1l-1 -1l1 0M194 693l0 -1l1 0l-1 0l1 0l0 1M194 694h2M191 707l-1 -1l-1 -1l-1 0l0 -1l-1 0l-1 0l1 0M201 700l1 0l-1 0l-1 1l-1 0l-1 0l-1 1M201 701h2M188 706l-1 0l-1 0l-1 0l1 0M200 681l-1 0l-1 -1l-1 0M200 679l1 1l-1 0l0 -1l0 -1l-1 -1l1 1M219 673l1 0l1 0l1 0l1 0l1 -1l-1 0l-1 1l1 1l-1 0M179 709l1 1l0 1l-1 1l0 -1l0 -1l-1 0M198 699l-1 1l-1 -1l0 -1l-1 0M205 671l-1 1l1 1l1 0l-1 0l1 1l1 -1M205 672h2M213 675l1 1l-1 1l1 1l1 1l1 -1l-1 -1l-1 -1M210 697l-1 0l-1 1l-1 -1l1 1l0 -1l0 1l0 -1l1 1M188 715l1 1l-1 -1l0 -1l1 -1M207 685l-1 1l-1 0l-1 0l-1 0l0 -1M219 680l-1 -1l1 1l-1 1l1 1l0 -1l1 0M219 681h2M198 695l1 -1l-1 0l-1 0M214 674l1 -1l1 0l-1 0M216 671l0 -1l0 -1l-1 1l0 1l-1 -1M205 685l1 -1l-1 0M205 686h2M188 714l1 -1l1 1l0 -1l-1 1l-1 -1l-1 1M210 693l1 1l-1 0l-1 0l0 1l0 -1M215 672l1 0l-1 -1M215 673h2M198 704l-1 0l1 0l0 -1M220 673l1 1l1 0l-1 1l-1 -1l-1 -1l1 -1l1 1l0 -1l1 0M196 716l-1 0l1 1l-1 0M196 717h2M214 682l-1 1l-1 -1l0 1l1 0l-1 -1l-1 0l1 1M188 710l-1 0l-1 1l0 1l1 0M188 711h2M199 679l0 -1l-1 0l-1 0l0 -1M199 678l1 -1l1 -1l0 -1M199 679h2M221 675l1 -1l-1 0l0 1M210 668l1 0l0 -1l-1 -1l-1 0l-1 0l0 -1l1 -1M211 686l0 -1l-1 1l0 -1l0 1l0 -1l1 0l-1 1l0 -1M211 668l0 -1l-1 0l-1 1M211 669h2M204 690l1 -1l0 1l1 1l0 -1M219 670l-1 -1l0 1l0 -1l0 -1l-1 1l0 1l-1 1M219 671h2M199 692l-1 0l-1 1l-1 0l1 1M199 693h2M195 707l-1 1l1 1l-1 0l1 0l1 0l-1 0M195 708h2M187 719l0 -1l-1 -1l0 -1l-1 0l-1 -1l-1 -1l1 1M187 720h2M184 705l1 -1l-1 1l1 1l1 0l-1 -1l-1 -1l-1 0l-1 1M213 693l-1 1l0 -1l-1 -1l0 1l0 -1M206 692l1 0l0 -1l0 1l1 0M193 717l-1 -1l1 -1l1 0l-1 1M193 699l-1 1l-1 -1l-1 0M214 676l-1 1l0 1l-1 0l-1 1l-1 -1l0 1l-1 0l0 -1l-1 -1M213 678l1 -1l1 0l-1 0l1 0l1 1l0 1M195 709l1 0l-1 -1l-1 1l-1 0l1 0M213 692l-1 0l-1 0M206 668l-1 1l0 1l1 -1l-1 1M217 685l-1 1l1 -1l-1 0l1 0l-1 0l1 0l0 -1l0 1l0 -1M204 681l-1 -1l-1 0l-1 1l0 1M204 682h2M212 673l-1 1l1 1l1 1l-1 0l1 1l0 1M202 689l-1 0l-1 -1l1 1l-1 0l1 0l0 1l1 1l0 1l-1 1M202 690h2M183 706l0 1l0 -1l-1 0l-1 1l1 -1l-1 -1M183 707h2M203 704l0 1l0 -1l-1 -1l-1 1M203 705h2M202 689l1 0l1 1l1 0l-1 -1l-1 -1l-1 1l-1 0l-1 -1M202 690h2M218 673l1 1l-1 -1l0 -1l1 1l1 1l1 1l0 1M218 674h2M210 696l1 0l-1 -1l-1 0l-1 1l-1 -1l0 1l1 0l1 -1M210 697h2M201 694l1 0l0 1l-1 -1l1 -1l-1 0l-1 1l-1 -1l1 0l-1 0M201 695h2M196 713l0 -1l0 1l1 -1l1 -1l-1 -1l-1 -1l-1 1M193 719l1 1l-1 1l0 -1l-1 -1l-1 -1l-1 -1l1 -1l1 1M193 720h2M180 716l0 -1M204 697l1 1l-1 0l-1 0l1 -1M201 680l-1 1l0 -1l0 -1l1 -1l0 -1l-1 0l0 -1l0 1l-1 0M202 676l-1 1l-1 0l-1 -1l1 -1l0 1l1 -1l1 0l0 -1M210 694l-1 0l-1 0l1 1l-1 0l1 -1l0 -1l1 1M217 681l1 1l-1 1l-1 -1M204 689l0 -1l0 1l-1 -1l1 -1M204 690h2M218 684l0 -1l-1 0l0 1l-1 1l1 0l0 -1M218 685h2M204 692l-1 0l1 1l1 1l1 0l-1 1l1 1l1 1l1 -1M205 696l0 1l1 -1l0 -1l0 1l1 1M205 697h2M186 713l1 0l-1 1l0 1l-1 1M210 696l-1 0l1 -1l1 1l0 1l-1 0l0 -1l-1 -1M195 712l1 0l-1 -1l0 1l0 1l-1 0M185 708l-1 -1l0 1l1 0l1 1l-1 0l0 -1l0 1M209 684l1 0l1 1M209 685h2M217 676l0 -1l-1 1l0 -1l1 0l1 1M217 677h2M206 682l1 -1l-1 -1M200 706l1 -1l1 1l1 0l-1 0l1 -1l1 -1l1 0l1 -1M199 701l1 -1l-1 0l0 1l1 0l1 0l1 -1l-1 1M211 675l1 0l1 -1l0 -1l1 0M211 676h2M218 684l1 -1M188 699l1 0l-1 0l-1 0l1 0M188 700h2M221 672l0 1l1 0l1 1M221 673h2M186 710l1 -1l-1 1l-1 -1l0 -1l1 -1l0 -1M202 683l-1 0l-1 0l-1 0l1 1l1 -1M211 693l-1 -1l1 0l1 1l1 -1l1 -1l-1 1M215 680l-1 0l-1 0l1 1M215 681h2M210 678l0 1l1 1l-1 1M189 702l0 1l0 -1l1 -1l-1 -1l-1 1l1 1M189 703h2M190 714l0 1l-1 0l0 1l1 0M183 718l0 1l0 -1l1 1l1 1M183 719h2M217 669l-1 1l-1 0l1 1l1 -1l1 1l-1 1l-1 0M207 696l0 1l-1 0l0 1l-1 1M211 681l1 0l1 0l0 1l1 -1l-1 -1l-1 -1l-1 1M211 682h2M202 689l1 -1l-1 -1l-1 0l1 0l-1 -1l0 1l-1 0l0 1M203 680l-1 0l1 1l-1 0l-1 0l-1 -1l0 -1l-1 -1l-1 1M208 698l-1 1l1 0l-1 1l-1 0l0 1l-1 1l-1 1l1 0l-1 0M209 677l0 -1l1 -1l-1 0l1 1l1 1M185 715l1 0l1 -1l0 -1l0 -1M193 715l0 -1l0 -1l1 -1l0 -1l0 -1l1 0l-1 0l-1 1M193 716h2M214 688l-1 0l-1 -1M207 680l0 -1l0 -1l0 -1l-1 -1M221 675l-1 0l1 0l1 -1l0 -1l1 0l-1 0l0 -1l0 -1M221 676h2M184 721l-1 1l-1 -1l1 -1l-1 1l1 0l0 -1l-1 -1M203 679l1 1l1 0l1 -1M211 675l0 -1l-1 1l0 -1l-1 1l0 1l1 -1l0 1l0 1M211 676h2M209 695l1 1l-1 -1l-1 -1M209 696h2M187 719l-1 -1l1 1l-1 0M187 720h2M203 704l-1 1l0 -1l0 -1l1 -1l-1 0l-1 0l0 1M183 703l0 -1l-1 1l0 1l0 1l1 1l-1 0l-1 0M183 704h2M215 669l-1 1l0 -1l0 1l1 -1l0 -1l1 -1l-1 0M188 710l1 1l-1 1l-1 0l-1 1l-1 0M188 711h2M175 733l-1 1l-1 1l1 0l0 1l1 1M175 734h2M157 732l0 1l0 1l0 -1l-1 0M157 733h2M161 725l0 -1l0 -1l-1 0l1 0l0 -1l0 -1M149 711l1 -1l1 0l1 -1l1 -1l1 1l-1 0l0 1M167 735l0 1l-1 1l1 0l0 1l1 1l1 -1l0 -1l-1 0l1 1M167 736h2M153 735l1 0l0 1M156 731l0 1l0 -1l1 0l0 -1l1 0l-1 0M158 748l-1 -1l0 1M170 732l1 1l1 1l-1 1l1 0M151 726l0 1l1 1l-1 -1l1 1l0 1M155 751l0 1l-1 -1l1 0l1 0l1 0l1 -1l1 0l1 -1l1 -1M165 740l0 -1l-1 0l1 1l1 -1l-1 1l-1 1l-1 -1M165 741h2M170 733l1 1l1 -1l1 -1l0 1l-1 -1l-1 1l1 -1l-1 -1l-1 -1M161 729l-1 1l-1 1l1 0l-1 1l-1 0l0 -1M161 730h2M150 736l-1 -1l0 1l-1 0M150 737h2M152 718l1 -1l0 -1l0 1M152 719h2M167 734l1 0l-1 -1l-1 -1l-1 0l0 -1M167 735h2M156 723l0 1l-1 -1l1 -1l0 -1l0 -1l0 -1M156 724h2M152 714l0 1l-1 1l-1 -1M151 726l1 -1l1 -1l-1 0l1 -1l1 0l1 0l1 0M158 730l-1 1l1 -1l1 0l1 0M158 731h2M152 716l-1 1l0 1l0 -1M152 717h2M154 718l1 0l1 1M148 720l0 1l1 1M148 721h2M168 728l1 -1l-1 0l-1 0l1 1l-1 1l1 -1l0 -1l1 -1M169 732l1 -1l1 -1l1 0l1 1l1 1l1 0l-1 -1M152 713l0 -1l0 1l-1 0l1 1l0 1l1 -1l0 1l-1 0M167 741l1 1l0 1l-1 1l1 -1l0 1l1 -1l0 -1l-1 1l1 0M167 742h2M152 719l-1 0l-1 -1M160 729l-1 -1l1 1l0 -1l1 0l1 0l-1 1l-1 1l1 -1M160 730h2M172 732l-1 1l1 -1l1 0l0 -1l-1 1l0 -1l-1 -1l-1 0M172 733h2M147 722l-1 0l1 0M147 723h2M160 741l1 1l0 -1l1 0l-1 1M160 742h2M153 735l1 1l0 1l-1 -1l-1 1l-1 -1l0 -1l-1 1M175 738l1 0l1 1M175 739h2M156 732l0 -1l-1 -1l-1 1l1 1l0 -1M161 730l0 1l1 1l-1 -1l1 -1M161 731h2M153 737l1 0l0 -1l0 -1l1 -1l1 -1l-1 0M167 733l-1 1l0 1l1 1l-1 0l1 1M167 734h2M172 740l1 1l0 1l1 0l1 1M172 741h2M174 731l-1 -1l-1 1l1 0l1 -1l-1 1l1 0l1 1M163 725l-1 -1l-1 1l1 -1M163 726h2M173 737l1 1l0 1l0 -1l1 0M173 738h2M161 734l0 1l-1 0l-1 1M168 741l1 1l1 -1l0 1M163 742l0 1l-1 0l-1 -1l0 -1M163 743h2M154 739l-1 1l-1 1l-1 1l0 -1l0 1l0 1M156 741l1 0l-1 1l0 -1l0 1l0 1M156 742h2M176 738l0 -1l1 0l-1 1l0 -1l-1 0M176 739h2M162 738l-1 -1l0 -1l0 1l0 -1l-1 -1l-1 1l1 1l1 0M177 739l0 -1l1 1l-1 0l0 1l-1 0l-1 1M154 723l0 -1l-1 -1l0 1l-1 1l-1 1l1 -1M154 724h2M153 730l0 1l1 1l1 -1l1 -1l1 -1M170 736l-1 0l0 -1l-1 1l-1 0l0 1l0 1l1 -1l0 1M155 739l1 0l-1 -1l0 -1l-1 -1l-1 1M146 721l0 1l1 1l1 0l-1 -1l1 -1M154 724l0 1l0 1l-1 0l0 -1l1 -1M159 747l1 1l-1 -1l-1 1l-1 -1l1 -1M159 748h2M150 732l1 0l-1 -1M165 743l-1 0l-1 -1l1 1M157 750l-1 -1l0 1l1 0l-1 0l1 1l1 0l-1 -1l-1 -1l-1 -1M156 723l1 1l-1 1l1 1l0 -1l1 1l0 1l0 -1l1 0M163 739l1 1l0 -1l0 -1l1 0l-1 1l0 -1M151 741l-1 1l-1 -1l-1 1M149 716l-1 1l-1 0l1 -1l-1 1l0 -1l0 -1M149 717h2M166 726l0 -1l-1 1l0 1l1 -1l-1 0l-1 0l1 0l-1 -1M155 727l-1 1l-1 0l0 -1M155 728h2M152 722l1 0l-1 1l-1 -1l1 0l-1 0l-1 0l-1 0M154 730l-1 -1l0 1l0 -1l1 1M145 718l1 1l-1 -1l-1 1l1 -1l1 0l1 -1l1 -1l-1 0l-1 -1M145 719h2M169 730l1 0l0 -1l0 -1M159 720l1 0l1 1l1 0M175 736l1 1l0 1l1 1l0 -1M163 738l1 1l1 -1l0 1l1 0l1 0M165 741l0 1l-1 0l1 0l1 1l1 0l-1 1M156 734l-1 -1l-1 1l0 1l-1 1l-1 0l-1 1l-1 -1M159 736l1 -1l-1 0l-1 1l-1 0l0 1l1 1M159 737h2M154 728l0 1l0 1l-1 1M154 729h2M156 723l0 -1l1 -1l-1 1l0 -1l1 -1l0 1M153 727l1 0l-1 -1l-1 0l0 1l0 -1l1 0M153 728h2M123 745l0 -1l0 1l-1 1l-1 1l1 0M123 746h2M116 750l0 1M131 748l1 1l1 0M125 750l-1 1l-1 1l-1 1l-1 0l1 -1M119 740l0 -1l-1 -1l-1 1l-1 -1l0 -1l-1 1M120 750l1 1l0 1l-1 0l-1 1l-1 0l0 -1l1 -1M120 751h2M127 744l0 1l0 1M139 747l0 -1l1 0l0 -1l-1 -1M139 748h2M131 751l0 1l1 -1l-1 0l1 1l1 -1l1 0l-1 1M131 752h2M141 749l0 -1l-1 1M141 750h2M123 747l-1 -1l-1 0l1 -1l-1 -1M111 745l-1 1l1 1l-1 0l-1 1M134 749l-1 -1l1 -1l1 -1l0 -1l-1 -1l-1 0l-1 1M133 742l-1 -1l1 -1l-1 -1l-1 1l0 1M114 751l1 -1l-1 1l-1 0l-1 0l0 -1M116 744l-1 0l-1 1l-1 0M116 745h2M121 746l1 1l1 -1l0 -1M126 751l-1 0l1 1M112 737l-1 1l0 -1l1 1l-1 -1l0 -1M120 742l0 1l0 -1l-1 0l-1 1M112 744l-1 1l-1 -1l-1 1l1 -1l0 1l1 -1l0 1l0 -1M115 751l-1 1l-1 0l-1 -1l-1 -1M115 752h2M118 744l0 -1l-1 1l1 -1l1 0l0 -1M118 745h2M128 752l1 1l1 -1l-1 -1l-1 -1M136 745l1 -1l-1 -1l-1 0l-1 0l0 1l1 -1l0 1l-1 -1M116 739l1 1l-1 -1l-1 1l0 -1l-1 -1l1 1l-1 0l0 -1l0 1M109 751l0 -1l-1 -1l-1 1l1 1l-1 -1l0 -1M109 752h2M140 747l-1 -1l0 -1l0 1l0 -1l1 1l-1 -1l1 -1M140 748h2M133 741l0 1l1 0l-1 0l1 0M134 749l1 1l-1 0l0 1l1 0l1 1l1 1l1 -1l-1 0l-1 -1M134 750h2M124 739l1 1l1 -1l0 1l0 1l1 0M117 746l0 1l1 0l0 -1l1 -1l-1 0l1 0l0 -1M117 747h2M116 741l0 1l-1 0l0 -1l0 -1l1 0l0 1l1 -1l-1 -1l1 1M116 742h2M118 751l-1 -1l0 1l1 1M118 752h2M115 751l1 1l0 1l0 1l-1 1l1 1l1 0M115 752h2M123 744l0 1l1 1l1 0M131 743l-1 -1l1 -1l1 0l1 -1l1 1l1 0l-1 0M109 751l-1 -1l1 1l1 -1l0 -1l1 1M118 748l1 -1l0 1l0 1l-1 1l1 0M137 743l1 0l-1 -1l1 -1M137 744h2M119 735l1 -1l0 -1l1 0M122 747l0 -1l-1 1l0 1M130 748l-1 -1l0 1l0 1l1 1l0 -1M130 749h2M121 751l0 1l-1 0l0 -1l-1 1l1 1l1 0M121 752h2M127 748l0 1l-1 0l-1 1l-1 1l1 1l1 -1l1 0M126 740l-1 1l-1 1l1 1l0 1l0 -1l-1 0l1 -1l0 -1l1 -1M131 745l-1 1l1 0l1 -1l-1 -1l1 -1l1 -1M138 748l1 0l0 -1l1 1l1 0l1 0l1 -1l1 1l1 0l1 -1M119 741l-1 0l-1 1l1 -1l-1 0l-1 -1l0 1l-1 0M119 742h2M110 743l1 -1l-1 1l0 -1l0 -1l0 1l1 1M110 744h2M127 749l1 1l1 -1l-1 -1l-1 1M121 751l-1 1l-1 0l1 0l1 0l-1 1l0 1M121 752h2M124 747l1 0l-1 0l1 -1l-1 0l-1 0l-1 -1l1 1l-1 0M135 748l0 -1l1 1l0 1l-1 1l1 1l1 -1l-1 0l-1 0l-1 1M129 740l1 -1l1 1l0 -1l-1 1M129 741h2M120 750l1 0l-1 0l-1 -1l0 -1l0 -1l-1 1l1 0M115 739l-1 1l0 1l0 1M114 750l-1 -1l-1 -1l-1 1l1 1l0 -1l-1 -1M110 750l-1 0l0 1l1 0l0 1l-1 -1l-1 -1M112 750l1 1l1 1l1 0M127 747l0 -1l0 1l1 1l-1 1l1 0l1 0l1 -1l-1 0l1 0M127 748h2M116 752l-1 0l1 1l-1 1l1 1M117 750l-1 -1l0 -1l0 -1l-1 1M117 751h2M127 745l0 -1l-1 0l-1 0l-1 1l-1 -1l-1 1M127 746h2M126 737l0 -1l-1 -1l1 1l-1 1l1 1l1 1l1 -1l1 -1l1 1M124 746l1 -1l-1 -1l1 0l-1 -1l1 1l1 -1l1 0M129 737l0 1l-1 -1l1 -1l-1 -1l0 -1M128 741l-1 -1l-1 -1l-1 1l1 1M128 742h2M121 752l1 1l-1 1l-1 -1l-1 1l1 -1l1 1l-1 0M110 746l1 -1l0 -1M110 747h2M123 752l1 0l1 0l0 -1l-1 0l1 -1l0 -1l1 0l0 -1M134 750l-1 1l-1 -1l-1 0l0 1l-1 1l-1 0l-1 -1l1 -1M126 751l1 1l1 -1l1 -1l-1 0l-1 1M123 747l1 0l0 -1l-1 -1l1 -1l1 0l1 1l1 1M130 745l-1 -1l1 -1l1 -1l-1 0l-1 -1l1 -1l1 0M125 750l0 -1l-1 0l0 1l1 -1l0 1l-1 0l-1 -1M115 741l0 1l-1 -1l-1 -1l-1 1l1 1M115 742h2M124 749l1 -1l1 1M124 750h2M121 744l-1 -1l-1 -1M138 748l0 -1l1 0l0 -1l-1 -1l1 0l0 -1l0 -1l0 -1M138 749h2M127 743l-1 0l0 -1l-1 0l0 -1l-1 -1l-1 0M124 751l-1 -1l1 -1l0 1l-1 1l1 0l-1 -1l0 1M124 752h2M126 744l-1 -1l-1 0l0 1l-1 -1M129 737l1 0l-1 -1l1 0l-1 1M129 738h2M130 744l1 0l1 1l-1 1M134 746l1 0l-1 0l0 1l-1 0M130 747l1 0l1 -1l0 -1M118 751l-1 0l1 0l1 -1l-1 0l-1 1l-1 -1l-1 -1M140 743l1 -1l-1 0l-1 0M140 744h2M122 741l1 -1l1 0l-1 -1l-1 -1l1 0l1 0l0 1l1 1M117 745l0 -1l-1 1l-1 1l0 -1l-1 -1M111 749l1 1l-1 -1l1 0l1 0l-1 -1l0 -1l-1 0l-1 0M111 742l1 1l1 1l1 -1l0 -1l0 1M131 741l1 -1l0 -1l1 0l1 0l-1 1l0 1l-1 0M126 747l1 1l-1 1l1 0M126 748h2M160 747l1 1l1 -1l-1 0l-1 -1M181 717l1 0l0 -1l-1 1l-1 0l-1 -1l1 -1l0 1M191 728l0 1l-1 0l1 -1l1 1M175 713l1 -1l1 -1l1 1l-1 0l0 1l0 -1l-1 1M177 739l-1 -1l1 1l0 1M186 701l-1 -1l-1 -1l0 1l-1 -1M186 702h2M154 723l1 0l0 1M179 711l1 0l0 1l0 -1l-1 1l1 -1l-1 1l0 1l-1 -1M179 712h2M147 723l1 -1l-1 1M177 728l-1 -1l1 -1l-1 1l0 -1M169 725l1 -1l-1 -1l1 -1l-1 1l0 -1M178 731l-1 0l1 0l-1 -1l-1 -1M161 735l1 0l1 1l0 -1l1 0l-1 0l-1 0l1 -1M161 736h2M191 745l-1 -1l0 -1l1 1l1 0l1 1l0 1M191 746h2M175 721l0 1l1 -1M191 720l0 1l0 1l0 1l-1 -1l0 -1l1 0l-1 -1l1 -1M191 721h2M177 744l1 -1l-1 0l1 -1l1 1l-1 -1l0 1l-1 1M177 745h2M170 743l-1 -1l1 0l0 -1M167 727l0 1l1 0l0 -1M174 712l0 1l-1 1l-1 1l-1 0l-1 1l0 -1M174 713h2M169 742l-1 1l-1 1l1 0l1 -1l1 0l-1 -1l-1 1M169 743h2M183 711l-1 0l-1 0M183 712h2M175 718l-1 -1l-1 1l0 1l1 -1l1 -1M180 738l1 1l-1 -1l1 1l0 1l-1 0l-1 0M181 734l-1 1l1 -1l1 0l0 -1l-1 -1l-1 0M189 698l-1 1l-1 0l1 -1l-1 0l1 0M189 699h2M168 717l1 1l0 1l0 1l0 1l-1 1l1 1l-1 0M171 748l1 -1l1 1l-1 0l1 1l0 -1l1 -1l0 -1l-1 1M171 749h2M170 738l-1 1l1 -1l-1 0M194 720l1 1l-1 0l-1 0l1 1l-1 0M169 734l1 0l1 -1l-1 -1l1 1M149 728l-1 -1l1 -1l1 1M192 725l1 -1l-1 -1l1 0l-1 0M192 726h2M178 730l0 -1l1 1l0 -1l-1 -1M189 706l-1 1l0 -1l1 -1l-1 1l-1 -1l1 1l1 -1l1 0l1 1M157 743l-1 0l-1 0l-1 -1l1 1l0 -1l-1 1M157 744h2M171 719l-1 -1l-1 -1l1 0l-1 1l-1 0l-1 -1M171 720h2M160 724l0 1M167 725l-1 -1l-1 0l1 0l-1 0l-1 0l1 0M186 732l1 1l-1 -1l1 0l0 1l1 1l1 0M176 738l1 -1l1 0l1 0M173 734l-1 1l1 0l1 -1l0 -1l-1 -1M184 721l0 1l-1 0l1 1l0 1l0 -1M184 722h2M163 730l0 -1l-1 0l1 1l-1 0l0 -1l1 0l-1 -1M163 731h2M151 709l-1 1l1 -1M171 748l-1 0l-1 -1l1 0M188 738l-1 0l-1 -1l-1 -1l-1 -1l-1 0l1 1l1 -1M188 739h2M174 734l0 -1M174 735h2M193 752l-1 -1l-1 -1l0 1l1 1l-1 0l1 1l1 -1l0 1M173 721l1 1l0 1l0 1M187 747l1 -1l0 -1l1 0l-1 1l1 -1l1 1l1 -1M162 736l1 0l1 1l0 1M175 714l-1 0l-1 1l1 -1l1 1l1 1M175 715h2M187 724l-1 0l-1 -1l0 -1l1 0l0 1M163 745l1 0l-1 1l0 1l0 -1l-1 0l1 0M163 746h2M177 712l-1 1l1 1l0 1l1 1M160 734l0 -1l-1 1l-1 1l0 -1l1 1l1 1l-1 0l1 0M157 725l0 -1l-1 -1l-1 -1l0 1l0 1l-1 1M157 726h2M186 730l1 -1l1 -1l1 0l0 -1M186 731h2M190 723l-1 0l0 -1l-1 -1l1 0l-1 1l0 1l1 0l-1 -1M178 738l1 0l0 1l-1 0l-1 1M172 719l-1 0l0 1l0 -1M182 729l0 -1l-1 -1l0 1M182 730h2M160 728l0 -1l0 -1l0 -1M172 749l1 0l0 1l-1 1l1 1l-1 0l-1 1l-1 0l0 1M172 750h2M193 700l-1 1l-1 -1l1 1M182 710l1 0l-1 -1l1 1M165 750l1 1l-1 1l1 1l1 -1M165 751h2M186 702l0 1l1 1l0 1M164 735l1 1l0 -1l1 0M165 745l-1 -1l0 1l1 1M162 717l0 1l-1 -1l-1 -1M162 718h2M173 741l0 1l1 1l-1 1M181 737l0 -1l-1 -1l-1 0l-1 -1M173 720l-1 -1l1 -1l0 1l-1 -1l1 -1l-1 -1M173 721h2M183 738l1 -1l-1 1l0 -1l1 -1M183 739h2M165 748l1 1l0 -1l1 -1M193 737l-1 1l-1 0l1 -1l0 -1l-1 1l1 1l1 -1l1 0M193 738h2M177 720l0 -1l-1 0l-1 1l-1 1l0 -1l-1 0l-1 1l1 0M160 711l0 -1l-1 0l0 1l0 -1l-1 -1l-1 -1l1 -1l0 1M160 712h2M169 724l-1 1l0 1l-1 1M178 735l1 -1l1 -1l-1 0l-1 -1l-1 1l1 0l0 -1M162 736l-1 0l0 -1l-1 -1l-1 1l1 0M188 736l0 -1l1 -1l-1 -1M188 737h2M161 745l0 1l1 1l0 1l1 1l-1 0l1 -1l0 1M161 746h2M162 725l-1 1l0 1l1 -1l1 -1l1 1l-1 -1M157 739l1 0l-1 1l1 1l0 1l0 1l-1 0M180 708l0 1l0 -1l0 1l1 -1l-1 0M178 732l-1 0l1 -1l0 -1l0 1l1 1l0 -1M180 737l0 -1l0 -1l-1 1M180 738h2M161 720l-1 0l-1 1l-1 1l-1 0l0 -1M187 715l-1 -1l-1 -1l0 1l-1 -1l1 0l1 0l-1 0M162 739l-1 1l-1 1l1 -1l-1 -1l1 1M179 744l-1 0l1 1l0 -1l-1 1M179 745h2M176 730l0 -1l-1 -1l-1 -1l-1 0l0 -1M165 715l0 1l-1 1l1 0M168 751l1 0l0 -1l1 1M168 752h2M174 722l-1 -1l0 1l0 -1l-1 1l-1 -1M174 723h2M148 717l0 1l1 0l1 0l1 -1l-1 1M149 713l-1 -1l0 1l1 1l1 0l0 -1l1 1M170 715l1 -1l0 -1l0 -1l0 -1l0 -1M170 716h2M177 733l0 -1l-1 1l0 -1l0 1l-1 -1M188 714l1 -1l0 1l0 -1l1 -1l-1 1l-1 1M188 715h2M184 724l1 -1l1 1l1 1l-1 1l0 1l1 -1l-1 0M184 725h2M178 727l1 -1l1 0l1 0l1 -1l0 1l-1 -1M149 730l1 1l1 1l-1 0M191 698l-1 0l-1 1l0 1l-1 -1l-1 0l1 0l1 -1M191 699h2M162 747l1 1l-1 -1l-1 1M162 748h2M158 747l-1 0l1 0l1 -1M180 709l1 1l0 1l1 -1M171 717l0 -1l-1 0l0 1l1 -1l-1 1l-1 -1l-1 -1M161 723l1 1l-1 -1l1 1l0 -1l1 -1M154 749l1 -1l0 1l-1 0l1 -1l0 1l1 -1M154 750h2M184 745l0 -1l1 1l1 1l1 -1l1 -1M184 746h2M187 740l0 1l1 0l-1 -1l-1 0l-1 1l-1 0l-1 1M153 728l-1 0l1 1l-1 0l1 1M188 721l1 1l-1 1l0 -1l0 1l1 1l-1 1l-1 1l-1 0M193 705l-1 0l1 1l-1 -1l1 -1l-1 -1M193 706h2M156 743l0 -1l0 -1l-1 0l-1 1M182 744l0 1l-1 0l1 0M194 708l0 1l1 0M194 709h2M165 731l1 1l0 1l0 1l1 0l0 -1l-1 1l-1 1l-1 0M189 752l-1 -1l1 0l0 -1l-1 0l1 0l1 -1l-1 0M188 721l1 -1l-1 1l0 1l-1 1l0 -1l1 0l1 1M188 722h2M158 741l-1 -1l-1 1l1 -1l0 -1l1 0l1 -1l1 0l1 1M189 703l-1 0l-1 0l-1 0l0 1M163 725l0 -1l1 -1l1 0l0 -1l-1 0l0 1M163 726h2M170 720l-1 -1l1 -1l0 -1l-1 1l0 1M159 729l-1 -1l-1 0l0 1l1 -1l-1 0l-1 -1l-1 -1M176 742l-1 1l1 -1l-1 0l0 1l-1 0l-1 1M164 730l-1 -1l0 -1l1 1l-1 1l1 0l1 0l0 -1l1 0l-1 0M160 727l1 1l-1 -1l1 0l0 -1l0 -1l0 1l1 0l1 0M164 746l1 1l-1 0l1 -1l-1 1M184 727l0 1l-1 0l0 1M153 722l1 -1l0 1l-1 -1l0 1l1 1l1 0l-1 -1M153 733l1 1l1 1l0 1l0 -1l0 -1l1 0M167 743l1 1l-1 1l1 -1M167 715l0 -1l1 1l-1 -1l-1 -1l1 1l-1 0l0 -1M151 727l0 -1l0 -1l0 -1l0 -1l-1 0l1 0l-1 -1M155 710l1 -1l0 1l0 1M148 721l-1 0l1 -1l-1 1l-1 1M184 735l-1 0l-1 1l-1 -1l-1 1l1 1M174 748l0 1l1 0l-1 1l0 1l-1 -1l1 1l1 0l1 0M183 721l0 1l0 -1l1 1l-1 -1l-1 1l1 1M168 715l1 0l0 -1l1 -1l-1 -1l0 -1M168 716h2M181 724l0 -1l-1 -1l1 0M181 725h2M159 724l-1 1l1 -1l0 -1l1 0l-1 -1l0 -1M159 725h2M186 744l0 1l-1 1l0 1l0 -1l0 1l1 -1l0 1M177 724l1 1l-1 -1l1 1l-1 1l0 1M168 746l1 0l0 -1l0 1l1 1l-1 0M168 747h2M155 742l1 1l-1 0l0 1l1 1l1 -1l1 1M176 726l0 1l-1 -1l0 1l1 -1l-1 -1l1 -1l0 -1l1 0M181 736l0 1l1 -1l-1 -1l0 1l-1 0l-1 1M158 717l-1 -1l-1 -1l0 1l1 1l-1 0l0 -1M158 718h2M150 713l-1 1l-1 0l1 -1l0 -1l-1 -1l0 -1l-1 -1l0 -1M153 721l0 -1l-1 0l1 1l0 1l-1 1l1 0M153 731l-1 -1l1 1l-1 1l-1 -1l0 -1M153 732h2M149 712l1 0l1 -1l0 -1l-1 0l0 -1l-1 -1l-1 -1l-1 1l0 -1M149 713h2M191 731l-1 0l0 -1l-1 1M180 740l0 1l-1 0l-1 0l0 1l-1 -1M184 713l-1 -1l0 -1l1 0l0 -1l-1 1M176 725l-1 0l0 1l-1 1M181 748l-1 0l0 1l-1 0l1 0l1 1l-1 -1M176 745l1 -1l0 1l-1 0l-1 0l0 1M176 746h2M184 737l1 -1l-1 0M177 734l1 0l-1 -1l-1 0l1 -1l1 1M193 719l1 0l1 -1l-1 1l1 1l1 0M193 720h2M163 752l0 -1l0 1l1 -1l1 -1l-1 -1l-1 -1l-1 0M166 726l-1 -1l1 -1l-1 1l-1 1l-1 0l-1 1l1 0M151 714l-1 -1l-1 -1l-1 1l0 1l1 0M193 711l-1 -1l0 1l0 -1l1 1l1 0l1 -1M193 712h2M193 734l-1 1l-1 1l-1 1l0 -1l-1 0l1 0M180 713l1 1l-1 0l-1 1l1 0M168 716l0 -1l-1 1l-1 1l1 1l0 1l1 0l0 -1l0 1M182 724l0 -1l-1 1M182 725h2M177 739l0 1l1 1l-1 0l1 0l1 -1l1 -1l0 -1M177 740h2M161 737l-1 -1l0 1l0 -1l0 1l-1 -1l1 0M161 738h2M188 748l1 1l1 1l1 1l-1 -1M188 749h2M165 746l1 1l-1 1M149 717l1 -1l-1 1M169 717l1 -1l1 0l1 -1l0 -1l-1 0M188 698l1 -1l-1 1l1 0l0 1l-1 -1l1 1l-1 0M161 723l1 -1l1 -1l1 1l-1 0l-1 0l-1 1M161 724h2M168 740l0 -1l-1 -1l1 1M183 738l-1 0l-1 -1l-1 1l1 1l1 -1l0 -1M163 741l0 1l-1 -1l0 -1l-1 -1l0 1M153 737l1 -1l1 1l1 -1M166 729l-1 0l1 0l1 -1l0 -1l0 -1l1 -1l-1 -1l-1 1M164 749l1 -1l1 -1M173 743l-1 0l1 -1l-1 -1l1 0l-1 1l0 -1l-1 -1M176 728l1 1l1 -1l1 -1l-1 -1l-1 0l-1 0l-1 -1l-1 0l-1 -1M176 729h2M168 745l1 1l-1 0l0 1l1 -1l-1 1l1 1l-1 -1M168 746h2M185 741l1 -1l0 -1l-1 1M160 725l1 1l-1 1l1 -1l1 0l1 -1l0 1l0 1M160 726h2M160 731l0 -1l1 1l0 1M165 717l-1 0l-1 0l1 -1l0 -1l1 -1l0 -1M165 718h2M223 748l0 -1l0 1l1 1l0 -1l-1 0l1 -1l-1 1l0 1l1 0M219 739l-1 0l1 -1l-1 0l0 1l-1 1l1 0l-1 0l-1 0M188 733l-1 1l1 1l1 -1l1 0M188 734h2M226 752l0 -1l0 1l0 -1l1 0M218 736l0 -1l-1 -1l0 1M225 746l1 -1l1 1l1 1l1 -1l1 -1l-1 -1l1 0l1 -1M211 736l0 1l-1 0l0 -1M222 746l0 1l-1 1l-1 1l1 1l1 0l0 1M222 747h2M215 738l1 -1l1 -1l-1 -1l0 1M182 729l0 1l-1 1l1 -1l0 1l-1 1M223 746l0 -1l-1 1l0 1l-1 0M212 737l-1 0l1 -1l1 -1l1 0M212 738h2M185 728l0 1l1 1l-1 -1l-1 -1l-1 1l-1 -1l0 1l-1 -1M226 745l0 -1l-1 1l1 1l0 -1M217 737l1 1l1 0l1 -1l1 1l1 0l1 1l-1 -1M217 738h2M193 737l0 1l1 0l1 0M209 738l1 -1l0 -1l0 -1l1 0l1 -1l1 0l1 -1l-1 -1l-1 -1M209 739h2M799 629l1 1l0 1l1 1l1 1l-1 0M789 563l0 -1l1 1l-1 1l0 -1l-1 0l0 1l1 1M789 564h2M788 611l1 0l0 -1M788 612h2M800 610l-1 0l1 1l0 -1l1 -1l-1 0l-1 0l1 0l1 -1M800 611h2M792 620l0 -1l1 1l1 0l1 0l-1 0l0 -1l-1 0M792 621h2M792 598l0 -1l1 1l-1 -1l-1 1l-1 -1M792 580l0 1l0 1l1 1l1 -1l-1 -1l1 1M797 587l0 1l-1 -1l1 -1l1 1l-1 -1M797 588h2M797 636l-1 1l-1 -1l1 0l0 -1l-1 0l0 -1l-1 1l-1 0M797 637h2M790 648l0 -1l1 -1M793 597l-1 -1l1 -1l1 0l-1 -1l1 1M789 567l-1 0l0 1l-1 1l1 -1l-1 1l1 1l-1 -1M797 636l1 1l-1 -1l-1 0l0 -1l-1 0l-1 0M797 637h2M790 646l0 -1l0 -1l1 -1l1 0l-1 -1l1 1l-1 -1M790 647h2M786 616l1 0l-1 -1l-1 0l1 1M786 617h2M794 555l-1 -1l0 1l0 1l-1 1l1 1l1 0l-1 1M794 556h2M797 618l1 0l1 0l-1 0l-1 -1l-1 0l-1 1M797 629l-1 0l-1 0l-1 1l1 1l-1 0l-1 -1l1 0l1 -1l1 1M796 630l-1 1l1 1l-1 -1l-1 -1l-1 -1l0 -1M796 631h2M794 602l0 -1l1 0l1 -1l-1 0l0 -1l1 0l1 -1l0 -1l0 1M786 643l-1 -1l-1 -1l0 1l-1 0l-1 1l-1 1M784 638l-1 1l1 0l0 -1l-1 1l0 1l0 -1M800 598l0 -1l1 -1l1 1l1 1l1 1l0 1l-1 1l1 1M800 599h2M794 566l-1 0l-1 -1l1 0M797 600l0 1l-1 0l-1 0l-1 -1l1 0l1 1l0 1M797 601h2M786 640l1 -1l0 -1l-1 1l0 1l-1 -1l0 -1M794 614l0 1l-1 1l-1 -1l1 0l-1 -1l-1 0l0 -1M794 615h2M798 632l-1 0l0 1l-1 1l0 -1l0 -1l0 1l-1 -1M798 633h2M787 615l-1 1l1 -1l0 1l-1 -1l-1 -1l-1 0l-1 0l0 1M794 562l-1 1l1 -1l-1 1l-1 1M793 562l0 -1l1 0l1 0l0 1l0 1l0 1l1 1l-1 1l1 1M799 558l-1 -1l-1 1l-1 0l0 -1M789 580l0 1l0 1l1 0l1 -1M792 583l-1 -1l-1 0M788 602l1 -1l0 -1l1 1l-1 0l0 -1M788 603h2M789 612l-1 -1l-1 -1l0 -1l0 -1l1 0l1 1l1 -1l1 1M797 586l1 -1l1 1l1 -1M787 594l1 0l-1 0l1 -1l-1 0l0 -1M800 565l0 -1l0 1l1 1l0 -1M800 566h2M798 588l-1 0l-1 0l-1 0l-1 -1l-1 1l-1 1l0 1l-1 -1M790 564l1 1l1 -1l1 1l0 -1l0 1M786 615l1 -1l1 1l1 0l-1 0M786 616h2M786 629l-1 0l0 -1l-1 0M786 630h2M796 637l-1 -1l1 -1l0 -1M796 638h2M790 603l-1 -1l-1 0l0 -1l1 0l-1 -1l-1 0l-1 -1l1 -1l-1 -1M790 604h2M789 647l-1 1l1 -1l1 -1l1 1l-1 0M790 585l0 1l-1 -1l0 -1l0 -1l-1 0l1 1l1 -1l-1 1M796 599l1 0l-1 -1l-1 1l-1 -1M793 636l-1 -1l-1 0l1 0M793 637h2M799 563l-1 1l1 -1l-1 1l-1 1l0 1M794 562l1 0l1 0M800 609l-1 1l0 -1l0 1M800 615l-1 1l0 1l0 -1l1 -1M800 616h2M791 584l1 -1l0 -1l0 -1l1 -1l1 -1M791 585h2M788 567l1 0l-1 0l-1 1l1 1l-1 -1M794 586l0 1l0 -1l-1 -1l1 0l1 -1M794 587h2M791 636l1 1l1 0l0 1l1 0l0 -1M787 598l0 -1l-1 -1l1 -1l1 1M796 562l0 1l0 1l-1 1M791 556l-1 0l-1 1l-1 1l-1 -1M799 636l-1 0l0 1l-1 -1l1 1l0 -1l-1 -1l1 1M799 612l-1 0l-1 0l1 -1l1 1l-1 -1M783 637l0 -1l0 1l-1 1l1 -1l0 1M795 598l1 1l-1 -1l-1 0M800 579l1 0l-1 -1l-1 0l-1 0l-1 1l1 0l0 1l-1 1l1 -1M800 580h2M791 617l-1 1l1 1l-1 0l1 1M791 618h2M788 558l-1 1l0 -1l0 -1l-1 1l-1 1l1 1M788 559h2M797 606l-1 0l-1 0l1 -1l1 1l0 1l1 0l-1 -1M795 605l1 0l-1 1l-1 0l-1 1l1 0l0 1M800 627l0 -1l1 1l-1 -1l1 1l1 -1M790 612l0 1l0 -1l-1 1l1 1l1 1l-1 0l-1 -1M789 599l-1 1l1 -1l-1 0M796 569l0 -1l0 1l-1 1l0 1l1 1l-1 0l-1 0l0 1l-1 0M792 559l0 1l-1 1l-1 0l-1 1l-1 1M792 632l0 1l1 1l0 -1l-1 -1l1 1l-1 0l0 -1M792 633h2M799 567l-1 1l1 -1l0 1l0 -1l1 0l1 0M799 568h2M791 621l1 0l-1 1l0 -1l0 1l0 -1l-1 0l1 1l-1 0M791 615l0 -1l0 1l1 0l1 1l1 0M787 600l-1 1l-1 1l0 -1l-1 -1l-1 0M787 601h2M795 609l-1 -1l1 0l0 1l1 1l0 1M795 610h2M789 644l-1 1l-1 -1l0 -1l0 1M783 638l-1 0l-1 -1l-1 0M793 613l-1 0l1 -1l1 1l-1 -1M798 582l1 0l-1 -1l-1 1l-1 1l0 -1l-1 -1l0 1M794 590l0 -1l-1 -1l-1 1l-1 -1l1 -1l1 1M794 591h2M791 644l1 1l-1 0l1 1l1 -1l0 1l1 0M791 645h2M799 628l0 1l-1 1l1 -1l1 -1l-1 1l-1 1l1 -1l0 -1M790 571l0 -1l-1 0l-1 -1l-1 0l-1 1l1 0M790 572h2M795 571l0 1l-1 1l0 1l1 -1l1 1l1 1M795 572h2M791 560l-1 0l1 -1l1 0M797 597l1 1l1 -1l-1 -1l-1 0l1 -1M793 563l1 0l1 -1l1 0l1 1l-1 1M795 628l1 -1l1 0l-1 1l-1 1l1 1M797 600l0 -1l-1 0l1 1l1 -1l0 -1l-1 0M791 636l0 -1l-1 0l0 1l0 -1l-1 -1l-1 -1l0 -1l-1 1M791 637h2M794 641l-1 1l0 -1l0 1l-1 1l-1 -1M797 596l1 1l-1 1l1 -1l0 -1l-1 1l1 -1l-1 1M787 599l1 1l1 -1l1 0l-1 1l0 -1l1 1l1 -1l-1 0M798 648l1 -1l-1 -1l-1 -1l1 -1l-1 -1M788 562l-1 0l0 1l-1 0l1 -1l-1 0l-1 -1M792 570l-1 -1l1 -1l0 1l-1 0l-1 0M797 562l0 1l0 1l-1 1l0 1l1 1l0 -1l-1 0l-1 -1l1 1M797 563h2M791 607l-1 1l-1 0l1 1l-1 -1l-1 0l1 0l1 -1l1 0M791 608h2M796 647l1 -1l1 1l1 0l1 1l1 0l-1 -1l0 -1M796 648h2M795 636l-1 0l-1 -1l1 1M795 637h2M789 644l1 -1l1 1l1 0l1 0l1 1M800 601l0 1l0 1l-1 1l1 1M800 602h2M791 641l0 -1l-1 -1l0 -1M791 642h2M797 630l-1 0l1 0l0 1l0 1l1 0l1 -1l-1 -1l-1 1M797 631h2M797 578l1 -1l1 1l0 1l-1 1l-1 -1l1 -1l1 0l-1 -1M797 596l-1 -1l-1 0l-1 -1l1 -1M797 597h2M794 579l-1 0l1 1l0 1l1 -1l1 1l0 1l1 0M798 647l1 -1l-1 1l1 1l1 -1l0 1l0 1l0 1l-1 -1M800 585l1 1l1 0l0 -1M792 557l-1 1l0 -1l1 0M798 575l1 0l0 1l1 -1M791 642l-1 1l-1 1l-1 1l0 -1M787 632l0 -1l-1 0l-1 -1M796 558l0 1l-1 1l0 1M789 646l1 1l1 1l-1 -1l0 1l1 -1l1 1M796 605l-1 1l-1 0l-1 0l1 1l1 -1M796 606h2M791 610l-1 0l1 1l0 -1l1 -1l-1 1l0 -1l1 0M787 574l0 -1l1 0l0 1l1 1l0 -1M787 633l-1 0l1 -1l0 1l0 1M796 571l-1 -1l-1 -1l-1 1M796 572h2M794 593l0 1l-1 0l0 -1l-1 1M787 579l0 -1l-1 1l-1 1l-1 -1l-1 0l0 1l1 -1l1 1M796 576l1 -1l-1 -1l-1 -1l-1 1l1 -1l-1 -1l-1 -1l-1 0l-1 -1M796 577h2M797 563l-1 1l1 -1l-1 -1l1 1l-1 1l1 -1l1 -1M795 565l1 -1l1 0l1 0l-1 1M249 646l0 1l0 1l0 -1M249 647h2M254 653l-1 -1l1 0l0 -1l-1 -1l0 1M254 654h2M249 647l-1 -1l1 -1l1 -1l-1 1l1 0l1 -1M249 648h2M204 656l0 1l-1 1l1 1l1 -1l-1 1l1 1M204 657h2M274 649l-1 0l-1 -1l1 0l1 -1l1 1M274 650h2M238 654l-1 -1l-1 0l-1 1l0 1l-1 0l0 1l1 -1l-1 0l-1 -1M238 655h2M280 643l-1 -1l1 -1l0 -1l-1 1l0 1l0 -1l1 -1M280 644h2M286 646l0 -1l-1 1l1 0M283 647l1 1l0 -1l1 0l-1 0l-1 -1M284 647l0 1l-1 0l-1 1l1 -1l-1 1l-1 -1l1 -1l-1 0l0 1M284 648h2M291 649l0 1l-1 1l0 -1M291 650h2M289 646l0 -1l-1 -1l-1 1l0 1l1 1l0 -1l1 0l-1 0l-1 0M287 645l0 1l-1 -1l-1 1l0 -1l1 0M292 648l-1 -1l1 0l-1 -1l0 1l0 1l1 -1"/>
<g shape-rendering="crispEdges" stroke="#c2c2c2" stroke-width="1" ><path transform="translate(0,0.5)" d="M0 0m68 1h2m311 0h8m22 0h10m311 0h2m-368 1h15m40 0h15m-80 1h10m70 0h10m-98 1h8m90 0h8m-113 1h7m106 0h7m-399 1h2m271 0h6m120 0h6m271 0h2m-411 1h6m132 0h6m-149 1h5m144 0h5m-159 1h5m154 0h5m-169 1h5m164 0h5m-178 1h4m174 0h4m-186 1h4m182 0h4m-442 1h2m246 0h4m190 0h4m246 0h2m-450 1h4m198 0h4m-210 1h4m206 0h4m-217 1h3m214 0h3m-224 1h4m220 0h4m-231 1h3m228 0h3m-237 1h3m234 0h3m-243 1h3m240 0h3m-249 1h3m246 0h3m-255 1h3m252 0h3m-261 1h3m258 0h3m-267 1h3m264 0h3m-495 1h2m220 0h3m270 0h3m220 0h2m-500 1h2m276 0h2m-283 1h3m280 0h3m-289 1h3m286 0h3m-294 1h2m292 0h2m-299 1h3m296 0h3m-304 1h2m302 0h2m-308 1h2m306 0h2m-313 1h3m310 0h3m-318 1h2m316 0h2m-322 1h2m320 0h2m-327 1h3m324 0h3m-332 1h2m330 0h2m-336 1h2m334 0h2m-340 1h2m338 0h2m-344 1h2m342 0h2m-348 1h2m346 0h2m-352 1h2m350 0h2m-356 1h2m354 0h2m-360 1h2m358 0h2m-364 1h2m362 0h2m-368 1h2m366 0h2m-372 1h2m370 0h2m-376 1h2m374 0h2m-380 1h2m378 0h2m-384 1h2m382 0h2m-389 2h2m388 0h2m-394 1h2m392 0h2m-398 1h2m396 0h2m-403 2h2m402 0h2m-408 1h2m406 0h2m-413 2h2m412 0h2m-418 1h2m416 0h2m-423 2h2m422 0h2m-428 1h2m426 0h2m-433 2h2m432 0h2m-439 2h2m438 0h2m-445 2h2m444 0h2m-451 2h2m450 0h2m-457 2h2m456 0h2m-464 3h2m464 0h2m-472 3h2m472 0h2m-480 3h2m480 0h2m-488 3h2m488 0h2m-496 3h2m496 0h2m-506 5h2m508 0h2m-518 5h2m520 0h2m-534 9h2m540 0h2m-289 14h5m22 0h7m-46 1h12m34 0h12m-66 1h8m58 0h8m-81 1h7m74 0h7m-94 1h6m88 0h6m-105 1h5m100 0h5m-115 1h5m110 0h5m-124 1h4m120 0h4m-132 1h4m128 0h4m-140 1h4m136 0h4m-148 1h4m144 0h4m-155 1h3m152 0h3m-162 1h4m158 0h4m-169 1h3m166 0h3m-175 1h3m172 0h3m-181 1h3m178 0h3m-187 1h3m184 0h3m-192 1h2m190 0h2m-197 1h3m194 0h3m-203 1h3m200 0h3m-208 1h2m206 0h2m-213 1h3m210 0h3m-218 1h2m216 0h2m-222 1h2m220 0h2m-226 1h2m224 0h2m-231 1h3m228 0h3m-236 1h2m234 0h2m-240 1h2m238 0h2m-244 1h2m242 0h2m-248 1h2m246 0h2m-252 1h2m250 0h2m-256 1h2m254 0h2m-260 1h2m258 0h2m-264 1h2m262 0h2m-268 1h2m266 0h2m-273 2h2m272 0h2m-278 1h2m276 0h2m-282 1h2m280 0h2m-287 2h2m286 0h2m-292 1h2m290 0h2m-297 2h2m296 0h2m-303 2h2m302 0h2m-309 2h2m308 0h2m-315 2h2m314 0h2m-321 2h2m320 0h2m-328 3h2m328 0h2m-336 3h2m336 0h2m-344 3h2m344 0h2m-353 4h2m354 0h2m-365 6h2m368 0h2m-176 50h3m-35 1h9m26 0h9m-50 1h6m44 0h6m-61 1h5m56 0h5m-71 1h5m66 0h5m-80 1h4m76 0h4m-87 1h3m84 0h3m-93 1h3m90 0h3m-99 1h3m96 0h3m-105 1h3m102 0h3m-111 1h3m108 0h3m-116 1h2m114 0h2m-121 1h3m118 0h3m-126 1h2m124 0h2m-130 1h2m128 0h2m-135 1h3m132 0h3m-140 1h2m138 0h2m-144 1h2m142 0h2m-148 1h2m146 0h2m-153 2h2m152 0h2m-158 1h2m156 0h2m-162 1h2m160 0h2m-167 2h2m166 0h2m-172 1h2m170 0h2m-177 2h2m176 0h2m-184 3h2m184 0h2m-192 3h2m192 0h2m-200 3h2m200 0h2m-213 8h2m218 0h2m-222 231h2m218 0h2m-213 8h2m200 0h2m-200 3h2m192 0h2m-192 3h2m184 0h2m-184 3h2m176 0h2m-177 2h2m170 0h2m-172 1h2m166 0h2m-167 2h2m160 0h2m-162 1h2m156 0h2m-158 1h2m152 0h2m-153 2h2m146 0h2m-148 1h2m142 0h2m-144 1h2m138 0h2m-140 1h3m132 0h3m-135 1h2m128 0h2m-130 1h2m124 0h2m-126 1h3m118 0h3m-121 1h2m114 0h2m-116 1h3m108 0h3m-111 1h3m102 0h3m-105 1h3m96 0h3m-99 1h3m90 0h3m-93 1h3m84 0h3m-87 1h4m76 0h4m-80 1h5m66 0h5m-71 1h5m56 0h5m-61 1h6m44 0h6m-50 1h9m26 0h9m-35 1h26m-199 50h2m368 0h2m-365 6h2m354 0h2m-353 4h2m344 0h2m-344 3h2m336 0h2m-336 3h2m328 0h2m-328 3h2m320 0h2m-321 2h2m314 0h2m-315 2h2m308 0h2m-309 2h2m302 0h2m-303 2h2m296 0h2m-297 2h2m290 0h2m-292 1h2m286 0h2m-287 2h2m280 0h2m-282 1h2m276 0h2m-278 1h2m272 0h2m-273 2h2m266 0h2m-268 1h2m262 0h2m-264 1h2m258 0h2m-260 1h2m254 0h2m-256 1h2m250 0h2m-252 1h2m246 0h2m-248 1h2m242 0h2m-244 1h2m238 0h2m-240 1h2m234 0h2m-236 1h3m228 0h3m-231 1h2m224 0h2m-226 1h2m220 0h2m-222 1h3m214 0h3m-217 1h2m210 0h2m-212 1h2m206 0h2m-208 1h3m200 0h3m-203 1h3m194 0h3m-197 1h2m190 0h2m-192 1h3m184 0h3m-187 1h3m178 0h3m-181 1h3m172 0h3m-175 1h3m166 0h3m-169 1h4m158 0h4m-162 1h3m152 0h3m-155 1h4m144 0h4m-148 1h4m136 0h4m-140 1h4m128 0h4m-132 1h4m120 0h4m-124 1h5m110 0h5m-115 1h5m100 0h5m-105 1h6m88 0h6m-94 1h7m74 0h7m-81 1h8m58 0h8m-66 1h12m34 0h12m-46 1h34m-289 14h2m540 0h2m-534 9h2m520 0h2m-518 5h2m508 0h2m-506 5h2m496 0h2m-496 3h2m488 0h2m-488 3h2m480 0h2m-480 3h2m472 0h2m-472 3h2m464 0h2m-464 3h2m456 0h2m-457 2h2m450 0h2m-451 2h2m444 0h2m-445 2h2m438 0h2m-439 2h2m432 0h2m-433 2h2m426 0h2m-428 1h2m422 0h2m-423 2h2m416 0h2m-418 1h2m412 0h2m-413 2h2m406 0h2m-408 1h2m402 0h2m-403 2h2m396 0h2m-398 1h2m392 0h2m-394 1h2m388 0h2m-389 2h2m382 0h2m-384 1h2m378 0h2m-380 1h2m374 0h2m-376 1h2m370 0h2m-372 1h2m366 0h2m-368 1h2m362 0h2m-364 1h2m358 0h2m-360 1h2m354 0h2m-356 1h2m350 0h2m-352 1h2m346 0h2m-348 1h2m342 0h2m-344 1h2m338 0h2m-340 1h2m334 0h2m-336 1h2m330 0h2m-332 1h3m324 0h3m-327 1h2m320 0h2m-322 1h2m316 0h2m-318 1h3m310 0h3m-313 1h2m306 0h2m-308 1h2m302 0h2m-304 1h3m296 0h3m-299 1h2m292 0h2m-294 1h3m286 0h3m-289 1h3m280 0h3m-283 1h2m276 0h2m-500 1h2m220 0h3m270 0h3m220 0h2m-495 1h3m264 0h3m-267 1h3m258 0h3m-261 1h3m252 0h3m-255 1h3m246 0h3m-249 1h3m240 0h3m-243 1h3m234 0h3m-237 1h3m228 0h3m-231 1h4m220 0h4m-224 1h3m214 0h3m-217 1h4m206 0h4m-210 1h4m198 0h4m-450 1h2m246 0h4m190 0h4m246 0h2m-442 1h4m182 0h4m-186 1h4m174 0h4m-178 1h5m164 0h5m-169 1h5m154 0h5m-159 1h5m144 0h5m-149 1h6m132 0h6m-411 1h2m271 0h6m120 0h6m271 0h2m-399 1h7m106 0h7m-113 1h8m90 0h8m-98 1h10m70 0h10m-80 1h15m40 0h15"/><path transform="translate(0.5,0)" d="M0 0m0 70v1m0 660v1m1 -664v2m0 311v40m0 311v2m1 -667v1m0 298v15m0 40v15m0 298v1m1 -669v1m0 289v10m0 70v10m0 289v1m1 -671v1m0 282v8m0 90v8m0 282v1m1 -673v1m0 276v7m0 106v7m0 276v1m1 -676v2m0 271v6m0 120v6m0 271v2m1 -679v1m0 267v6m0 132v6m0 267v1m1 -681v1m0 263v5m0 144v5m0 263v1m1 -683v1m0 259v5m0 154v5m0 259v1m1 -685v1m0 255v5m0 164v5m0 255v1m1 -687v1m0 252v4m0 174v4m0 252v1m1 -689v1m0 249v4m0 182v4m0 249v1m1 -692v2m0 246v4m0 190v4m0 246v2m1 -695v1m0 244v4m0 198v4m0 244v1m1 -697v1m0 241v4m0 206v4m0 241v1m1 -699v1m0 239v3m0 214v3m0 239v1m1 -701v1m0 236v4m0 220v4m0 236v1m1 -703v1m0 234v3m0 228v3m0 234v1m1 -705v1m0 232v3m0 234v3m0 232v1m1 -707v1m0 230v3m0 240v3m0 230v1m1 -709v1m0 228v3m0 246v3m0 228v1m1 -711v1m0 226v3m0 252v3m0 226v1m1 -713v1m0 224v3m0 258v3m0 224v1m1 -715v1m0 222v3m0 264v3m0 222v1m1 -718v2m0 220v3m0 270v3m0 220v2m1 -721v1m0 220v2m0 276v2m0 220v1m1 -723v1m0 218v3m0 280v3m0 218v1m1 -725v1m0 216v3m0 286v3m0 216v1m1 -727v1m0 215v2m0 292v2m0 215v1m1 -729v1m0 213v3m0 296v3m0 213v1m1 -731v1m0 212v2m0 302v2m0 212v1m1 -733v1m0 211v2m0 306v2m0 211v1m1 -735v1m0 209v3m0 310v3m0 209v1m1 -737v1m0 208v2m0 316v2m0 208v1m1 -739v1m0 207v2m0 320v2m0 207v1m1 -741v1m0 205v3m0 324v3m0 205v1m1 -743v1m0 204v2m0 330v2m0 204v1m1 -745v1m0 203v2m0 334v2m0 203v1m1 -747v1m0 202v2m0 338v2m0 202v1m1 -749v1m0 201v2m0 342v2m0 201v1m1 -550v2m0 346v2m1 -352v2m0 350v2m1 -554v1m0 197v2m0 354v2m0 197v1m1 -755v1m0 196v2m0 358v2m0 196v1m1 -757v1m0 195v2m0 362v2m0 195v1m1 -759v1m0 194v2m0 366v2m0 194v1m1 -761v1m0 193v2m0 370v2m0 193v1m1 -763v1m0 192v2m0 374v2m0 192v1m1 -765v1m0 191v2m0 378v2m0 191v1m1 -767v1m0 190v2m0 382v2m0 190v1m1 -769v1m0 190v1m0 386v1m0 190v1m1 -771v1m0 189v2m0 388v2m0 189v1m1 -773v1m0 188v2m0 392v2m0 188v1m1 -587v2m0 396v2m1 -401v1m0 400v1m1 -590v1m0 185v2m0 402v2m0 185v1m1 -779v1m0 184v2m0 406v2m0 184v1m1 -781v1m0 184v1m0 410v1m0 184v1m1 -783v1m0 183v2m0 412v2m0 183v1m1 -785v1m0 182v2m0 416v2m0 182v1m1 -787v1m0 182v1m0 420v1m0 182v1m1 -607v2m0 422v2m1 -428v2m0 426v2m1 -611v1m0 179v1m0 430v1m0 179v1m1 -793v1m0 178v2m0 432v2m0 178v1m1 -795v1m0 178v1m0 436v1m0 178v1m1 -797v1m0 177v2m0 438v2m0 177v1m1 -621v1m0 442v1m1 -446v2m0 444v2m1 -625v1m0 175v1m0 448v1m1 -452v2m0 450v2m1 -455v1m0 454v1m1 -458v2m0 456v2m1 -461v1m0 460v1m1 -463v1m0 462v1m1 -466v2m0 464v2m1 -469v1m0 468v1m1 -471v1m0 470v1m1 -474v2m0 472v2m1 -477v1m0 476v1m1 -479v1m0 478v1m1 -482v2m0 480v2m1 -485v1m0 484v1m1 -487v1m0 486v1m1 -490v2m0 488v2m1 -493v1m0 492v1m1 -495v1m0 494v1m1 -498v2m0 496v2m1 -501v1m0 500v1m1 -503v1m0 502v1m1 -505v1m0 504v1m1 -507v1m0 506v1m1 -510v2m0 508v2m1 -513v1m0 512v1m1 -515v1m0 514v1m1 -517v1m0 516v1m1 -519v1m0 518v1m1 -522v2m0 520v2m1 -525v1m0 524v1m1 -527v1m0 526v1m1 -529v1m0 528v1m1 -531v1m0 530v1m1 -533v1m0 532v1m1 -535v1m0 534v1m1 -537v1m0 536v1m1 -539v1m0 538v1m1 -542v2m0 540v2m1 -545v1m0 544v1m1 -547v1m0 546v1m1 -549v1m0 548v1m1 -551v1m0 550v1m1 -553v1m0 552v1m1 -555v1m0 554v1m1 -557v1m0 556v1m1 -559v1m0 558v1m1 -561v1m0 560v1m1 -563v1m0 562v1m1 -565v1m0 564v1m1 -567v1m0 566v1m1 -569v1m0 568v1m1 -571v1m0 268v34m0 268v1m1 -573v1m0 257v12m0 34v12m0 257v1m1 -575v1m0 250v8m0 58v8m0 250v1m1 -577v1m0 244v7m0 74v7m0 244v1m1 -579v1m0 239v6m0 88v6m0 239v1m1 -581v1m0 235v5m0 100v5m0 235v1m1 -583v1m0 231v5m0 110v5m0 231v1m1 -585v1m0 228v4m0 120v4m0 228v1m1 -361v4m0 128v4m1 -140v4m0 136v4m1 -367v1m0 218v4m0 144v4m0 218v1m1 -591v1m0 216v3m0 152v3m0 216v1m1 -593v1m0 213v4m0 158v4m0 213v1m1 -595v1m0 211v3m0 166v3m0 211v1m1 -597v1m0 209v3m0 172v3m0 209v1m1 -599v1m0 207v3m0 178v3m0 207v1m1 -601v1m0 205v3m0 184v3m0 205v1m1 -603v1m0 204v2m0 190v2m0 204v1m1 -402v3m0 194v3m1 -203v3m0 200v3m1 -407v1m0 198v2m0 206v2m0 198v1m1 -609v1m0 196v3m0 210v3m0 196v1m1 -611v1m0 195v2m0 216v2m0 195v1m1 -613v1m0 194v2m0 220v2m0 194v1m1 -421v2m0 224v2m1 -231v3m0 228v3m1 -426v1m0 189v2m0 234v2m0 189v1m1 -619v1m0 188v2m0 238v2m0 188v1m1 -621v1m0 187v2m0 242v2m0 187v1m1 -623v1m0 186v2m0 246v2m0 186v1m1 -439v2m0 250v2m1 -256v2m0 254v2m1 -443v1m0 182v2m0 258v2m0 182v1m1 -629v1m0 181v2m0 262v2m0 181v1m1 -450v2m0 266v2m1 -271v1m0 270v1m1 -453v1m0 178v2m0 272v2m0 178v1m1 -635v1m0 177v2m0 276v2m0 177v1m1 -460v2m0 280v2m1 -285v1m0 284v1m1 -463v1m0 174v2m0 286v2m0 174v1m1 -641v1m0 173v2m0 290v2m0 173v1m1 -469v1m0 294v1m1 -298v2m0 296v2m1 -473v1m0 171v1m0 300v1m0 171v1m1 -647v1m0 170v2m0 302v2m0 170v1m1 -478v1m0 306v1m1 -310v2m0 308v2m1 -482v1m0 168v1m0 312v1m0 168v1m1 -653v1m0 167v2m0 314v2m0 167v1m1 -487v1m0 318v1m1 -322v2m0 320v2m1 -491v1m0 165v1m0 324v1m0 165v1m1 -493v1m0 326v1m1 -330v2m0 328v2m1 -497v1m0 163v1m0 332v1m0 163v1m1 -499v1m0 334v1m1 -338v2m0 336v2m1 -503v1m0 161v1m0 340v1m0 161v1m1 -505v1m0 342v1m1 -346v2m0 344v2m1 -509v1m0 159v1m0 348v1m0 159v1m1 -511v1m0 350v1m1 -353v1m0 352v1m1 -514v1m0 157v2m0 354v2m0 157v1m1 -517v1m0 358v1m1 -361v1m0 360v1m1 -363v1m0 362v1m1 -365v1m0 364v1m1 -523v1m0 155v1m0 366v1m0 155v1m1 -526v2m0 368v2m1 -373v1m0 372v1m1 -375v1m0 374v1m1 -377v1m0 376v1m1 -532v1m0 152v1m0 378v1m0 152v1m1 -534v1m0 380v1m1 -383v1m0 382v1m1 -385v1m0 384v1m1 -387v1m0 386v1m1 -540v1m0 150v1m0 388v1m0 150v1m1 -542v1m0 390v1m1 -393v1m0 392v1m1 -395v1m0 394v1m1 -397v1m0 396v1m1 -399v1m0 398v1m1 -401v1m0 400v1m1 -551v1m0 147v1m0 402v1m0 147v1m1 -553v1m0 404v1m1 -407v1m0 406v1m1 -409v1m0 408v1m1 -411v1m0 410v1m1 -413v1m0 412v1m1 -415v1m0 414v1m1 -417v1m0 416v1m3 -420v1m0 420v1m1 -423v1m0 422v1m1 -425v1m0 424v1m1 -427v1m0 426v1m1 -429v1m0 428v1m3 -432v1m0 432v1m1 -435v1m0 434v1m1 -437v1m0 436v1m3 -440v1m0 440v1m1 -443v1m0 442v1m3 -446v1m0 446v1m1 -449v1m0 448v1m3 -452v1m0 452v1m1 -455v1m0 454v1m3 -458v1m0 216v26m0 216v1m1 -252v9m0 26v9m1 -50v6m0 44v6m1 -260v1m0 198v5m0 56v5m0 198v1m1 -270v5m0 66v5m1 -80v4m0 76v4m1 -276v1m0 188v3m0 84v3m0 188v1m1 -282v3m0 90v3m1 -99v3m0 96v3m1 -287v1m0 181v3m0 102v3m0 181v1m1 -293v3m0 108v3m1 -116v2m0 114v2m1 -297v1m0 175v3m0 118v3m0 175v1m1 -302v2m0 124v2m1 -130v2m0 128v2m1 -135v3m0 132v3m1 -140v2m0 138v2m1 -312v1m0 167v2m0 142v2m0 167v1m1 -316v2m0 146v2m1 -151v1m0 150v1m1 -154v2m0 152v2m1 -158v2m0 156v2m1 -162v2m0 160v2m1 -165v1m0 164v1m1 -328v1m0 159v2m0 166v2m0 159v1m1 -332v2m0 170v2m1 -175v1m0 174v1m1 -178v2m0 176v2m1 -181v1m0 180v1m1 -183v1m0 182v1m1 -186v2m0 184v2m1 -189v1m0 188v1m1 -191v1m0 190v1m1 -194v2m0 192v2m1 -197v1m0 196v1m1 -199v1m0 198v1m1 -202v2m0 200v2m1 -205v1m0 204v1m1 -207v1m0 206v1m1 -209v1m0 208v1m1 -211v1m0 210v1m1 -213v1m0 212v1m1 -215v1m0 214v1m1 -217v1m0 216v1m1 -220v2m0 218v2m1 -223v1m0 222v1m1 -225v1m0 224v1m1 -227v1m0 226v1m1 -229v1m0 228v1m3 -232v1m0 232v1m1 -235v1m0 234v1m1 -237v1m0 236v1m1 -239v1m0 238v1m1 -241v1m0 240v1m1 -243v1m0 242v1m1 -245v1m0 244v1m3 -248v1m0 248v1m1 -251v1m0 250v1m3 -254v1m0 254v1m1 -257v1m0 256v1m3 -260v1m0 260v1m1 -263v1m0 262v1m3 -266v1m0 266v1m5 -271v1m0 272v1m7 -278v1m0 280v1m63 -301v1m88 18v1m0 280v1m7 -278v1m0 272v1m5 -271v1m0 266v1m3 -266v1m0 262v1m1 -263v1m0 260v1m3 -260v1m0 256v1m1 -257v1m0 254v1m3 -254v1m0 250v1m1 -251v1m0 248v1m3 -248v1m0 244v1m1 -245v1m0 242v1m1 -243v1m0 240v1m1 -241v1m0 238v1m1 -239v1m0 236v1m1 -237v1m0 234v1m1 -235v1m0 232v1m3 -232v1m0 228v1m1 -229v1m0 226v1m1 -227v1m0 224v1m1 -225v1m0 222v1m1 -223v2m0 218v2m1 -220v1m0 216v1m1 -217v1m0 214v1m1 -215v1m0 212v1m1 -213v1m0 210v1m1 -211v1m0 208v1m1 -209v1m0 206v1m1 -207v1m0 204v1m1 -205v2m0 200v2m1 -202v1m0 198v1m1 -199v1m0 196v1m1 -197v2m0 192v2m1 -194v1m0 190v1m1 -191v1m0 188v1m1 -189v2m0 184v2m1 -186v1m0 182v1m1 -183v1m0 180v1m1 -181v2m0 176v2m1 -178v1m0 174v1m1 -175v2m0 170v2m1 -332v1m0 159v2m0 166v2m0 159v1m1 -328v1m0 164v1m1 -165v2m0 160v2m1 -162v2m0 156v2m1 -158v2m0 152v2m1 -154v1m0 150v1m1 -151v2m0 146v2m1 -316v1m0 167v2m0 142v2m0 167v1m1 -312v2m0 138v2m1 -140v3m0 132v3m1 -135v2m0 128v2m1 -130v2m0 124v2m1 -302v1m0 175v3m0 118v3m0 175v1m1 -297v2m0 114v2m1 -116v3m0 108v3m1 -293v1m0 181v3m0 102v3m0 181v1m1 -287v3m0 96v3m1 -99v3m0 90v3m1 -282v1m0 188v3m0 84v3m0 188v1m1 -276v4m0 76v4m1 -80v5m0 66v5m1 -270v1m0 198v5m0 56v5m0 198v1m1 -260v6m0 44v6m1 -50v9m0 26v9m1 -252v1m0 216v26m0 216v1m3 -458v1m0 454v1m1 -455v1m0 452v1m3 -452v1m0 448v1m1 -449v1m0 446v1m3 -446v1m0 442v1m1 -443v1m0 440v1m3 -440v1m0 436v1m1 -437v1m0 434v1m1 -435v1m0 432v1m3 -432v1m0 428v1m1 -429v1m0 426v1m1 -427v1m0 424v1m1 -425v1m0 422v1m1 -423v1m0 420v1m3 -420v1m0 416v1m1 -417v1m0 414v1m1 -415v1m0 412v1m1 -413v1m0 410v1m1 -411v1m0 408v1m1 -409v1m0 406v1m1 -407v1m0 404v1m1 -553v1m0 147v1m0 402v1m0 147v1m1 -551v1m0 400v1m1 -401v1m0 398v1m1 -399v1m0 396v1m1 -397v1m0 394v1m1 -395v1m0 392v1m1 -393v1m0 390v1m1 -542v1m0 150v1m0 388v1m0 150v1m1 -540v1m0 386v1m1 -387v1m0 384v1m1 -385v1m0 382v1m1 -383v1m0 380v1m1 -534v1m0 152v1m0 378v1m0 152v1m1 -532v1m0 376v1m1 -377v1m0 374v1m1 -375v1m0 372v1m1 -373v2m0 368v2m1 -526v1m0 155v1m0 366v1m0 155v1m1 -523v1m0 364v1m1 -365v1m0 362v1m1 -363v1m0 360v1m1 -361v1m0 358v1m1 -517v1m0 157v2m0 354v2m0 157v1m1 -514v1m0 352v1m1 -353v1m0 350v1m1 -511v1m0 159v1m0 348v1m0 159v1m1 -509v2m0 344v2m1 -346v1m0 342v1m1 -505v1m0 161v1m0 340v1m0 161v1m1 -503v2m0 336v2m1 -338v1m0 334v1m1 -499v1m0 163v1m0 332v1m0 163v1m1 -497v2m0 328v2m1 -330v1m0 326v1m1 -493v1m0 165v1m0 324v1m0 165v1m1 -491v2m0 320v2m1 -322v1m0 318v1m1 -487v1m0 167v2m0 314v2m0 167v1m1 -653v1m0 168v1m0 312v1m0 168v1m1 -482v2m0 308v2m1 -310v1m0 306v1m1 -478v1m0 170v2m0 302v2m0 170v1m1 -647v1m0 171v1m0 300v1m0 171v1m1 -473v2m0 296v2m1 -298v1m0 294v1m1 -469v1m0 173v2m0 290v2m0 173v1m1 -641v1m0 174v2m0 286v2m0 174v1m1 -463v1m0 284v1m1 -285v2m0 280v2m1 -460v1m0 177v2m0 276v2m0 177v1m1 -635v1m0 178v2m0 272v2m0 178v1m1 -453v1m0 270v1m1 -271v2m0 266v2m1 -450v1m0 181v2m0 262v2m0 181v1m1 -629v1m0 182v2m0 258v2m0 182v1m1 -443v2m0 254v2m1 -256v2m0 250v2m1 -439v1m0 186v2m0 246v2m0 186v1m1 -623v1m0 187v2m0 242v2m0 187v1m1 -621v1m0 188v2m0 238v2m0 188v1m1 -619v1m0 189v2m0 234v2m0 189v1m1 -426v3m0 228v3m1 -231v2m0 224v2m1 -421v1m0 194v2m0 220v2m0 194v1m1 -613v1m0 195v3m0 214v3m0 195v1m1 -611v1m0 197v2m0 210v2m0 197v1m1 -609v1m0 198v2m0 206v2m0 198v1m1 -407v3m0 200v3m1 -203v3m0 194v3m1 -402v1m0 204v2m0 190v2m0 204v1m1 -603v1m0 205v3m0 184v3m0 205v1m1 -601v1m0 207v3m0 178v3m0 207v1m1 -599v1m0 209v3m0 172v3m0 209v1m1 -597v1m0 211v3m0 166v3m0 211v1m1 -595v1m0 213v4m0 158v4m0 213v1m1 -593v1m0 216v3m0 152v3m0 216v1m1 -591v1m0 218v4m0 144v4m0 218v1m1 -367v4m0 136v4m1 -140v4m0 128v4m1 -361v1m0 228v4m0 120v4m0 228v1m1 -585v1m0 231v5m0 110v5m0 231v1m1 -583v1m0 235v5m0 100v5m0 235v1m1 -581v1m0 239v6m0 88v6m0 239v1m1 -579v1m0 244v7m0 74v7m0 244v1m1 -577v1m0 250v8m0 58v8m0 250v1m1 -575v1m0 257v12m0 34v12m0 257v1m1 -573v1m0 268v34m0 268v1m1 -571v1m0 568v1m1 -569v1m0 566v1m1 -567v1m0 564v1m1 -565v1m0 562v1m1 -563v1m0 560v1m1 -561v1m0 558v1m1 -559v1m0 556v1m1 -557v1m0 554v1m1 -555v1m0 552v1m1 -553v1m0 550v1m1 -551v1m0 548v1m1 -549v1m0 546v1m1 -547v1m0 544v1m1 -545v2m0 540v2m1 -542v1m0 538v1m1 -539v1m0 536v1m1 -537v1m0 534v1m1 -535v1m0 532v1m1 -533v1m0 530v1m1 -531v1m0 528v1m1 -529v1m0 526v1m1 -527v1m0 524v1m1 -525v2m0 520v2m1 -522v1m0 518v1m1 -519v1m0 516v1m1 -517v1m0 514v1m1 -515v1m0 512v1m1 -513v2m0 508v2m1 -510v1m0 506v1m1 -507v1m0 504v1m1 -505v1m0 502v1m1 -503v1m0 500v1m1 -501v2m0 496v2m1 -498v1m0 494v1m1 -495v1m0 492v1m1 -493v2m0 488v2m1 -490v1m0 486v1m1 -487v1m0 484v1m1 -485v2m0 480v2m1 -482v1m0 478v1m1 -479v1m0 476v1m1 -477v2m0 472v2m1 -474v1m0 470v1m1 -471v1m0 468v1m1 -469v2m0 464v2m1 -466v1m0 462v1m1 -463v1m0 460v1m1 -461v2m0 456v2m1 -458v1m0 454v1m1 -455v2m0 450v2m1 -628v1m0 175v1m0 448v1m1 -449v2m0 444v2m1 -446v1m0 442v1m1 -621v1m0 177v2m0 438v2m0 177v1m1 -797v1m0 178v1m0 436v1m0 178v1m1 -795v1m0 178v2m0 432v2m0 178v1m1 -793v1m0 179v1m0 430v1m0 179v1m1 -611v2m0 426v2m1 -428v2m0 422v2m1 -607v1m0 182v1m0 420v1m0 182v1m1 -787v1m0 182v2m0 416v2m0 182v1m1 -785v1m0 183v2m0 412v2m0 183v1m1 -783v1m0 184v1m0 410v1m0 184v1m1 -781v1m0 184v2m0 406v2m0 184v1m1 -779v1m0 185v2m0 402v2m0 185v1m1 -590v1m0 400v1m1 -401v2m0 396v2m1 -587v1m0 188v2m0 392v2m0 188v1m1 -773v1m0 189v2m0 388v2m0 189v1m1 -771v1m0 190v1m0 386v1m0 190v1m1 -769v1m0 190v2m0 382v2m0 190v1m1 -767v1m0 191v2m0 378v2m0 191v1m1 -765v1m0 192v2m0 374v2m0 192v1m1 -763v1m0 193v2m0 370v2m0 193v1m1 -761v1m0 194v2m0 366v2m0 194v1m1 -759v1m0 195v2m0 362v2m0 195v1m1 -757v1m0 196v2m0 358v2m0 196v1m1 -755v1m0 197v2m0 354v2m0 197v1m1 -554v2m0 350v2m1 -352v2m0 346v2m1 -550v1m0 201v2m0 342v2m0 201v1m1 -749v1m0 202v2m0 338v2m0 202v1m1 -747v1m0 203v2m0 334v2m0 203v1m1 -745v1m0 204v2m0 330v2m0 204v1m1 -743v1m0 205v3m0 324v3m0 205v1m1 -741v1m0 207v2m0 320v2m0 207v1m1 -739v1m0 208v2m0 316v2m0 208v1m1 -737v1m0 209v3m0 310v3m0 209v1m1 -735v1m0 211v2m0 306v2m0 211v1m1 -733v1m0 212v2m0 302v2m0 212v1m1 -731v1m0 213v3m0 296v3m0 213v1m1 -729v1m0 215v2m0 292v2m0 215v1m1 -727v1m0 216v3m0 286v3m0 216v1m1 -725v1m0 218v3m0 280v3m0 218v1m1 -723v1m0 220v2m0 276v2m0 220v1m1 -721v2m0 220v3m0 270v3m0 220v2m1 -718v1m0 222v3m0 264v3m0 222v1m1 -715v1m0 224v3m0 258v3m0 224v1m1 -713v1m0 226v3m0 252v3m0 226v1m1 -711v1m0 228v3m0 246v3m0 228v1m1 -709v1m0 230v3m0 240v3m0 230v1m1 -707v1m0 232v3m0 234v3m0 232v1m1 -705v1m0 234v3m0 228v3m0 234v1m1 -703v1m0 236v4m0 220v4m0 236v1m1 -701v1m0 239v3m0 214v3m0 239v1m1 -699v1m0 241v4m0 206v4m0 241v1m1 -697v1m0 244v4m0 198v4m0 244v1m1 -695v2m0 246v4m0 190v4m0 246v2m1 -692v1m0 249v4m0 182v4m0 249v1m1 -689v1m0 252v4m0 174v4m0 252v1m1 -687v1m0 255v5m0 164v5m0 255v1m1 -685v1m0 259v5m0 154v5m0 259v1m1 -683v1m0 263v5m0 144v5m0 263v1m1 -681v1m0 267v6m0 132v6m0 267v1m1 -679v2m0 271v6m0 120v6m0 271v2m1 -676v1m0 276v7m0 106v7m0 276v1m1 -673v1m0 282v8m0 90v8m0 282v1m1 -671v1m0 289v10m0 70v10m0 289v1m1 -669v1m0 298v15m0 40v15m0 298v1"/></g>
<!--LABELS-->
</svg><span class="t" style="left:388.40px;top:-5px;font-size:10.3px;line-height:13px;color:#ffff90;transform:scaleX(1.1918)">313</span>
<span class="t" style="left:388.60px;top:115px;font-size:10.3px;line-height:13px;color:#ffff90;transform:scaleX(1.1803)">219</span>
<span class="t" style="left:389.80px;top:235px;font-size:10.3px;line-height:13px;color:#ffff90;transform:scaleX(1.1001)">125</span>
<span class="t" style="left:392.90px;top:355px;font-size:10.3px;line-height:13px;color:#ffff90;transform:scaleX(1.0318)">31</span><svg width="800" height="800" viewBox="0 0 800 800" fill="none"><g shape-rendering="crispEdges" stroke="#ff0000" stroke-width="1" ><path transform="translate(0,0.5)" d="M0 0m395 361h12m-17 1h5m12 0h5m-25 1h3m22 0h3m-30 1h2m28 0h2m-34 1h2m32 0h2m-38 1h2m36 0h2m-42 1h2m40 0h2m-48 3h2m48 0h2m-52 61h2m48 0h2m-48 3h2m40 0h2m-42 1h2m36 0h2m-38 1h2m32 0h2m-34 1h2m28 0h2m-30 1h3m22 0h3m-25 1h5m12 0h5m-17 1h12"/><path transform="translate(0.5,0)" d="M0 0m361 395v12m1 -17v5m0 12v5m1 -25v3m0 22v3m1 -30v2m0 28v2m1 -34v2m0 32v2m1 -38v2m0 36v2m1 -42v2m0 40v2m1 -45v1m0 44v1m1 -47v1m0 46v1m1 -50v2m0 48v2m1 -53v1m0 52v1m1 -55v1m0 54v1m1 -57v1m0 56v1m1 -59v1m0 58v1m3 -62v1m0 62v1m1 -65v1m0 64v1m45 -66v1m0 64v1m1 -65v1m0 62v1m3 -62v1m0 58v1m1 -59v1m0 56v1m1 -57v1m0 54v1m1 -55v1m0 52v1m1 -53v2m0 48v2m1 -50v1m0 46v1m1 -47v1m0 44v1m1 -45v2m0 40v2m1 -42v2m0 36v2m1 -38v2m0 32v2m1 -34v2m0 28v2m1 -30v3m0 22v3m1 -25v5m0 12v5m1 -17v12"/></g></svg>
</div>
<div class="pn" style="left:812px;top:8px;width:320px;height:320px"></div>
<div class="pn" style="left:812px;top:333px;width:320px;height:115px"></div>
<div class="pn" style="left:812px;top:453px;width:320px;height:350px"></div>
<div class="btn" style="left:819px;top:16px;width:58px;height:18px;background:#5a0000;box-shadow:inset 0 1px 0 #000"></div>
<div class="btn" style="left:883px;top:16px;width:58px;height:18px;background:#333"></div>
<div class="btn" style="left:994px;top:16px;width:128px;height:18px;background:#333"></div>
<div class="btn" style="left:821px;top:64px;width:82px;height:16px;background:#606060"></div>
<div class="btn" style="left:931px;top:64px;width:82px;height:16px;background:#606060"></div>
<div class="btn" style="left:1041px;top:64px;width:82px;height:16px;background:#606060"></div>
<div class="hl" style="left:821px;top:217px;width:303px"></div>
<div class="hl" style="left:821px;top:358px;width:302px"></div>
<div class="bar" style="left:925px;top:227px"><i style="width:14px;background:#f00000"></i></div>
<div class="bar" style="left:1027px;top:227px"><i style="width:30px;background:#98d0ff"></i></div>
<div class="bar" style="left:925px;top:281px"><i style="width:1px;background:#e070b0"></i></div>
<div class="bar" style="left:1027px;top:281px"><i style="width:2px;background:#00ff00"></i></div>
<svg style="position:absolute;left:812px;top:530px" width="320" height="270" viewBox="812 530 320 270" fill="none" stroke="#c0c0c0" stroke-width="1" shape-rendering="crispEdges">
<path d="M822 777.5H1089M1088.5 543V778"/>
<path d="M822.5 775v3M866.5 775v3M911.5 775v3M955.5 775v3M999.5 775v3M1044.5 775v3"/>
<path d="M1084 543.5h5M1086 582.5h3M1084 621.5h5M1086 660.5h3M1084 699.5h5M1086 738.5h3"/>
<path stroke="#ffffff" d="M929.5 777L930.5 769.5H935.5L936.5 777M959.5 777L961 769.5H963L965.5 777M1018.5 777L1020 769.5H1022L1024.5 777M1039.5 777L1040.5 769.5H1045.5L1046.5 777"/>
</svg>
<div id="leg"></div>
<div id="cpy"></div>
<svg style="position:absolute;left:50px;top:772px" width="100" height="30" viewBox="50 772 100 30" fill="none" stroke-width="1.1">
<g stroke="#00ffff"><circle cx="60.5" cy="780.5" r="4.2"/><path d="M58 780.5h5M82 780.5h7M110.2 780.5m-4.2 0a4.2 4.2 0 1 0 8.4 0a4.2 4.2 0 1 0 -8.4 0M107.7 780.5h5M110.2 778v5M132.5 780.5h7M136 777v7"/></g>
<g stroke="#ffff00"><circle cx="60.5" cy="793.5" r="4.2"/><path d="M58 793.5h5M82 793.5h7M110.2 793.5m-4.2 0a4.2 4.2 0 1 0 8.4 0a4.2 4.2 0 1 0 -8.4 0M107.7 793.5h5M110.2 791v5M132.5 793.5h7M136 790v7"/></g>
</svg>
<span class="t" style="left:824.40px;top:18px;font-size:12.4px;line-height:16px;font-weight:bold;color:#d8d8d8;transform:scaleX(1.0648)">STRIKE</span>
<span class="t" style="left:890.50px;top:18px;font-size:12.4px;line-height:16px;font-weight:bold;color:#c4c4c4;transform:scaleX(1.1151)">NOISE</span>
<span class="t" style="left:998.80px;top:18px;font-size:12.6px;line-height:16px;font-weight:bold;color:#ffffff;transform:scaleX(1.1428)">Bng 207°</span>
<span class="t" style="left:1075.80px;top:18px;font-size:12.6px;line-height:16px;font-weight:bold;color:#00ff00;transform:scaleX(1.1928)">356mi</span>
<span class="t" style="left:829.30px;top:64px;font-size:12.4px;line-height:16px;color:#e8e8e8;transform:scaleX(1.0605)">Strikes/min</span>
<span class="t" style="left:943.70px;top:64px;font-size:12.4px;line-height:16px;color:#e8e8e8;transform:scaleX(1.0309)">Close/min</span>
<span class="t" style="left:1049.48px;top:64px;font-size:12.4px;line-height:16px;color:#e8e8e8;transform:scaleX(1.0233)">Noises/min</span>
<span class="t" style="left:882.99px;top:83px;font-size:31px;line-height:37px;font-weight:bold;color:#ffffff;transform:scaleX(1.2067)">0</span>
<span class="t" style="left:992.98px;top:83px;font-size:31px;line-height:37px;font-weight:bold;color:#ffffff;transform:scaleX(1.2200)">0</span>
<span class="t" style="left:1102.89px;top:83px;font-size:31px;line-height:37px;font-weight:bold;color:#c0c0c0;transform:scaleX(1.2067)">0</span>
<span class="t" style="left:825.80px;top:131px;font-size:12.6px;line-height:16px;color:#ffffff;transform:scaleX(1.1202)">Total Strikes</span>
<span class="t" style="left:944.30px;top:131px;font-size:12.6px;line-height:16px;color:#ffffff;transform:scaleX(1.0948)">Total Close</span>
<span class="t" style="left:1047.50px;top:131px;font-size:12.6px;line-height:16px;color:#c0c0c0;transform:scaleX(1.0937)">Total Noises</span>
<span class="t" style="left:887.60px;top:149px;font-size:12.6px;line-height:16px;color:#ffffff;transform:scaleX(1.0497)">42</span>
<span class="t" style="left:1005.30px;top:149px;font-size:12.6px;line-height:16px;color:#ffffff;transform:scaleX(1.0286)">0</span>
<span class="t" style="left:1107.50px;top:149px;font-size:12.6px;line-height:16px;color:#ffffff;transform:scaleX(1.0497)">39</span>
<span class="t" style="left:819.84px;top:203px;font-size:12.6px;line-height:16px;color:#c0c0c0;transform:scaleX(1.1592)">Lightning type distribution</span>
<span class="t" style="left:821.00px;top:225px;font-size:12.6px;line-height:16px;font-weight:bold;color:#ffffff;transform:scaleX(1.0177)">Cloud-ground</span>
<span class="t" style="left:913.40px;top:225px;font-size:12.6px;line-height:16px;color:#ffffff;transform:scaleX(1.0000)">+</span>
<span class="t" style="left:979.90px;top:225px;font-size:12.6px;line-height:16px;font-weight:bold;color:#ffffff;transform:scaleX(1.1196)">31%</span>
<span class="t" style="left:1016.00px;top:225px;font-size:12.6px;line-height:16px;font-weight:bold;color:#ffffff;transform:scaleX(0.9571)">−</span>
<span class="t" style="left:1082.50px;top:225px;font-size:12.6px;line-height:16px;font-weight:bold;color:#ffffff;transform:scaleX(1.1676)">62%</span>
<span class="t" style="left:821.00px;top:249px;font-size:12.6px;line-height:16px;font-weight:bold;color:#c0c0c0;transform:scaleX(1.0222)">Count</span>
<span class="t" style="left:925.60px;top:249px;font-size:12.6px;line-height:16px;font-weight:bold;color:#ffffff;transform:scaleX(1.0854)">13</span>
<span class="t" style="left:1028.60px;top:249px;font-size:12.6px;line-height:16px;font-weight:bold;color:#ffffff;transform:scaleX(1.0783)">26</span>
<span class="t" style="left:821.00px;top:279px;font-size:12.6px;line-height:16px;font-weight:bold;color:#ffffff;transform:scaleX(1.0502)">Intracloud</span>
<span class="t" style="left:913.40px;top:279px;font-size:12.6px;line-height:16px;color:#ffffff;transform:scaleX(1.0000)">+</span>
<span class="t" style="left:979.90px;top:279px;font-size:12.6px;line-height:16px;font-weight:bold;color:#ffffff;transform:scaleX(1.1331)">2%</span>
<span class="t" style="left:1016.00px;top:279px;font-size:12.6px;line-height:16px;font-weight:bold;color:#ffffff;transform:scaleX(0.9571)">−</span>
<span class="t" style="left:1082.50px;top:279px;font-size:12.6px;line-height:16px;font-weight:bold;color:#ffffff;transform:scaleX(1.1664)">5%</span>
<span class="t" style="left:821.00px;top:303px;font-size:12.6px;line-height:16px;font-weight:bold;color:#c0c0c0;transform:scaleX(1.0222)">Count</span>
<span class="t" style="left:926.20px;top:303px;font-size:12.6px;line-height:16px;font-weight:bold;color:#ffffff;transform:scaleX(0.8286)">1</span>
<span class="t" style="left:1028.60px;top:303px;font-size:12.6px;line-height:16px;font-weight:bold;color:#ffffff;transform:scaleX(1.0429)">2</span>
<span class="t" style="left:821.00px;top:337px;font-size:16.6px;line-height:21px;font-weight:bold;color:#00ff00;transform:scaleX(1.2244)">3/22/2026 9:10:18 AM</span>
<span class="t" style="left:821.00px;top:376px;font-size:12.6px;line-height:16px;color:#ffffff;transform:scaleX(1.0680)">Squelch</span>
<span class="t" style="left:909.50px;top:376px;font-size:12.6px;line-height:16px;color:#ffffff;transform:scaleX(1.0286)">0</span>
<span class="t" style="left:981.00px;top:376px;font-size:12.6px;line-height:16px;color:#ffffff;transform:scaleX(1.0976)">Upload</span>
<span class="t" style="left:1060.09px;top:376px;font-size:12.6px;line-height:16px;color:#c0c0c0;transform:scaleX(1.1125)">Disabled</span>
<span class="t" style="left:819.88px;top:396px;font-size:12.6px;line-height:16px;color:#ffffff;transform:scaleX(1.1189)">Persistence</span>
<span class="t" style="left:909.50px;top:396px;font-size:12.6px;line-height:16px;color:#ffffff;transform:scaleX(1.0821)">90 min</span>
<span class="t" style="left:981.00px;top:396px;font-size:12.6px;line-height:16px;color:#ffffff;transform:scaleX(1.1272)">Capture</span>
<span class="t" style="left:1061.20px;top:396px;font-size:12.6px;line-height:16px;color:#00ff00;transform:scaleX(1.0440)">Active</span>
<span class="t" style="left:819.91px;top:416px;font-size:12.6px;line-height:16px;color:#ffffff;transform:scaleX(1.0940)">Range</span>
<span class="t" style="left:909.50px;top:416px;font-size:12.6px;line-height:16px;color:#ffffff;transform:scaleX(1.1054)">313 mi</span>
<span class="t" style="left:979.92px;top:416px;font-size:12.6px;line-height:16px;color:#ffffff;transform:scaleX(1.0825)">Receiver</span>
<span class="t" style="left:1060.09px;top:416px;font-size:12.6px;line-height:16px;color:#00ff00;transform:scaleX(1.1103)">Enabled</span>
<span class="t" style="left:821.00px;top:463px;font-size:12.6px;line-height:16px;color:#c0c0c0;transform:scaleX(1.0856)">Uptime</span>
<span class="t" style="left:910.40px;top:463px;font-size:12.6px;line-height:16px;color:#ffffff;transform:scaleX(1.1226)">1652:55</span>
<span class="t" style="left:979.89px;top:463px;font-size:12.6px;line-height:16px;color:#c0c0c0;transform:scaleX(1.1147)">Peak time</span>
<span class="t" style="left:1060.10px;top:463px;font-size:12.6px;line-height:16px;color:#c0c0c0;transform:scaleX(1.1037)">Plot</span>
<span class="t" style="left:819.86px;top:486px;font-size:12.6px;line-height:16px;color:#c0c0c0;transform:scaleX(1.1399)">Peak rate</span>
<span class="t" style="left:909.50px;top:486px;font-size:12.6px;line-height:16px;color:#ffffff;transform:scaleX(1.0912)">2/min</span>
<span class="t" style="left:982.50px;top:486px;font-size:12.6px;line-height:16px;color:#ffffff;transform:scaleX(1.0558)">1:26 AM</span>
<span class="t" style="left:1061.20px;top:486px;font-size:12.6px;line-height:16px;color:#ffffff;transform:scaleX(1.0905)">Strike</span>
<span class="t" style="left:822.30px;top:516px;font-size:12.6px;line-height:16px;color:#c0c0c0;transform:scaleX(1.1139)">Trend graph</span>
<span class="t" style="left:908.70px;top:516px;font-size:12.6px;line-height:16px;color:#ffffff;transform:scaleX(1.0795)">60 min</span>
<span class="t" style="left:1092.50px;top:535px;font-size:12.2px;line-height:16px;color:#c0c0c0;transform:scaleX(0.9290)">30</span>
<span class="t" style="left:1092.50px;top:613px;font-size:12.2px;line-height:16px;color:#c0c0c0;transform:scaleX(0.9290)">20</span>
<span class="t" style="left:1093.50px;top:691px;font-size:12.2px;line-height:16px;color:#c0c0c0;transform:scaleX(0.8564)">10</span>
<span class="t" style="left:820.60px;top:781px;font-size:12.2px;line-height:16px;color:#c0c0c0;transform:scaleX(0.9000)">60</span>
<span class="t" style="left:864.30px;top:781px;font-size:12.2px;line-height:16px;color:#c0c0c0;transform:scaleX(0.9218)">50</span>
<span class="t" style="left:908.70px;top:781px;font-size:12.2px;line-height:16px;color:#c0c0c0;transform:scaleX(0.9218)">40</span>
<span class="t" style="left:952.70px;top:781px;font-size:12.2px;line-height:16px;color:#c0c0c0;transform:scaleX(0.9290)">30</span>
<span class="t" style="left:997.00px;top:781px;font-size:12.2px;line-height:16px;color:#c0c0c0;transform:scaleX(0.9290)">20</span>
<span class="t" style="left:1043.30px;top:781px;font-size:12.2px;line-height:16px;color:#c0c0c0;transform:scaleX(0.8492)">10</span>
<span class="t" style="left:1087.50px;top:781px;font-size:12.2px;line-height:16px;color:#c0c0c0;transform:scaleX(0.8286)">0</span>
<span class="t" style="left:1100.60px;top:781px;font-size:12.2px;line-height:16px;color:#c0c0c0;transform:scaleX(0.9226)">min</span>
<span class="t" style="left:13.10px;top:761px;font-size:9.4px;line-height:13px;color:#ffffff;transform:scaleX(0.9873)">Symbols</span>
<span class="t" style="left:53.10px;top:761px;font-size:9.4px;line-height:13px;color:#ffffff;transform:scaleX(0.9945)">-CG</span>
<span class="t" style="left:78.00px;top:761px;font-size:9.4px;line-height:13px;color:#ffffff;transform:scaleX(1.1001)">-IC</span>
<span class="t" style="left:99.20px;top:761px;font-size:9.4px;line-height:13px;color:#ffffff;transform:scaleX(1.0184)">+CG</span>
<span class="t" style="left:124.00px;top:761px;font-size:9.4px;line-height:13px;color:#ffffff;transform:scaleX(1.1671)">+IC</span>
<span class="t" style="left:153.50px;top:761px;font-size:9.4px;line-height:13px;color:#e0e0e0;transform:scaleX(0.9606)">Strike age color codes</span>
<span class="t" style="left:13.10px;top:774px;font-size:9.4px;line-height:13px;color:#ffffff;transform:scaleX(0.9302)">Recent</span>
<span class="t" style="left:13.10px;top:787px;font-size:9.4px;line-height:13px;color:#ffffff;transform:scaleX(1.0365)">Old</span>
<span class="t" style="left:153.50px;top:774px;font-size:9.4px;line-height:13px;color:#ffd000;transform:scaleX(0.9740)">15+</span>
<span class="t" style="left:188.50px;top:774px;font-size:9.4px;line-height:13px;color:#ffaa00;transform:scaleX(0.9740)">30+</span>
<span class="t" style="left:223.40px;top:774px;font-size:9.4px;line-height:13px;color:#ff8c00;transform:scaleX(0.9740)">45+</span>
<span class="t" style="left:153.50px;top:787px;font-size:9.4px;line-height:13px;color:#ff7000;transform:scaleX(0.9740)">60+</span>
<span class="t" style="left:188.50px;top:787px;font-size:9.4px;line-height:13px;color:#ff5000;transform:scaleX(0.9740)">75+</span>
<span class="t" style="left:223.40px;top:787px;font-size:9.4px;line-height:13px;color:#ff2800;transform:scaleX(0.9740)">90+</span>
<span class="t" style="left:690.00px;top:792px;font-size:9.4px;line-height:13px;color:#ffffff;transform:scaleX(0.9831)">©2005 Astrogenic Systems</span>
</body></html>
